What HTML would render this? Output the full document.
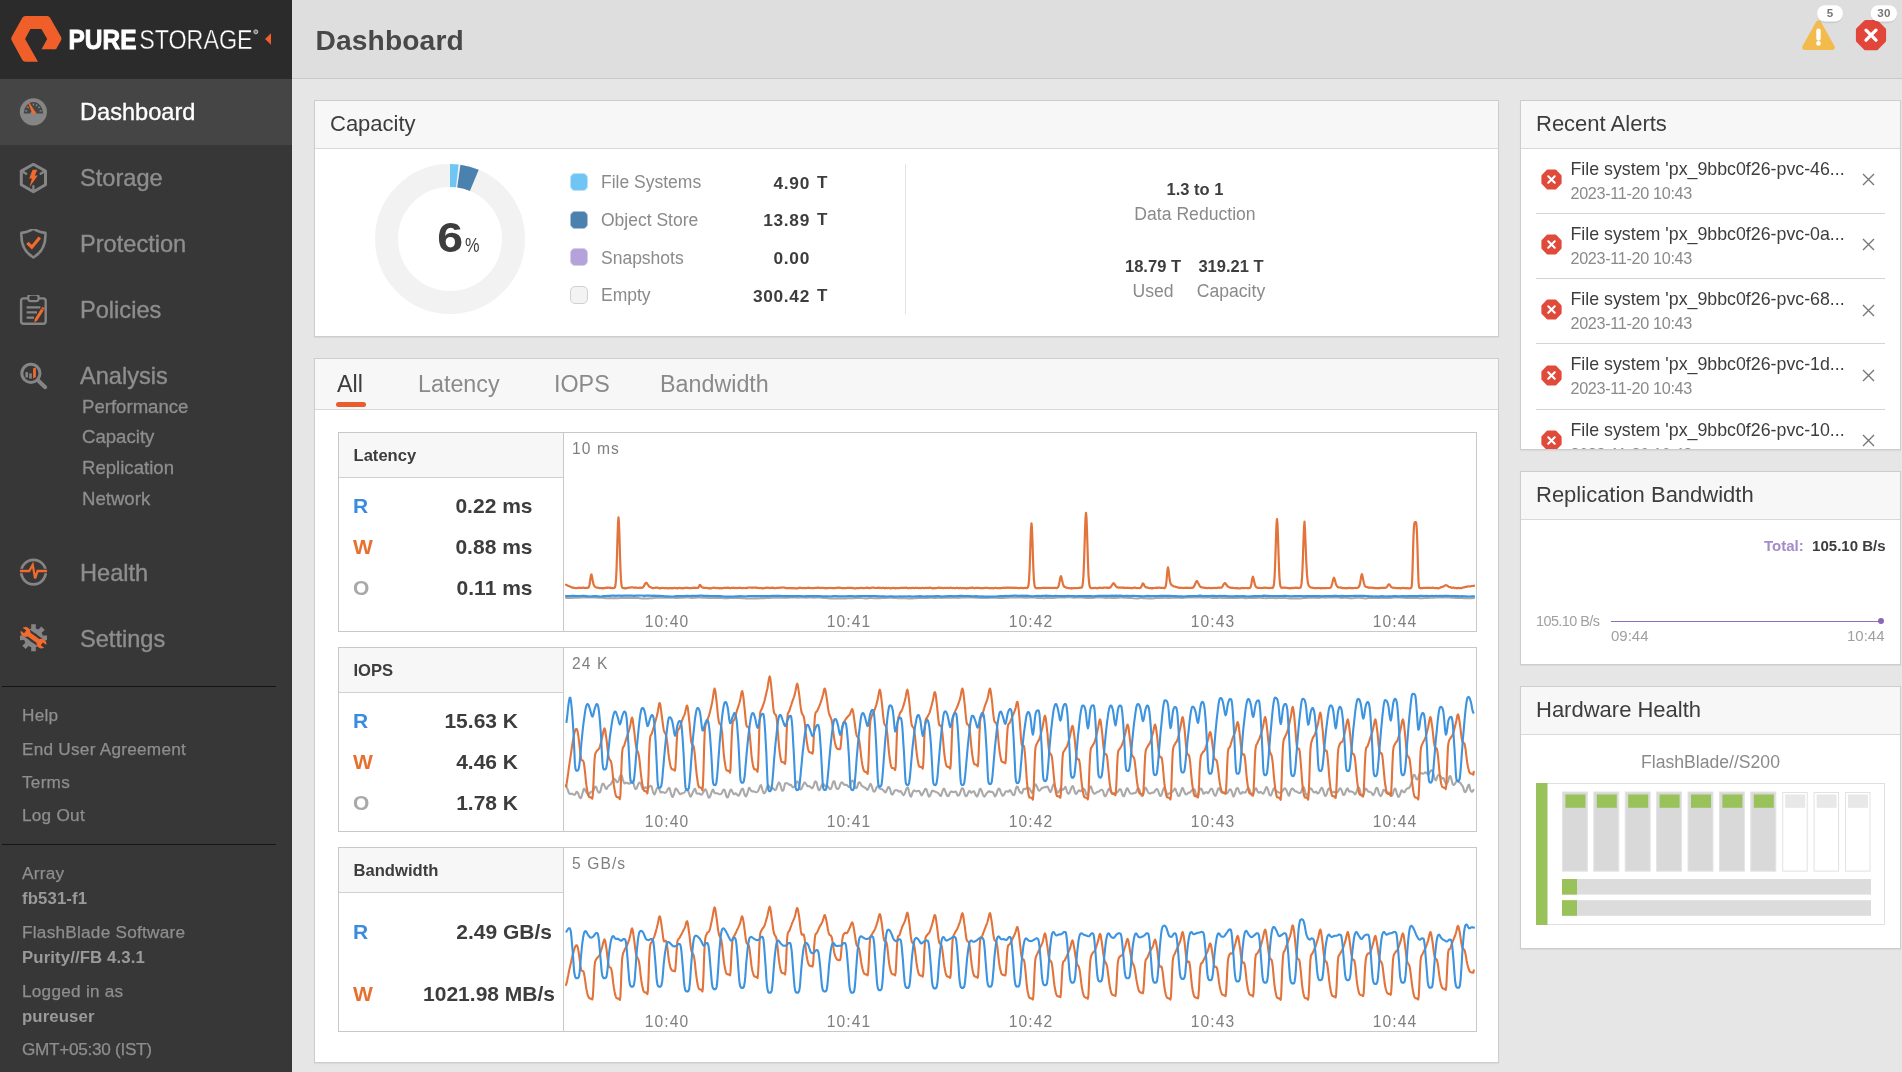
<!DOCTYPE html>
<html><head><meta charset="utf-8"><title>Dashboard</title>
<style>
*{box-sizing:border-box;margin:0;padding:0}
html,body{width:1902px;height:1072px;overflow:hidden}
body{position:relative;background:#e6e6e6;font-family:"Liberation Sans",sans-serif;color:#3d3d3d}
#root{position:absolute;left:0;top:0;width:1902px;height:1072px;will-change:transform}
.abs{position:absolute}
#sb{position:absolute;left:0;top:0;width:292px;height:1072px;background:#373737}
#sbh{position:absolute;left:0;top:0;width:292px;height:79px;background:#2b2b2b}
.nav{position:absolute;left:0;width:292px;height:66px}
.nav.active{background:#454545}
.nav .ico{position:absolute;left:19px;top:18px;width:30px;height:30px}
.nav .ico svg{display:block}
.nav .lbl{position:absolute;left:80px;top:18.5px;font-size:23.6px;line-height:28px;color:#8e8e8e;-webkit-text-stroke:0.35px #8e8e8e;white-space:nowrap}
.nav.active .lbl{color:#fff;-webkit-text-stroke:0.35px #fff}
.sub{position:absolute;left:82px;font-size:18.6px;line-height:22px;color:#8e8e8e;-webkit-text-stroke:0.3px #8e8e8e;white-space:nowrap}
.hr{position:absolute;left:2px;width:274px;height:1px;background:#151515}
.lnk{position:absolute;left:22px;margin-top:0.1px;font-size:17.2px;letter-spacing:0.25px;line-height:20px;color:#8e8e8e;-webkit-text-stroke:0.25px #8e8e8e;white-space:nowrap}
.lnk.b{-webkit-text-stroke:0;margin-top:0.7px;font-weight:bold;color:#9a9a9a;font-size:16.8px;letter-spacing:0.1px}
#tb{position:absolute;left:292px;top:0;width:1610px;height:79px;background:#dedede;border-bottom:1px solid #c9c9c9}
#title{position:absolute;left:23.5px;top:22px;font-size:28.2px;font-weight:bold;line-height:36px;color:#484848;letter-spacing:0.12px;white-space:nowrap}
.panel{position:absolute;background:#fff;border:1px solid #cdcdcd;box-shadow:0 1px 1px rgba(0,0,0,0.05)}
.ph{position:absolute;left:0;top:0;right:0;height:48px;background:#f7f7f7;border-bottom:1px solid #d9d9d9}
.ph span{position:absolute;left:15px;top:10px;font-size:22px;line-height:26px;color:#3d3d3d;white-space:nowrap}
.pct{left:122.5px;top:112px;white-space:nowrap;color:#3d3d3d}
.pct b{font-size:43.4px;line-height:48px;display:inline-block;transform:scaleX(1.07)}
.pct span{font-size:20.4px;margin-left:3.6px;display:inline-block;transform:scaleX(0.8);transform-origin:left bottom}
.sw{position:absolute;left:255px;width:18px;height:18px;border-radius:5px;border:1px solid}
.cl{position:absolute;left:286px;font-size:17.5px;line-height:26px;color:#8a8a8a;white-space:nowrap}
.cv{position:absolute;left:395px;width:100px;text-align:right;font-size:17.3px;letter-spacing:0.7px;line-height:26px;font-weight:bold;color:#3d3d3d;white-space:nowrap}
.cu{position:absolute;left:502px;font-size:17px;line-height:26px;font-weight:bold;color:#3d3d3d}
.vsep{left:590px;top:63px;width:1px;height:150px;background:#e3e3e3}
.cstat{text-align:center;font-size:16.5px;line-height:22px;white-space:nowrap;color:#3d3d3d}
.cstat.g{color:#8a8a8a;font-size:17.6px}
.tabs{position:absolute;left:0;top:0;right:0;height:51px;background:#f7f7f7;border-bottom:1px solid #d9d9d9}
.tab{position:absolute;top:10px;font-size:23.3px;line-height:30px;color:#8a8a8a;white-space:nowrap}
.tab.on{color:#3d3d3d}
.tabbar{position:absolute;left:21px;top:43px;width:30px;height:5.4px;border-radius:3px;background:#ea5b2e}
.mbox{position:absolute;left:23px;width:1139px;border:1px solid #c8c8c8;background:#fff}
.mleft{position:absolute;left:0;top:0;width:225px;bottom:0;border-right:1px solid #c8c8c8}
.mh{position:absolute;left:0;top:0;right:0;height:45px;background:#f7f7f7;border-bottom:1px solid #d0d0d0;font-weight:bold;font-size:16.6px;line-height:46px;padding-left:14.5px;color:#3d3d3d}
.ml{position:absolute;left:14px;font-weight:bold;font-size:21px;line-height:26px}
.mv{position:absolute;font-weight:bold;font-size:21px;line-height:26px;color:#3d3d3d;white-space:nowrap}
.mchart{position:absolute;left:225px;top:0;right:0;bottom:0}
.mchart svg{display:block}
.al{position:absolute;left:15px;width:349px;height:65px;border-bottom:1px solid #d4d4d4}
.at{position:absolute;left:34.5px;top:7.5px;font-size:17.8px;line-height:24px;color:#3d3d3d;white-space:nowrap}
.ad{position:absolute;left:34.5px;top:31.5px;font-size:16.2px;letter-spacing:-0.32px;line-height:24px;color:#8a8a8a;white-space:nowrap}
.rt{right:14.5px;top:64px;font-size:15px;line-height:20px;white-space:nowrap}
.rt .p{color:#a58bc9;font-weight:bold}
.rl{font-size:15px;line-height:18px;color:#a0a0a0;white-space:nowrap}
.hwt{left:0;right:0;top:64px;text-align:center;font-size:17.6px;line-height:22px;color:#8a8a8a}
.ax{font-family:"Liberation Sans",sans-serif;font-size:15.6px;letter-spacing:1.1px;fill:#7f7f7f}

</style></head>
<body>
<div id="root">

<div id="sb">
  <div id="sbh"><svg class="abs" style="left:0;top:0" width="292" height="79" viewBox="0 0 292 79">
<path d="M14.59 38.64 L25.32 19.40 L47.12 19.40 L58.11 38.64 L47.12 58.40 L25.32 58.40 Z" fill="#f05f2a" stroke="#f05f2a" stroke-width="6.8" stroke-linejoin="round"/>
<path d="M30.4 29.05 L41.4 29.05 L47.2 38.9 L41.5 49.2 L64 49.2 L64 66 L40.4 66 L25.1 38.9 Z" fill="#2b2b2b"/>
<circle cx="53.4" cy="46.2" r="3" fill="#f05f2a"/>
<text x="68.5" y="48.8" font-family="Liberation Sans, sans-serif" font-weight="bold" font-size="26.8" fill="#fff" stroke="#fff" stroke-width="0.9" textLength="68" lengthAdjust="spacingAndGlyphs">PURE</text>
<text x="139.2" y="48.8" font-family="Liberation Sans, sans-serif" font-size="26.8" fill="#fff" stroke="#2b2b2b" stroke-width="0.35" textLength="113.4" lengthAdjust="spacingAndGlyphs">STORAGE</text>
<circle cx="255.8" cy="31.8" r="2" fill="#777" stroke="#ddd" stroke-width="0.8"/>
<path d="M265 39 L271 33.2 V44.8 Z" fill="#f05f2a"/>
</svg></div>
  <div class="nav active" style="top:79px"><span class="ico"><svg width="30" height="32" viewBox="0 0 30 32">
<circle cx="14.4" cy="14.8" r="13.6" fill="#858585"/>
<path d="M4.7 16.5 A9.7 11.4 0 0 1 24.1 16.5 L17.4 16.5 A3 2.2 0 0 0 11.4 16.5 Z" fill="#454545"/>
<path d="M8.9 5.0 L9.7 4.7 L16.3 14.7 A1.75 1.75 0 0 1 13.1 16.3 Z" fill="#f26a2e"/>
<path d="M6.0 13.6l2.2 0.5M8.0 9.6l1.7 1.2M14.4 6.4v2.2M18.0 7.2l-0.8 2M20.9 9.8l-1.6 1.3M22.8 13.6l-2.2 0.5" stroke="#858585" stroke-width="1.3"/>
</svg></span><span class="lbl">Dashboard</span></div>
  <div class="nav" style="top:145px"><span class="ico"><svg width="30" height="32" viewBox="0 0 30 32">
<path d="M14.4 1.3 L26.5 8.0 L26.5 21.8 L14.4 28.7 L2.3 21.8 L2.3 8.0 Z" fill="none" stroke="#858585" stroke-width="3" stroke-linejoin="round"/>
<path d="M3 8.2l4.2 2.6M25.8 8.2l-4.2 2.6M14.4 27.8v-4.6" stroke="#858585" stroke-width="2.3" stroke-linecap="round"/>
<path d="M13.6 6.8 L18.4 6.8 L15.8 12.6 L18.8 12.6 L10.6 24 L12.9 15.6 L10.2 15.6 Z" fill="#f26a2e"/>
</svg></span><span class="lbl">Storage</span></div>
  <div class="nav" style="top:211px"><span class="ico"><svg width="30" height="32" viewBox="0 0 30 32">
<g transform="translate(0,-1.8)"><path d="M14.4 1.5 C10.4 4.2 6.6 5.4 2.4 5.7 C1.8 16 4.8 24.8 14.4 30.2 C24 24.8 27 16 26.4 5.7 C22.2 5.4 18.4 4.2 14.4 1.5 Z" fill="none" stroke="#858585" stroke-width="2.6" stroke-linejoin="round"/>
<path d="M8.4 15.6 L12.8 20 L20.8 10.4" fill="none" stroke="#f26a2e" stroke-width="3.2" stroke-linejoin="miter"/></g>
</svg></span><span class="lbl">Protection</span></div>
  <div class="nav" style="top:277px"><span class="ico"><svg width="30" height="32" viewBox="0 0 30 32"><g transform="translate(0,-1.8)">
<path d="M9 5.2 H4.6 Q2.1 5.2 2.1 7.7 V28 Q2.1 30.5 4.6 30.5 H24.2 Q26.7 30.5 26.7 28 V7.7 Q26.7 5.2 24.2 5.2 H19.8" fill="none" stroke="#858585" stroke-width="2.4"/>
<rect x="9.2" y="1.4" width="10.4" height="6.6" rx="2.6" fill="none" stroke="#858585" stroke-width="2.2"/>
<path d="M7.6 14.2 H21.4 M7.6 19.2 H18 M7.6 24.4 H15" stroke="#858585" stroke-width="2.2"/>
<path d="M23.4 13.6 L25.9 15.2 L18.2 27.4 L15.4 29.3 L15.7 25.8 Z" fill="#f26a2e"/>
<path d="M22.4 15.3 L24.9 16.9" stroke="#383838" stroke-width="0.8"/></g>
</svg></span><span class="lbl">Policies</span></div>
  <div class="nav" style="top:343px"><span class="ico"><svg width="30" height="32" viewBox="0 0 30 32">
<circle cx="11.9" cy="12.3" r="9.1" fill="none" stroke="#858585" stroke-width="3"/>
<path d="M18.9 19.3 L26.2 26.2" stroke="#858585" stroke-width="4" stroke-linecap="round"/>
<rect x="6.4" y="11.2" width="2.6" height="5.2" fill="#858585"/>
<rect x="10.2" y="12.4" width="2.6" height="5.2" fill="#858585"/>
<path d="M14.1 7.6 L16.9 6.4 V16 L14.1 17.6 Z" fill="#f26a2e"/>
</svg></span><span class="lbl">Analysis</span></div>
  <div class="sub" style="top:396px">Performance</div>
  <div class="sub" style="top:426px">Capacity</div>
  <div class="sub" style="top:457px">Replication</div>
  <div class="sub" style="top:488px">Network</div>
  <div class="nav" style="top:540px"><span class="ico"><svg width="30" height="32" viewBox="0 0 30 32">
<circle cx="14.5" cy="14.05" r="12.25" fill="none" stroke="#858585" stroke-width="2.7"/>
<path d="M0 13 H29" stroke="#373737" stroke-width="4.4"/>
<path d="M0.9 13 H10.2 L13.7 6.8 L16.1 20.4 L18.6 13 H28.1" fill="none" stroke="#f26a2e" stroke-width="2.3" stroke-linejoin="miter" stroke-miterlimit="3"/>
</svg></span><span class="lbl">Health</span></div>
  <div class="nav" style="top:606px"><span class="ico"><svg width="30" height="32" viewBox="0 0 30 32">
<path d="M28.00 11.44 L28.00 16.16 L23.83 16.04 L22.69 18.82 L25.71 21.68 L22.38 25.01 L19.52 21.99 L16.74 23.13 L16.86 27.30 L12.14 27.30 L12.26 23.13 L9.48 21.99 L6.62 25.01 L3.29 21.68 L6.31 18.82 L5.17 16.04 L1.00 16.16 L1.00 11.44 L5.17 11.56 L6.31 8.78 L3.29 5.92 L6.62 2.59 L9.48 5.61 L12.26 4.47 L12.14 0.30 L16.86 0.30 L16.74 4.47 L19.52 5.61 L22.38 2.59 L25.71 5.92 L22.69 8.78 L23.83 11.56 Z M14.5 9.2 a4.6 4.6 0 1 0 0.01 0 Z" fill="#858585" fill-rule="evenodd"/>
<path d="M0.75 3.81 L28.25 23.79" stroke="#373737" stroke-width="8.8"/><path d="M6.73 8.16 L22.27 19.44" stroke="#f26a2e" stroke-width="4.5"/><circle cx="6.49" cy="7.98" r="4.9" fill="#f26a2e"/><path d="M6.17 7.75 L0.75 3.81" stroke="#373737" stroke-width="3.5"/><circle cx="22.51" cy="19.62" r="4.9" fill="#f26a2e"/><path d="M22.83 19.85 L28.25 23.79" stroke="#373737" stroke-width="3.5"/>
</svg></span><span class="lbl">Settings</span></div>
  <div class="hr" style="top:686px"></div>
  <div class="lnk" style="top:705px">Help</div>
  <div class="lnk" style="top:739px">End User Agreement</div>
  <div class="lnk" style="top:772px">Terms</div>
  <div class="lnk" style="top:805px">Log Out</div>
  <div class="hr" style="top:844px"></div>
  <div class="lnk" style="top:863px">Array</div>
  <div class="lnk b" style="top:888px">fb531-f1</div>
  <div class="lnk" style="top:922px">FlashBlade Software</div>
  <div class="lnk b" style="top:947px">Purity//FB 4.3.1</div>
  <div class="lnk" style="top:981px">Logged in as</div>
  <div class="lnk b" style="top:1006px">pureuser</div>
  <div class="lnk" style="top:1039px;letter-spacing:-0.3px">GMT+05:30 (IST)</div>
</div>


<div id="tb">
  <div id="title">Dashboard</div>
  
<svg class="abs" style="left:1505px;top:0" width="105" height="60" viewBox="0 0 105 60">
  <path d="M21.5 23 L35.1 47.3 H7.9 Z" fill="#f2bb4c" stroke="#f2bb4c" stroke-width="5.4" stroke-linejoin="round"/>
  <path d="M21.5 30.6 V38.4" stroke="#fff" stroke-width="4.4" stroke-linecap="round"/>
  <circle cx="21.5" cy="43.4" r="2.3" fill="#fff"/>
  <path d="M68.6 22.2 h10.8 l7.6 7.6 v10.8 l-7.6 7.6 h-10.8 l-7.6 -7.6 v-10.8 z" fill="#e2463a" stroke="#e2463a" stroke-width="4.2" stroke-linejoin="round"/>
  <path d="M69.0 30.2 l10 10 M79.0 30.2 l-10 10" stroke="#fff" stroke-width="3.3" stroke-linecap="round"/>
  <rect x="20" y="6.2" width="26" height="17" rx="8.5" fill="#000" opacity="0.08"/><rect x="20" y="5.2" width="26" height="16.4" rx="8.2" fill="#fff"/>
  <rect x="73.6" y="6.2" width="26.4" height="17" rx="8.5" fill="#000" opacity="0.08"/><rect x="73.6" y="5.2" width="26.4" height="16.4" rx="8.2" fill="#fff"/>
  <text x="33" y="17.4" text-anchor="middle" font-family="Liberation Sans, sans-serif" font-weight="bold" font-size="11.6" fill="#777">5</text>
  <text x="87.1" y="17.4" text-anchor="middle" font-family="Liberation Sans, sans-serif" font-weight="bold" font-size="11.6" letter-spacing="0.5" fill="#777">30</text>
</svg>
</div>


<div class="panel" style="left:314px;top:100px;width:1185px;height:237px">
  <div class="ph"><span>Capacity</span></div>
  <svg class="abs" style="left:58px;top:61.3px" width="154" height="154" viewBox="-77 -77 154 154">
    <circle r="63.5" fill="none" stroke="#f3f2f3" stroke-width="23"/>
    <path d="M0 -63.5 A63.5 63.5 0 0 1 7.30 -63.08" fill="none" stroke="#6fc6f5" stroke-width="23"/>
    <path d="M8.84 -62.88 A63.5 63.5 0 0 1 24.30 -58.67" fill="none" stroke="#4b81ae" stroke-width="23"/>
  </svg>
  <div class="abs pct"><b>6</b><span>%</span></div>
  <div class="sw" style="top:71.9px;background:#6fc6f5;border-color:#bfe0f3"></div><div class="cl" style="top:68.4px">File Systems</div><div class="cv" style="top:68.5px">4.90</div><div class="cu" style="top:68.5px">T</div>
  <div class="sw" style="top:109.7px;background:#4b81ae;border-color:#a9c0d4"></div><div class="cl" style="top:106.2px">Object Store</div><div class="cv" style="top:106.3px">13.89</div><div class="cu" style="top:106.3px">T</div>
  <div class="sw" style="top:147.4px;background:#b4a2da;border-color:#d6cdea"></div><div class="cl" style="top:143.9px">Snapshots</div><div class="cv" style="top:144.0px">0.00</div><div class="cu" style="top:144.0px"></div>
  <div class="sw" style="top:184.9px;background:#f4f3f4;border-color:#d0d0d0"></div><div class="cl" style="top:181.4px">Empty</div><div class="cv" style="top:181.5px">300.42</div><div class="cu" style="top:181.5px">T</div>
  <div class="abs vsep"></div>
  <div class="abs cstat" style="left:780px;width:200px;top:77px"><b>1.3 to 1</b></div>
  <div class="abs cstat g" style="left:780px;width:200px;top:102px">Data Reduction</div>
  <div class="abs cstat" style="left:788px;width:100px;top:154px"><b>18.79 T</b></div>
  <div class="abs cstat g" style="left:788px;width:100px;top:179px">Used</div>
  <div class="abs cstat" style="left:866px;width:100px;top:154px"><b>319.21 T</b></div>
  <div class="abs cstat g" style="left:866px;width:100px;top:179px">Capacity</div>
</div>


<div class="panel" style="left:314px;top:358px;width:1185px;height:705px">
  <div class="tabs">
    <span class="tab on" style="left:22px">All</span>
    <span class="tab" style="left:103px">Latency</span>
    <span class="tab" style="left:239px">IOPS</span>
    <span class="tab" style="left:345px">Bandwidth</span>
    <div class="tabbar"></div>
  </div>
  <div class="mbox" style="top:73px;height:200px">
      <div class="mleft"><div class="mh">Latency</div><div class="ml" style="top:59.7px;color:#3a8dde">R</div><div class="mv" style="top:59.7px;right:30.5px">0.22 ms</div><div class="ml" style="top:100.7px;color:#e8702f">W</div><div class="mv" style="top:100.7px;right:30.5px">0.88 ms</div><div class="ml" style="top:141.7px;color:#a9a9a9">O</div><div class="mv" style="top:141.7px;right:30.5px">0.11 ms</div></div>
      <div class="mchart"><svg width="911" height="198" viewBox="0 0 911 198"><text class="ax" x="8" y="21">10 ms</text><text class="ax" x="103" y="194.3" text-anchor="middle">10:40</text><text class="ax" x="285" y="194.3" text-anchor="middle">10:41</text><text class="ax" x="467" y="194.3" text-anchor="middle">10:42</text><text class="ax" x="649" y="194.3" text-anchor="middle">10:43</text><text class="ax" x="831" y="194.3" text-anchor="middle">10:44</text><path d="M2.0 165.1 L4.0 165.1 L6.0 164.9 L8.0 165.0 L10.0 164.8 L12.0 164.7 L14.0 164.6 L16.0 164.8 L18.0 164.6 L20.0 164.6 L22.0 164.4 L24.0 164.2 L26.0 164.4 L28.0 164.5 L30.0 164.4 L32.0 164.4 L34.0 164.8 L36.0 164.6 L38.0 164.8 L40.0 165.0 L42.0 165.2 L44.0 165.3 L46.0 165.1 L48.0 165.2 L50.0 165.0 L52.0 165.2 L54.0 165.2 L56.0 165.0 L58.0 165.1 L60.0 164.8 L62.0 164.9 L64.0 164.8 L66.0 164.9 L68.0 165.0 L70.0 164.9 L72.0 165.0 L74.0 165.1 L76.0 165.2 L78.0 165.4 L80.0 165.3 L82.0 165.5 L84.0 165.6 L86.0 165.3 L88.0 165.2 L90.0 165.1 L92.0 164.8 L94.0 164.8 L96.0 164.6 L98.0 164.8 L100.0 164.7 L102.0 164.7 L104.0 164.5 L106.0 164.8 L108.0 164.8 L110.0 164.8 L112.0 165.1 L114.0 164.9 L116.0 164.8 L118.0 164.5 L120.0 164.7 L122.0 164.5 L124.0 164.6 L126.0 164.7 L128.0 165.0 L130.0 164.7 L132.0 164.7 L134.0 164.6 L136.0 164.6 L138.0 164.7 L140.0 164.6 L142.0 164.7 L144.0 164.9 L146.0 164.9 L148.0 165.1 L150.0 165.0 L152.0 165.1 L154.0 164.9 L156.0 164.9 L158.0 165.1 L160.0 165.2 L162.0 164.9 L164.0 165.2 L166.0 165.0 L168.0 165.0 L170.0 165.0 L172.0 165.0 L174.0 164.7 L176.0 165.0 L178.0 165.2 L180.0 165.3 L182.0 165.5 L184.0 165.5 L186.0 165.5 L188.0 165.4 L190.0 165.4 L192.0 165.3 L194.0 165.5 L196.0 165.3 L198.0 165.1 L200.0 165.3 L202.0 165.1 L204.0 165.1 L206.0 164.9 L208.0 164.7 L210.0 164.7 L212.0 164.5 L214.0 164.7 L216.0 164.8 L218.0 164.6 L220.0 164.7 L222.0 164.8 L224.0 164.7 L226.0 164.6 L228.0 164.5 L230.0 164.3 L232.0 164.6 L234.0 164.7 L236.0 164.6 L238.0 164.5 L240.0 164.4 L242.0 164.7 L244.0 164.5 L246.0 164.5 L248.0 164.4 L250.0 164.7 L252.0 164.5 L254.0 164.5 L256.0 164.6 L258.0 164.8 L260.0 165.0 L262.0 165.1 L264.0 165.2 L266.0 165.4 L268.0 165.5 L270.0 165.6 L272.0 165.5 L274.0 165.4 L276.0 165.5 L278.0 165.5 L280.0 165.4 L282.0 165.4 L284.0 165.3 L286.0 165.2 L288.0 165.3 L290.0 165.2 L292.0 165.0 L294.0 164.8 L296.0 164.9 L298.0 165.1 L300.0 165.2 L302.0 165.4 L304.0 165.3 L306.0 165.0 L308.0 165.0 L310.0 165.2 L312.0 165.2 L314.0 165.2 L316.0 165.2 L318.0 165.1 L320.0 165.0 L322.0 165.1 L324.0 164.8 L326.0 164.8 L328.0 164.8 L330.0 165.1 L332.0 165.0 L334.0 165.3 L336.0 165.2 L338.0 165.0 L340.0 165.3 L342.0 165.2 L344.0 165.4 L346.0 165.5 L348.0 165.6 L350.0 165.3 L352.0 165.3 L354.0 165.0 L356.0 165.1 L358.0 165.0 L360.0 165.0 L362.0 165.0 L364.0 164.9 L366.0 164.6 L368.0 164.8 L370.0 164.9 L372.0 164.9 L374.0 164.8 L376.0 164.8 L378.0 164.9 L380.0 164.7 L382.0 164.8 L384.0 164.6 L386.0 164.7 L388.0 164.8 L390.0 164.6 L392.0 164.8 L394.0 164.9 L396.0 164.7 L398.0 164.5 L400.0 164.6 L402.0 164.6 L404.0 164.4 L406.0 164.6 L408.0 164.6 L410.0 164.5 L412.0 164.8 L414.0 164.7 L416.0 164.9 L418.0 165.0 L420.0 164.9 L422.0 164.8 L424.0 164.9 L426.0 164.8 L428.0 164.8 L430.0 164.7 L432.0 164.7 L434.0 164.9 L436.0 165.0 L438.0 165.0 L440.0 164.9 L442.0 164.7 L444.0 164.7 L446.0 164.5 L448.0 164.4 L450.0 164.6 L452.0 164.5 L454.0 164.3 L456.0 164.6 L458.0 164.6 L460.0 164.8 L462.0 164.7 L464.0 164.7 L466.0 164.6 L468.0 164.6 L470.0 164.6 L472.0 164.8 L474.0 165.0 L476.0 164.9 L478.0 165.0 L480.0 165.2 L482.0 165.1 L484.0 165.0 L486.0 164.9 L488.0 164.9 L490.0 164.9 L492.0 164.7 L494.0 164.6 L496.0 164.5 L498.0 164.5 L500.0 164.4 L502.0 164.4 L504.0 164.3 L506.0 164.2 L508.0 164.6 L510.0 164.8 L512.0 164.6 L514.0 164.4 L516.0 164.6 L518.0 164.6 L520.0 164.7 L522.0 164.9 L524.0 165.0 L526.0 164.8 L528.0 164.9 L530.0 164.7 L532.0 164.5 L534.0 164.5 L536.0 164.3 L538.0 164.5 L540.0 164.7 L542.0 164.9 L544.0 164.8 L546.0 164.8 L548.0 165.0 L550.0 164.8 L552.0 165.0 L554.0 164.8 L556.0 164.6 L558.0 164.5 L560.0 164.7 L562.0 164.8 L564.0 165.0 L566.0 164.8 L568.0 165.1 L570.0 165.3 L572.0 165.4 L574.0 165.4 L576.0 165.0 L578.0 165.0 L580.0 165.2 L582.0 165.3 L584.0 165.4 L586.0 165.2 L588.0 165.4 L590.0 165.3 L592.0 165.0 L594.0 165.0 L596.0 164.8 L598.0 165.0 L600.0 164.8 L602.0 164.8 L604.0 165.1 L606.0 164.9 L608.0 164.7 L610.0 164.7 L612.0 164.7 L614.0 164.6 L616.0 164.7 L618.0 164.9 L620.0 164.7 L622.0 164.6 L624.0 164.4 L626.0 164.3 L628.0 164.4 L630.0 164.4 L632.0 164.4 L634.0 164.2 L636.0 164.6 L638.0 164.4 L640.0 164.7 L642.0 164.6 L644.0 164.6 L646.0 164.6 L648.0 164.9 L650.0 165.0 L652.0 165.0 L654.0 164.9 L656.0 164.6 L658.0 164.9 L660.0 164.7 L662.0 164.9 L664.0 164.7 L666.0 164.9 L668.0 164.8 L670.0 165.0 L672.0 164.9 L674.0 164.9 L676.0 164.7 L678.0 164.8 L680.0 165.0 L682.0 165.2 L684.0 165.1 L686.0 164.9 L688.0 165.0 L690.0 165.1 L692.0 165.0 L694.0 164.8 L696.0 164.7 L698.0 164.9 L700.0 165.1 L702.0 165.2 L704.0 165.0 L706.0 165.0 L708.0 164.9 L710.0 165.0 L712.0 165.2 L714.0 165.1 L716.0 165.1 L718.0 164.9 L720.0 164.8 L722.0 165.1 L724.0 165.2 L726.0 165.4 L728.0 165.5 L730.0 165.5 L732.0 165.3 L734.0 165.5 L736.0 165.5 L738.0 165.3 L740.0 165.0 L742.0 165.1 L744.0 164.8 L746.0 164.8 L748.0 164.7 L750.0 164.8 L752.0 164.6 L754.0 164.9 L756.0 164.7 L758.0 164.6 L760.0 164.6 L762.0 164.7 L764.0 164.6 L766.0 164.4 L768.0 164.5 L770.0 164.5 L772.0 164.5 L774.0 164.6 L776.0 164.8 L778.0 165.1 L780.0 164.8 L782.0 164.8 L784.0 165.1 L786.0 165.2 L788.0 165.3 L790.0 165.1 L792.0 164.8 L794.0 164.7 L796.0 164.8 L798.0 165.0 L800.0 165.2 L802.0 165.4 L804.0 165.1 L806.0 165.0 L808.0 165.1 L810.0 164.9 L812.0 165.0 L814.0 165.1 L816.0 165.1 L818.0 165.1 L820.0 164.9 L822.0 165.0 L824.0 164.8 L826.0 165.0 L828.0 164.8 L830.0 164.6 L832.0 164.5 L834.0 164.4 L836.0 164.4 L838.0 164.7 L840.0 164.8 L842.0 165.1 L844.0 165.0 L846.0 165.0 L848.0 165.1 L850.0 164.9 L852.0 165.0 L854.0 165.0 L856.0 165.2 L858.0 165.3 L860.0 165.0 L862.0 164.9 L864.0 164.9 L866.0 164.7 L868.0 164.7 L870.0 164.7 L872.0 164.5 L874.0 164.4 L876.0 164.5 L878.0 164.3 L880.0 164.5 L882.0 164.4 L884.0 164.4 L886.0 164.5 L888.0 164.8 L890.0 164.8 L892.0 165.1 L894.0 165.1 L896.0 165.0 L898.0 165.1 L900.0 165.3 L902.0 165.2 L904.0 165.3 L906.0 165.3 L908.0 165.2 L910.0 165.0" fill="none" stroke="#a9a9a9" stroke-width="2" stroke-linejoin="round" stroke-linecap="round"/><path d="M2.0 151.7 L2.5 151.9 L3.0 152.2 L3.5 152.4 L4.0 152.7 L4.5 152.9 L5.0 153.1 L5.5 153.4 L6.0 153.6 L6.5 153.9 L7.0 154.0 L7.5 154.2 L8.0 154.6 L8.5 154.8 L9.0 154.7 L9.5 154.6 L10.0 154.8 L10.5 155.0 L11.0 155.0 L11.5 155.0 L12.0 155.2 L12.5 155.0 L13.0 155.1 L13.5 155.0 L14.0 154.9 L14.5 154.7 L15.0 154.7 L15.5 154.9 L16.0 154.8 L16.5 154.9 L17.0 154.9 L17.5 154.9 L18.0 154.9 L18.5 154.8 L19.0 154.7 L19.5 154.6 L20.0 154.8 L20.5 154.8 L21.0 154.8 L21.5 154.8 L22.0 154.9 L22.5 154.8 L23.0 154.9 L23.5 155.0 L24.0 154.8 L24.5 154.5 L25.0 153.5 L25.5 151.7 L26.0 148.7 L26.5 144.9 L27.0 142.1 L27.5 141.4 L28.0 143.5 L28.5 146.5 L29.0 149.1 L29.5 151.2 L30.0 152.3 L30.5 153.2 L31.0 153.7 L31.5 154.1 L32.0 154.4 L32.5 154.5 L33.0 154.6 L33.5 154.7 L34.0 154.8 L34.5 154.8 L35.0 155.0 L35.5 155.2 L36.0 155.1 L36.5 155.2 L37.0 155.0 L37.5 155.1 L38.0 155.1 L38.5 155.3 L39.0 155.3 L39.5 155.2 L40.0 155.1 L40.5 155.2 L41.0 154.9 L41.5 154.9 L42.0 154.8 L42.5 154.7 L43.0 154.6 L43.5 154.8 L44.0 154.7 L44.5 154.6 L45.0 154.7 L45.5 154.9 L46.0 154.7 L46.5 154.8 L47.0 154.8 L47.5 155.0 L48.0 155.1 L48.5 155.3 L49.0 155.1 L49.5 155.0 L50.0 154.9 L50.5 154.9 L51.0 154.3 L51.5 152.0 L52.0 146.8 L52.5 137.2 L53.0 122.4 L53.5 104.9 L54.0 90.2 L54.5 84.3 L55.0 90.0 L55.5 104.8 L56.0 122.3 L56.5 137.1 L57.0 146.9 L57.5 152.0 L58.0 154.1 L58.5 154.8 L59.0 155.1 L59.5 154.9 L60.0 155.1 L60.5 155.2 L61.0 155.3 L61.5 155.4 L62.0 155.2 L62.5 155.2 L63.0 155.0 L63.5 155.0 L64.0 154.9 L64.5 154.7 L65.0 154.7 L65.5 154.6 L66.0 154.6 L66.5 154.5 L67.0 154.4 L67.5 154.4 L68.0 154.4 L68.5 154.4 L69.0 154.4 L69.5 154.6 L70.0 154.8 L70.5 154.7 L71.0 154.6 L71.5 154.7 L72.0 154.7 L72.5 154.6 L73.0 154.8 L73.5 155.0 L74.0 155.0 L74.5 155.0 L75.0 154.8 L75.5 154.7 L76.0 154.7 L76.5 154.7 L77.0 154.9 L77.5 154.7 L78.0 154.5 L78.5 154.6 L79.0 154.3 L79.5 153.7 L80.0 153.0 L80.5 151.9 L81.0 151.0 L81.5 150.3 L82.0 149.8 L82.5 149.9 L83.0 150.4 L83.5 151.1 L84.0 151.7 L84.5 152.6 L85.0 153.2 L85.5 153.8 L86.0 154.0 L86.5 154.1 L87.0 154.4 L87.5 154.7 L88.0 154.8 L88.5 155.0 L89.0 155.1 L89.5 155.1 L90.0 155.0 L90.5 155.0 L91.0 154.9 L91.5 154.7 L92.0 154.6 L92.5 154.6 L93.0 154.6 L93.5 154.7 L94.0 154.9 L94.5 154.9 L95.0 155.1 L95.5 155.3 L96.0 155.4 L96.5 155.3 L97.0 155.1 L97.5 155.0 L98.0 154.9 L98.5 154.8 L99.0 154.9 L99.5 155.0 L100.0 155.2 L100.5 155.1 L101.0 155.2 L101.5 155.2 L102.0 155.0 L102.5 155.1 L103.0 155.2 L103.5 155.3 L104.0 155.3 L104.5 155.3 L105.0 155.1 L105.5 155.2 L106.0 155.1 L106.5 155.2 L107.0 155.3 L107.5 155.2 L108.0 155.1 L108.5 155.3 L109.0 155.3 L109.5 155.1 L110.0 155.0 L110.5 154.8 L111.0 155.0 L111.5 155.1 L112.0 155.0 L112.5 155.1 L113.0 155.3 L113.5 155.3 L114.0 155.2 L114.5 155.1 L115.0 155.0 L115.5 154.8 L116.0 155.0 L116.5 155.1 L117.0 155.1 L117.5 155.2 L118.0 155.2 L118.5 155.3 L119.0 155.3 L119.5 155.2 L120.0 155.0 L120.5 154.9 L121.0 154.9 L121.5 154.9 L122.0 154.8 L122.5 154.8 L123.0 154.7 L123.5 154.9 L124.0 154.9 L124.5 154.9 L125.0 155.0 L125.5 155.1 L126.0 155.1 L126.5 155.2 L127.0 155.2 L127.5 155.1 L128.0 155.1 L128.5 154.9 L129.0 154.9 L129.5 154.8 L130.0 154.7 L130.5 154.8 L131.0 154.7 L131.5 154.8 L132.0 154.9 L132.5 155.0 L133.0 154.9 L133.5 154.9 L134.0 154.8 L134.5 154.4 L135.0 153.4 L135.5 152.4 L136.0 151.9 L136.5 152.3 L137.0 153.2 L137.5 153.8 L138.0 154.2 L138.5 154.5 L139.0 154.7 L139.5 154.7 L140.0 154.8 L140.5 154.8 L141.0 154.9 L141.5 155.0 L142.0 154.9 L142.5 155.0 L143.0 154.9 L143.5 155.1 L144.0 155.2 L144.5 155.3 L145.0 155.4 L145.5 155.2 L146.0 155.2 L146.5 155.3 L147.0 155.4 L147.5 155.2 L148.0 155.0 L148.5 155.0 L149.0 154.8 L149.5 154.7 L150.0 154.6 L150.5 154.8 L151.0 154.9 L151.5 155.1 L152.0 154.9 L152.5 155.0 L153.0 155.1 L153.5 154.9 L154.0 155.1 L154.5 155.3 L155.0 155.1 L155.5 155.3 L156.0 155.2 L156.5 155.1 L157.0 155.3 L157.5 155.4 L158.0 155.2 L158.5 155.1 L159.0 155.1 L159.5 155.0 L160.0 154.9 L160.5 154.8 L161.0 155.0 L161.5 154.8 L162.0 154.8 L162.5 154.9 L163.0 154.7 L163.5 154.7 L164.0 154.8 L164.5 154.8 L165.0 154.7 L165.5 155.0 L166.0 155.1 L166.5 155.2 L167.0 155.0 L167.5 154.9 L168.0 154.8 L168.5 154.9 L169.0 154.9 L169.5 154.7 L170.0 154.8 L170.5 155.0 L171.0 155.1 L171.5 155.0 L172.0 154.9 L172.5 155.0 L173.0 155.1 L173.5 155.1 L174.0 154.9 L174.5 154.8 L175.0 154.9 L175.5 154.9 L176.0 154.7 L176.5 155.0 L177.0 155.0 L177.5 155.1 L178.0 154.9 L178.5 155.1 L179.0 154.9 L179.5 155.1 L180.0 155.0 L180.5 155.0 L181.0 155.0 L181.5 155.2 L182.0 155.0 L182.5 154.9 L183.0 154.9 L183.5 154.8 L184.0 154.7 L184.5 154.6 L185.0 154.5 L185.5 154.5 L186.0 154.5 L186.5 154.6 L187.0 154.7 L187.5 154.7 L188.0 154.8 L188.5 154.7 L189.0 154.7 L189.5 154.6 L190.0 154.6 L190.5 154.5 L191.0 154.7 L191.5 154.7 L192.0 154.7 L192.5 154.7 L193.0 155.0 L193.5 154.8 L194.0 155.0 L194.5 155.0 L195.0 155.0 L195.5 155.1 L196.0 155.0 L196.5 155.0 L197.0 155.1 L197.5 155.3 L198.0 155.1 L198.5 155.2 L199.0 155.3 L199.5 155.3 L200.0 155.2 L200.5 155.1 L201.0 154.9 L201.5 154.8 L202.0 154.7 L202.5 154.8 L203.0 154.8 L203.5 154.7 L204.0 154.6 L204.5 154.8 L205.0 155.0 L205.5 155.1 L206.0 155.0 L206.5 154.9 L207.0 154.8 L207.5 154.8 L208.0 154.7 L208.5 154.8 L209.0 154.7 L209.5 155.0 L210.0 155.1 L210.5 155.1 L211.0 155.0 L211.5 155.2 L212.0 155.1 L212.5 155.0 L213.0 154.8 L213.5 154.8 L214.0 154.8 L214.5 154.9 L215.0 154.8 L215.5 154.8 L216.0 154.7 L216.5 154.6 L217.0 154.6 L217.5 154.6 L218.0 154.5 L218.5 154.4 L219.0 154.5 L219.5 154.5 L220.0 154.6 L220.5 154.7 L221.0 154.9 L221.5 154.9 L222.0 155.0 L222.5 155.2 L223.0 155.1 L223.5 155.0 L224.0 155.2 L224.5 155.0 L225.0 155.1 L225.5 155.1 L226.0 154.9 L226.5 155.1 L227.0 155.2 L227.5 155.2 L228.0 155.3 L228.5 155.3 L229.0 155.1 L229.5 155.1 L230.0 155.1 L230.5 155.2 L231.0 155.3 L231.5 155.3 L232.0 155.3 L232.5 155.4 L233.0 155.4 L233.5 155.4 L234.0 155.2 L234.5 155.0 L235.0 154.8 L235.5 154.8 L236.0 154.7 L236.5 154.9 L237.0 154.9 L237.5 155.0 L238.0 155.0 L238.5 155.1 L239.0 155.1 L239.5 154.9 L240.0 155.0 L240.5 155.1 L241.0 155.1 L241.5 155.1 L242.0 155.1 L242.5 154.9 L243.0 155.0 L243.5 154.9 L244.0 154.8 L244.5 154.7 L245.0 154.9 L245.5 154.8 L246.0 154.9 L246.5 155.1 L247.0 155.1 L247.5 155.0 L248.0 155.0 L248.5 155.1 L249.0 155.2 L249.5 155.2 L250.0 155.2 L250.5 155.0 L251.0 154.9 L251.5 154.8 L252.0 154.9 L252.5 154.9 L253.0 154.9 L253.5 154.7 L254.0 154.6 L254.5 154.6 L255.0 154.8 L255.5 154.9 L256.0 155.0 L256.5 154.9 L257.0 154.9 L257.5 154.9 L258.0 154.9 L258.5 154.8 L259.0 155.0 L259.5 154.9 L260.0 155.1 L260.5 155.2 L261.0 155.0 L261.5 155.0 L262.0 155.1 L262.5 155.3 L263.0 155.2 L263.5 155.1 L264.0 154.9 L264.5 155.1 L265.0 155.0 L265.5 155.0 L266.0 154.9 L266.5 154.9 L267.0 155.1 L267.5 154.9 L268.0 155.1 L268.5 155.1 L269.0 155.2 L269.5 155.2 L270.0 155.1 L270.5 155.2 L271.0 155.2 L271.5 155.0 L272.0 154.8 L272.5 154.8 L273.0 154.8 L273.5 154.8 L274.0 154.7 L274.5 154.7 L275.0 154.7 L275.5 154.9 L276.0 154.7 L276.5 154.9 L277.0 155.0 L277.5 154.9 L278.0 155.1 L278.5 155.1 L279.0 155.3 L279.5 155.1 L280.0 155.1 L280.5 155.0 L281.0 155.2 L281.5 155.2 L282.0 155.1 L282.5 155.0 L283.0 155.0 L283.5 154.8 L284.0 154.7 L284.5 154.9 L285.0 154.8 L285.5 155.0 L286.0 154.9 L286.5 154.8 L287.0 154.9 L287.5 154.8 L288.0 154.8 L288.5 155.0 L289.0 155.1 L289.5 155.2 L290.0 155.2 L290.5 155.4 L291.0 155.4 L291.5 155.4 L292.0 155.4 L292.5 155.1 L293.0 155.2 L293.5 155.1 L294.0 155.2 L294.5 155.2 L295.0 155.1 L295.5 154.9 L296.0 155.1 L296.5 154.9 L297.0 154.9 L297.5 154.9 L298.0 154.8 L298.5 155.0 L299.0 155.1 L299.5 155.0 L300.0 155.1 L300.5 155.0 L301.0 155.0 L301.5 155.0 L302.0 154.8 L302.5 154.7 L303.0 154.7 L303.5 154.9 L304.0 154.9 L304.5 154.8 L305.0 155.0 L305.5 155.2 L306.0 155.1 L306.5 155.0 L307.0 154.9 L307.5 154.7 L308.0 154.7 L308.5 154.6 L309.0 154.6 L309.5 154.6 L310.0 154.7 L310.5 154.9 L311.0 155.0 L311.5 155.0 L312.0 155.0 L312.5 155.0 L313.0 154.9 L313.5 154.9 L314.0 154.7 L314.5 154.7 L315.0 154.9 L315.5 154.8 L316.0 154.9 L316.5 154.9 L317.0 155.1 L317.5 155.0 L318.0 154.9 L318.5 154.8 L319.0 154.8 L319.5 154.8 L320.0 155.0 L320.5 155.2 L321.0 155.3 L321.5 155.0 L322.0 154.8 L322.5 155.0 L323.0 155.1 L323.5 155.1 L324.0 155.1 L324.5 154.9 L325.0 154.9 L325.5 155.1 L326.0 155.2 L326.5 155.3 L327.0 155.4 L327.5 155.2 L328.0 155.0 L328.5 154.9 L329.0 154.9 L329.5 155.0 L330.0 155.2 L330.5 155.2 L331.0 155.2 L331.5 155.3 L332.0 155.2 L332.5 155.2 L333.0 155.0 L333.5 155.1 L334.0 155.0 L334.5 155.1 L335.0 155.2 L335.5 155.1 L336.0 154.9 L336.5 154.8 L337.0 154.9 L337.5 155.0 L338.0 154.9 L338.5 154.7 L339.0 154.8 L339.5 154.9 L340.0 154.8 L340.5 154.8 L341.0 154.9 L341.5 154.7 L342.0 154.7 L342.5 154.7 L343.0 155.0 L343.5 155.0 L344.0 155.2 L344.5 155.1 L345.0 155.0 L345.5 154.9 L346.0 155.1 L346.5 155.2 L347.0 155.1 L347.5 154.9 L348.0 154.9 L348.5 155.0 L349.0 154.9 L349.5 154.9 L350.0 155.0 L350.5 155.1 L351.0 155.0 L351.5 154.8 L352.0 154.8 L352.5 154.8 L353.0 154.9 L353.5 154.8 L354.0 155.0 L354.5 155.1 L355.0 155.1 L355.5 154.9 L356.0 155.1 L356.5 155.0 L357.0 155.1 L357.5 155.0 L358.0 154.9 L358.5 155.0 L359.0 154.9 L359.5 155.1 L360.0 155.1 L360.5 155.0 L361.0 154.9 L361.5 154.9 L362.0 154.9 L362.5 155.1 L363.0 155.0 L363.5 154.9 L364.0 154.8 L364.5 155.1 L365.0 154.9 L365.5 154.8 L366.0 154.6 L366.5 154.7 L367.0 154.9 L367.5 155.1 L368.0 155.1 L368.5 155.3 L369.0 155.4 L369.5 155.3 L370.0 155.1 L370.5 155.2 L371.0 155.3 L371.5 155.0 L372.0 155.1 L372.5 155.0 L373.0 155.0 L373.5 154.9 L374.0 154.8 L374.5 154.7 L375.0 154.6 L375.5 154.7 L376.0 154.9 L376.5 154.8 L377.0 155.0 L377.5 154.9 L378.0 154.9 L378.5 155.0 L379.0 155.1 L379.5 155.1 L380.0 154.9 L380.5 154.9 L381.0 154.9 L381.5 155.1 L382.0 154.9 L382.5 154.9 L383.0 155.1 L383.5 154.9 L384.0 154.9 L384.5 155.0 L385.0 155.1 L385.5 154.9 L386.0 154.8 L386.5 154.6 L387.0 154.9 L387.5 154.8 L388.0 154.9 L388.5 155.1 L389.0 155.0 L389.5 154.9 L390.0 155.1 L390.5 155.1 L391.0 155.0 L391.5 155.1 L392.0 155.0 L392.5 154.9 L393.0 154.7 L393.5 154.9 L394.0 155.1 L394.5 155.1 L395.0 155.3 L395.5 155.0 L396.0 154.9 L396.5 154.9 L397.0 155.1 L397.5 155.3 L398.0 155.2 L398.5 155.0 L399.0 155.0 L399.5 155.0 L400.0 155.2 L400.5 155.0 L401.0 155.1 L401.5 155.2 L402.0 155.3 L402.5 155.3 L403.0 155.3 L403.5 155.2 L404.0 155.1 L404.5 155.0 L405.0 155.1 L405.5 154.9 L406.0 154.8 L406.5 155.0 L407.0 154.9 L407.5 154.7 L408.0 154.6 L408.5 154.7 L409.0 154.7 L409.5 154.9 L410.0 155.1 L410.5 155.3 L411.0 155.1 L411.5 154.9 L412.0 154.8 L412.5 154.8 L413.0 154.9 L413.5 154.9 L414.0 154.8 L414.5 154.8 L415.0 154.9 L415.5 155.0 L416.0 155.1 L416.5 155.2 L417.0 155.2 L417.5 155.0 L418.0 155.2 L418.5 155.1 L419.0 155.1 L419.5 155.0 L420.0 155.1 L420.5 155.0 L421.0 154.9 L421.5 154.8 L422.0 154.7 L422.5 154.9 L423.0 155.0 L423.5 154.9 L424.0 154.9 L424.5 155.1 L425.0 155.1 L425.5 155.0 L426.0 155.1 L426.5 155.1 L427.0 155.3 L427.5 155.1 L428.0 155.1 L428.5 155.2 L429.0 155.3 L429.5 155.4 L430.0 155.1 L430.5 155.0 L431.0 154.9 L431.5 154.8 L432.0 155.0 L432.5 155.0 L433.0 155.2 L433.5 155.1 L434.0 155.2 L434.5 155.2 L435.0 155.0 L435.5 155.1 L436.0 155.3 L436.5 155.1 L437.0 155.1 L437.5 155.1 L438.0 155.0 L438.5 154.9 L439.0 154.8 L439.5 154.7 L440.0 154.7 L440.5 154.8 L441.0 154.9 L441.5 154.8 L442.0 154.7 L442.5 154.7 L443.0 154.8 L443.5 154.7 L444.0 154.7 L444.5 154.6 L445.0 154.8 L445.5 154.9 L446.0 154.7 L446.5 154.6 L447.0 154.7 L447.5 154.8 L448.0 154.9 L448.5 154.7 L449.0 154.7 L449.5 154.8 L450.0 154.8 L450.5 154.8 L451.0 154.7 L451.5 155.0 L452.0 154.9 L452.5 154.9 L453.0 154.9 L453.5 154.9 L454.0 155.0 L454.5 155.2 L455.0 155.1 L455.5 155.0 L456.0 155.1 L456.5 154.9 L457.0 154.8 L457.5 155.0 L458.0 154.9 L458.5 155.1 L459.0 155.0 L459.5 155.2 L460.0 155.1 L460.5 155.0 L461.0 154.8 L461.5 154.8 L462.0 154.9 L462.5 155.1 L463.0 154.9 L463.5 154.7 L464.0 154.0 L464.5 152.1 L465.0 147.4 L465.5 138.6 L466.0 125.2 L466.5 109.3 L467.0 95.6 L467.5 90.3 L468.0 95.8 L468.5 109.5 L469.0 125.4 L469.5 138.7 L470.0 147.7 L470.5 152.4 L471.0 154.3 L471.5 154.7 L472.0 155.1 L472.5 155.1 L473.0 155.2 L473.5 155.2 L474.0 155.3 L474.5 155.1 L475.0 155.2 L475.5 155.1 L476.0 155.0 L476.5 155.1 L477.0 155.2 L477.5 155.1 L478.0 154.9 L478.5 154.9 L479.0 154.9 L479.5 154.9 L480.0 154.8 L480.5 154.7 L481.0 154.9 L481.5 155.0 L482.0 154.9 L482.5 154.9 L483.0 155.0 L483.5 154.8 L484.0 155.0 L484.5 154.9 L485.0 154.9 L485.5 155.0 L486.0 155.0 L486.5 154.9 L487.0 154.9 L487.5 155.0 L488.0 154.9 L488.5 155.0 L489.0 155.0 L489.5 155.0 L490.0 154.8 L490.5 154.9 L491.0 154.9 L491.5 154.8 L492.0 155.0 L492.5 155.1 L493.0 155.0 L493.5 154.6 L494.0 154.2 L494.5 153.1 L495.0 151.3 L495.5 149.0 L496.0 146.2 L496.5 144.0 L497.0 143.2 L497.5 144.7 L498.0 147.0 L498.5 149.0 L499.0 151.1 L499.5 152.5 L500.0 153.4 L500.5 153.8 L501.0 154.1 L501.5 154.3 L502.0 154.6 L502.5 154.6 L503.0 154.8 L503.5 155.0 L504.0 155.1 L504.5 155.2 L505.0 155.1 L505.5 155.2 L506.0 155.2 L506.5 155.3 L507.0 155.4 L507.5 155.2 L508.0 155.3 L508.5 155.4 L509.0 155.1 L509.5 155.1 L510.0 155.1 L510.5 155.0 L511.0 155.1 L511.5 155.0 L512.0 155.1 L512.5 155.0 L513.0 155.0 L513.5 155.1 L514.0 155.0 L514.5 154.9 L515.0 154.9 L515.5 154.9 L516.0 154.7 L516.5 154.6 L517.0 154.5 L517.5 154.6 L518.0 154.1 L518.5 152.6 L519.0 148.7 L519.5 141.8 L520.0 130.1 L520.5 114.6 L521.0 98.0 L521.5 84.8 L522.0 79.9 L522.5 84.9 L523.0 98.1 L523.5 114.9 L524.0 130.2 L524.5 141.9 L525.0 149.0 L525.5 152.6 L526.0 154.3 L526.5 154.8 L527.0 155.2 L527.5 155.2 L528.0 155.1 L528.5 155.2 L529.0 155.1 L529.5 155.0 L530.0 155.1 L530.5 154.9 L531.0 155.0 L531.5 154.9 L532.0 155.0 L532.5 155.2 L533.0 155.2 L533.5 155.2 L534.0 155.1 L534.5 154.9 L535.0 154.7 L535.5 154.6 L536.0 154.8 L536.5 154.8 L537.0 154.8 L537.5 155.0 L538.0 154.9 L538.5 154.8 L539.0 154.9 L539.5 154.7 L540.0 154.6 L540.5 154.6 L541.0 154.5 L541.5 154.6 L542.0 154.6 L542.5 154.7 L543.0 154.8 L543.5 154.7 L544.0 154.8 L544.5 154.8 L545.0 154.7 L545.5 154.9 L546.0 154.6 L546.5 154.3 L547.0 153.6 L547.5 153.0 L548.0 152.2 L548.5 151.3 L549.0 150.5 L549.5 150.1 L550.0 150.4 L550.5 151.2 L551.0 152.0 L551.5 152.7 L552.0 153.3 L552.5 153.7 L553.0 154.2 L553.5 154.4 L554.0 154.4 L554.5 154.7 L555.0 154.5 L555.5 154.6 L556.0 154.6 L556.5 154.6 L557.0 154.5 L557.5 154.7 L558.0 154.5 L558.5 154.6 L559.0 154.9 L559.5 154.7 L560.0 154.7 L560.5 154.8 L561.0 154.8 L561.5 154.9 L562.0 155.0 L562.5 154.9 L563.0 154.8 L563.5 154.8 L564.0 154.7 L564.5 154.9 L565.0 155.0 L565.5 155.1 L566.0 154.9 L566.5 155.0 L567.0 155.1 L567.5 155.1 L568.0 155.2 L568.5 155.1 L569.0 155.0 L569.5 154.8 L570.0 154.8 L570.5 154.6 L571.0 154.6 L571.5 154.8 L572.0 154.9 L572.5 155.1 L573.0 155.1 L573.5 155.0 L574.0 155.0 L574.5 155.0 L575.0 155.1 L575.5 155.1 L576.0 154.9 L576.5 154.7 L577.0 154.3 L577.5 153.2 L578.0 152.2 L578.5 150.9 L579.0 150.4 L579.5 150.8 L580.0 151.8 L580.5 152.9 L581.0 153.6 L581.5 154.0 L582.0 154.4 L582.5 154.5 L583.0 154.4 L583.5 154.7 L584.0 154.8 L584.5 154.9 L585.0 155.0 L585.5 155.1 L586.0 155.1 L586.5 155.2 L587.0 155.2 L587.5 155.3 L588.0 155.2 L588.5 155.3 L589.0 155.2 L589.5 155.1 L590.0 155.0 L590.5 155.0 L591.0 154.9 L591.5 155.0 L592.0 154.9 L592.5 154.7 L593.0 154.6 L593.5 154.9 L594.0 154.8 L594.5 154.7 L595.0 154.6 L595.5 154.5 L596.0 154.7 L596.5 154.8 L597.0 154.9 L597.5 155.0 L598.0 154.8 L598.5 154.9 L599.0 154.9 L599.5 155.0 L600.0 155.1 L600.5 155.2 L601.0 154.7 L601.5 153.9 L602.0 151.8 L602.5 147.9 L603.0 142.0 L603.5 136.7 L604.0 134.4 L604.5 136.7 L605.0 140.9 L605.5 145.1 L606.0 148.2 L606.5 150.3 L607.0 151.4 L607.5 151.9 L608.0 152.3 L608.5 152.5 L609.0 153.0 L609.5 153.2 L610.0 153.4 L610.5 153.6 L611.0 153.6 L611.5 153.7 L612.0 153.9 L612.5 154.1 L613.0 154.2 L613.5 154.3 L614.0 154.6 L614.5 154.6 L615.0 154.8 L615.5 154.9 L616.0 154.7 L616.5 154.7 L617.0 154.7 L617.5 154.9 L618.0 154.8 L618.5 155.0 L619.0 155.0 L619.5 154.9 L620.0 155.0 L620.5 154.9 L621.0 155.0 L621.5 154.9 L622.0 154.7 L622.5 154.7 L623.0 154.8 L623.5 155.0 L624.0 154.8 L624.5 154.9 L625.0 154.9 L625.5 155.0 L626.0 154.9 L626.5 154.9 L627.0 154.9 L627.5 155.0 L628.0 154.8 L628.5 154.9 L629.0 154.6 L629.5 154.1 L630.0 153.5 L630.5 152.6 L631.0 151.3 L631.5 150.2 L632.0 148.9 L632.5 148.2 L633.0 148.0 L633.5 148.8 L634.0 149.8 L634.5 150.7 L635.0 151.6 L635.5 152.5 L636.0 153.3 L636.5 153.7 L637.0 154.2 L637.5 154.2 L638.0 154.3 L638.5 154.4 L639.0 154.6 L639.5 154.7 L640.0 154.7 L640.5 154.9 L641.0 154.8 L641.5 154.8 L642.0 154.9 L642.5 155.0 L643.0 155.1 L643.5 155.1 L644.0 155.0 L644.5 155.0 L645.0 154.8 L645.5 155.0 L646.0 155.1 L646.5 155.1 L647.0 155.0 L647.5 155.0 L648.0 155.1 L648.5 155.1 L649.0 154.9 L649.5 154.9 L650.0 155.1 L650.5 155.0 L651.0 154.9 L651.5 154.8 L652.0 154.9 L652.5 155.1 L653.0 154.9 L653.5 154.8 L654.0 154.7 L654.5 154.7 L655.0 154.8 L655.5 154.7 L656.0 154.7 L656.5 154.6 L657.0 154.7 L657.5 154.6 L658.0 154.0 L658.5 153.6 L659.0 152.6 L659.5 151.6 L660.0 150.9 L660.5 150.2 L661.0 150.0 L661.5 150.5 L662.0 151.1 L662.5 152.0 L663.0 152.6 L663.5 153.1 L664.0 153.6 L664.5 153.8 L665.0 154.1 L665.5 154.4 L666.0 154.6 L666.5 154.7 L667.0 154.8 L667.5 154.8 L668.0 154.7 L668.5 154.8 L669.0 154.8 L669.5 154.9 L670.0 155.1 L670.5 155.1 L671.0 155.1 L671.5 155.1 L672.0 155.1 L672.5 155.0 L673.0 155.1 L673.5 155.2 L674.0 155.3 L674.5 155.3 L675.0 155.4 L675.5 155.4 L676.0 155.3 L676.5 155.3 L677.0 155.1 L677.5 155.2 L678.0 155.0 L678.5 154.9 L679.0 155.1 L679.5 155.1 L680.0 155.2 L680.5 155.0 L681.0 155.0 L681.5 155.0 L682.0 155.0 L682.5 155.0 L683.0 155.1 L683.5 155.2 L684.0 155.0 L684.5 155.1 L685.0 155.2 L685.5 155.0 L686.0 154.7 L686.5 154.2 L687.0 152.6 L687.5 150.2 L688.0 147.0 L688.5 144.5 L689.0 143.6 L689.5 145.4 L690.0 147.7 L690.5 150.1 L691.0 152.0 L691.5 153.2 L692.0 153.9 L692.5 154.3 L693.0 154.6 L693.5 154.8 L694.0 154.8 L694.5 155.0 L695.0 154.9 L695.5 155.0 L696.0 155.0 L696.5 155.1 L697.0 154.9 L697.5 155.1 L698.0 155.0 L698.5 154.9 L699.0 154.8 L699.5 154.8 L700.0 154.7 L700.5 154.7 L701.0 154.7 L701.5 154.9 L702.0 154.8 L702.5 154.8 L703.0 154.7 L703.5 154.9 L704.0 155.1 L704.5 155.1 L705.0 154.9 L705.5 155.1 L706.0 155.0 L706.5 154.9 L707.0 154.8 L707.5 154.9 L708.0 155.0 L708.5 155.0 L709.0 154.6 L709.5 153.5 L710.0 150.7 L710.5 145.1 L711.0 134.9 L711.5 120.5 L712.0 104.4 L712.5 91.2 L713.0 86.0 L713.5 91.0 L714.0 104.3 L714.5 120.4 L715.0 134.9 L715.5 144.9 L716.0 150.8 L716.5 153.4 L717.0 154.5 L717.5 154.7 L718.0 154.8 L718.5 154.8 L719.0 154.6 L719.5 154.8 L720.0 154.7 L720.5 154.7 L721.0 154.7 L721.5 154.7 L722.0 154.8 L722.5 154.9 L723.0 155.0 L723.5 154.9 L724.0 155.1 L724.5 155.2 L725.0 155.0 L725.5 155.1 L726.0 155.3 L726.5 155.3 L727.0 155.1 L727.5 155.2 L728.0 155.2 L728.5 155.0 L729.0 154.8 L729.5 155.0 L730.0 155.1 L730.5 155.0 L731.0 154.8 L731.5 154.7 L732.0 154.7 L732.5 154.8 L733.0 154.8 L733.5 154.7 L734.0 154.9 L734.5 155.1 L735.0 154.9 L735.5 155.0 L736.0 154.9 L736.5 154.6 L737.0 153.4 L737.5 150.7 L738.0 145.1 L738.5 135.7 L739.0 122.3 L739.5 107.3 L740.0 94.6 L740.5 88.5 L741.0 96.8 L741.5 109.3 L742.0 122.0 L742.5 133.1 L743.0 141.4 L743.5 146.9 L744.0 150.3 L744.5 152.0 L745.0 153.0 L745.5 153.5 L746.0 153.9 L746.5 154.2 L747.0 154.4 L747.5 154.7 L748.0 154.6 L748.5 154.8 L749.0 154.9 L749.5 154.9 L750.0 155.0 L750.5 155.1 L751.0 155.1 L751.5 155.0 L752.0 155.2 L752.5 155.0 L753.0 155.1 L753.5 155.1 L754.0 154.9 L754.5 155.0 L755.0 155.0 L755.5 155.2 L756.0 155.1 L756.5 155.3 L757.0 155.2 L757.5 155.2 L758.0 155.3 L758.5 155.0 L759.0 155.1 L759.5 155.1 L760.0 155.1 L760.5 155.2 L761.0 155.1 L761.5 155.1 L762.0 155.1 L762.5 155.2 L763.0 155.0 L763.5 155.0 L764.0 155.0 L764.5 155.0 L765.0 155.1 L765.5 154.9 L766.0 154.9 L766.5 154.6 L767.0 154.0 L767.5 152.8 L768.0 151.1 L768.5 149.2 L769.0 147.1 L769.5 145.5 L770.0 144.7 L770.5 145.9 L771.0 147.5 L771.5 149.4 L772.0 151.1 L772.5 152.4 L773.0 153.1 L773.5 153.8 L774.0 154.3 L774.5 154.5 L775.0 154.5 L775.5 154.5 L776.0 154.4 L776.5 154.4 L777.0 154.7 L777.5 154.8 L778.0 154.9 L778.5 155.0 L779.0 155.2 L779.5 155.2 L780.0 155.2 L780.5 155.2 L781.0 155.2 L781.5 155.2 L782.0 155.3 L782.5 155.1 L783.0 155.1 L783.5 155.1 L784.0 155.2 L784.5 155.0 L785.0 154.9 L785.5 154.7 L786.0 154.9 L786.5 155.1 L787.0 155.1 L787.5 155.0 L788.0 155.2 L788.5 155.2 L789.0 155.2 L789.5 155.1 L790.0 155.0 L790.5 155.0 L791.0 154.9 L791.5 154.9 L792.0 155.0 L792.5 155.1 L793.0 154.9 L793.5 154.9 L794.0 154.6 L794.5 154.2 L795.0 153.7 L795.5 152.5 L796.0 150.5 L796.5 147.7 L797.0 144.4 L797.5 142.0 L798.0 141.1 L798.5 143.2 L799.0 145.7 L799.5 148.2 L800.0 150.3 L800.5 151.8 L801.0 153.0 L801.5 153.6 L802.0 153.9 L802.5 154.0 L803.0 154.0 L803.5 154.3 L804.0 154.3 L804.5 154.6 L805.0 154.5 L805.5 154.8 L806.0 154.7 L806.5 154.6 L807.0 154.7 L807.5 154.7 L808.0 154.8 L808.5 154.8 L809.0 154.6 L809.5 154.8 L810.0 154.9 L810.5 155.1 L811.0 155.2 L811.5 155.0 L812.0 155.0 L812.5 155.1 L813.0 155.1 L813.5 155.2 L814.0 155.1 L814.5 155.2 L815.0 155.3 L815.5 155.0 L816.0 154.8 L816.5 154.9 L817.0 155.1 L817.5 154.9 L818.0 154.8 L818.5 155.0 L819.0 154.8 L819.5 155.0 L820.0 155.0 L820.5 154.8 L821.0 154.8 L821.5 154.8 L822.0 154.6 L822.5 154.4 L823.0 153.7 L823.5 153.1 L824.0 152.1 L824.5 151.5 L825.0 151.3 L825.5 151.6 L826.0 152.2 L826.5 153.0 L827.0 153.8 L827.5 154.3 L828.0 154.5 L828.5 154.6 L829.0 154.5 L829.5 154.7 L830.0 154.9 L830.5 155.0 L831.0 154.9 L831.5 155.0 L832.0 155.1 L832.5 155.2 L833.0 155.2 L833.5 155.1 L834.0 155.0 L834.5 155.2 L835.0 155.1 L835.5 155.1 L836.0 155.2 L836.5 155.3 L837.0 155.3 L837.5 155.2 L838.0 155.0 L838.5 154.9 L839.0 154.9 L839.5 154.9 L840.0 155.1 L840.5 155.2 L841.0 155.0 L841.5 155.1 L842.0 155.2 L842.5 155.3 L843.0 155.3 L843.5 155.1 L844.0 155.2 L844.5 155.3 L845.0 155.3 L845.5 155.4 L846.0 155.3 L846.5 155.1 L847.0 155.0 L847.5 154.5 L848.0 150.1 L848.5 137.9 L849.0 119.5 L849.5 102.6 L850.0 93.1 L850.5 89.8 L851.0 89.1 L851.5 89.0 L852.0 89.2 L852.5 91.9 L853.0 100.1 L853.5 115.6 L854.0 134.3 L854.5 148.4 L855.0 154.0 L855.5 154.9 L856.0 155.0 L856.5 155.2 L857.0 155.3 L857.5 155.2 L858.0 155.2 L858.5 155.2 L859.0 155.0 L859.5 154.9 L860.0 154.8 L860.5 154.9 L861.0 154.9 L861.5 154.9 L862.0 154.9 L862.5 154.9 L863.0 154.8 L863.5 154.7 L864.0 154.9 L864.5 154.9 L865.0 154.8 L865.5 154.9 L866.0 155.0 L866.5 154.9 L867.0 154.9 L867.5 154.9 L868.0 154.9 L868.5 154.7 L869.0 154.6 L869.5 154.9 L870.0 155.0 L870.5 155.0 L871.0 155.1 L871.5 155.0 L872.0 155.1 L872.5 155.0 L873.0 155.2 L873.5 155.2 L874.0 155.3 L874.5 155.4 L875.0 155.2 L875.5 154.9 L876.0 154.8 L876.5 154.6 L877.0 154.3 L877.5 154.0 L878.0 153.9 L878.5 153.9 L879.0 153.6 L879.5 153.4 L880.0 153.2 L880.5 152.7 L881.0 152.5 L881.5 152.3 L882.0 152.1 L882.5 152.4 L883.0 152.6 L883.5 152.8 L884.0 153.2 L884.5 153.6 L885.0 153.9 L885.5 154.1 L886.0 154.2 L886.5 154.2 L887.0 154.6 L887.5 154.8 L888.0 154.8 L888.5 154.6 L889.0 154.6 L889.5 154.6 L890.0 154.8 L890.5 155.0 L891.0 155.1 L891.5 154.9 L892.0 155.0 L892.5 155.1 L893.0 155.1 L893.5 155.3 L894.0 155.0 L894.5 154.9 L895.0 155.0 L895.5 155.2 L896.0 155.2 L896.5 155.1 L897.0 155.1 L897.5 155.2 L898.0 155.0 L898.5 154.8 L899.0 154.6 L899.5 154.4 L900.0 154.4 L900.5 154.2 L901.0 154.1 L901.5 153.9 L902.0 153.9 L902.5 153.7 L903.0 153.8 L903.5 153.6 L904.0 153.4 L904.5 153.5 L905.0 153.4 L905.5 153.5 L906.0 153.5 L906.5 153.5 L907.0 153.3 L907.5 153.1 L908.0 152.9 L908.5 153.0 L909.0 153.0 L909.5 152.9 L910.0 152.7" fill="none" stroke="#e2733a" stroke-width="2.2" stroke-linejoin="round" stroke-linecap="round"/><path d="M2.0 163.1 L4.0 163.1 L6.0 163.0 L8.0 162.8 L10.0 162.9 L12.0 163.1 L14.0 163.0 L16.0 163.0 L18.0 162.9 L20.0 162.9 L22.0 163.1 L24.0 163.3 L26.0 163.5 L28.0 163.3 L30.0 163.2 L32.0 163.1 L34.0 163.3 L36.0 163.5 L38.0 163.4 L40.0 163.2 L42.0 163.1 L44.0 162.9 L46.0 162.9 L48.0 162.7 L50.0 162.7 L52.0 162.8 L54.0 162.7 L56.0 162.6 L58.0 162.8 L60.0 162.7 L62.0 162.6 L64.0 162.6 L66.0 162.6 L68.0 162.7 L70.0 162.8 L72.0 162.6 L74.0 162.7 L76.0 162.5 L78.0 162.5 L80.0 162.8 L82.0 162.6 L84.0 162.6 L86.0 162.6 L88.0 162.8 L90.0 162.7 L92.0 162.8 L94.0 162.8 L96.0 162.9 L98.0 163.0 L100.0 163.2 L102.0 163.3 L104.0 163.4 L106.0 163.5 L108.0 163.5 L110.0 163.5 L112.0 163.2 L114.0 163.1 L116.0 163.0 L118.0 163.1 L120.0 163.0 L122.0 162.8 L124.0 162.9 L126.0 163.0 L128.0 162.8 L130.0 162.9 L132.0 162.8 L134.0 162.9 L136.0 162.7 L138.0 162.6 L140.0 162.8 L142.0 162.9 L144.0 162.8 L146.0 163.0 L148.0 163.0 L150.0 163.0 L152.0 163.2 L154.0 163.2 L156.0 163.1 L158.0 163.3 L160.0 163.5 L162.0 163.6 L164.0 163.6 L166.0 163.7 L168.0 163.6 L170.0 163.5 L172.0 163.3 L174.0 163.3 L176.0 163.1 L178.0 163.3 L180.0 163.3 L182.0 163.5 L184.0 163.2 L186.0 163.1 L188.0 163.0 L190.0 163.2 L192.0 163.1 L194.0 163.1 L196.0 163.0 L198.0 163.1 L200.0 163.2 L202.0 163.2 L204.0 163.2 L206.0 163.0 L208.0 162.9 L210.0 162.9 L212.0 162.8 L214.0 162.9 L216.0 162.9 L218.0 163.0 L220.0 163.1 L222.0 163.2 L224.0 163.1 L226.0 163.0 L228.0 163.1 L230.0 163.1 L232.0 163.1 L234.0 163.0 L236.0 163.0 L238.0 163.2 L240.0 163.3 L242.0 163.1 L244.0 163.1 L246.0 163.1 L248.0 163.2 L250.0 163.1 L252.0 163.2 L254.0 163.1 L256.0 163.2 L258.0 163.3 L260.0 163.3 L262.0 163.4 L264.0 163.4 L266.0 163.5 L268.0 163.3 L270.0 163.1 L272.0 163.1 L274.0 163.3 L276.0 163.3 L278.0 163.4 L280.0 163.3 L282.0 163.3 L284.0 163.2 L286.0 163.2 L288.0 163.2 L290.0 163.3 L292.0 163.3 L294.0 163.2 L296.0 163.2 L298.0 163.0 L300.0 163.0 L302.0 163.1 L304.0 163.0 L306.0 163.2 L308.0 163.0 L310.0 163.0 L312.0 163.2 L314.0 163.4 L316.0 163.4 L318.0 163.3 L320.0 163.3 L322.0 163.5 L324.0 163.5 L326.0 163.4 L328.0 163.4 L330.0 163.6 L332.0 163.5 L334.0 163.5 L336.0 163.4 L338.0 163.5 L340.0 163.4 L342.0 163.5 L344.0 163.3 L346.0 163.4 L348.0 163.6 L350.0 163.5 L352.0 163.4 L354.0 163.4 L356.0 163.2 L358.0 163.3 L360.0 163.5 L362.0 163.3 L364.0 163.4 L366.0 163.4 L368.0 163.3 L370.0 163.4 L372.0 163.2 L374.0 163.2 L376.0 163.3 L378.0 163.5 L380.0 163.4 L382.0 163.3 L384.0 163.1 L386.0 163.0 L388.0 163.1 L390.0 163.3 L392.0 163.0 L394.0 163.0 L396.0 162.9 L398.0 162.9 L400.0 163.1 L402.0 163.0 L404.0 163.0 L406.0 163.2 L408.0 163.4 L410.0 163.4 L412.0 163.2 L414.0 163.3 L416.0 163.5 L418.0 163.4 L420.0 163.6 L422.0 163.7 L424.0 163.6 L426.0 163.5 L428.0 163.6 L430.0 163.7 L432.0 163.5 L434.0 163.3 L436.0 163.2 L438.0 163.1 L440.0 163.0 L442.0 162.9 L444.0 163.0 L446.0 162.9 L448.0 162.9 L450.0 162.7 L452.0 162.7 L454.0 162.8 L456.0 162.8 L458.0 162.7 L460.0 162.9 L462.0 162.7 L464.0 162.9 L466.0 163.1 L468.0 163.3 L470.0 163.2 L472.0 163.0 L474.0 162.9 L476.0 163.0 L478.0 162.9 L480.0 162.8 L482.0 162.7 L484.0 162.8 L486.0 162.9 L488.0 163.0 L490.0 163.0 L492.0 162.8 L494.0 163.0 L496.0 163.1 L498.0 163.1 L500.0 163.1 L502.0 163.0 L504.0 162.9 L506.0 163.0 L508.0 163.0 L510.0 163.1 L512.0 163.3 L514.0 163.2 L516.0 163.2 L518.0 163.2 L520.0 163.2 L522.0 163.1 L524.0 163.1 L526.0 163.0 L528.0 163.2 L530.0 163.3 L532.0 163.1 L534.0 162.9 L536.0 162.9 L538.0 162.9 L540.0 162.8 L542.0 162.8 L544.0 162.8 L546.0 162.9 L548.0 162.7 L550.0 162.9 L552.0 162.7 L554.0 162.8 L556.0 162.7 L558.0 162.9 L560.0 163.1 L562.0 162.9 L564.0 162.9 L566.0 163.1 L568.0 162.9 L570.0 162.9 L572.0 163.0 L574.0 163.2 L576.0 163.2 L578.0 163.3 L580.0 163.3 L582.0 163.1 L584.0 162.9 L586.0 163.1 L588.0 163.1 L590.0 163.2 L592.0 163.1 L594.0 163.0 L596.0 162.9 L598.0 162.8 L600.0 162.9 L602.0 162.8 L604.0 162.8 L606.0 162.8 L608.0 163.0 L610.0 163.1 L612.0 163.2 L614.0 163.3 L616.0 163.4 L618.0 163.3 L620.0 163.5 L622.0 163.3 L624.0 163.2 L626.0 163.1 L628.0 163.2 L630.0 163.0 L632.0 163.0 L634.0 162.9 L636.0 162.7 L638.0 162.9 L640.0 163.0 L642.0 163.1 L644.0 163.1 L646.0 163.0 L648.0 162.8 L650.0 162.9 L652.0 163.1 L654.0 163.0 L656.0 162.9 L658.0 163.0 L660.0 162.9 L662.0 163.0 L664.0 163.2 L666.0 163.3 L668.0 163.4 L670.0 163.3 L672.0 163.2 L674.0 163.2 L676.0 163.4 L678.0 163.1 L680.0 163.2 L682.0 163.3 L684.0 163.5 L686.0 163.4 L688.0 163.3 L690.0 163.1 L692.0 163.0 L694.0 163.2 L696.0 163.0 L698.0 162.9 L700.0 162.7 L702.0 162.9 L704.0 162.9 L706.0 163.0 L708.0 163.0 L710.0 163.0 L712.0 163.2 L714.0 163.0 L716.0 163.0 L718.0 163.0 L720.0 162.8 L722.0 162.8 L724.0 163.0 L726.0 163.3 L728.0 163.3 L730.0 163.1 L732.0 163.2 L734.0 163.2 L736.0 163.2 L738.0 163.1 L740.0 163.3 L742.0 163.1 L744.0 163.1 L746.0 163.2 L748.0 163.2 L750.0 163.2 L752.0 163.2 L754.0 163.1 L756.0 163.1 L758.0 163.3 L760.0 163.1 L762.0 163.0 L764.0 163.0 L766.0 163.1 L768.0 163.1 L770.0 162.9 L772.0 162.8 L774.0 163.0 L776.0 163.1 L778.0 162.9 L780.0 163.1 L782.0 163.2 L784.0 163.1 L786.0 163.1 L788.0 163.0 L790.0 162.8 L792.0 162.8 L794.0 162.9 L796.0 162.8 L798.0 162.8 L800.0 162.9 L802.0 163.0 L804.0 163.1 L806.0 163.3 L808.0 163.4 L810.0 163.5 L812.0 163.4 L814.0 163.6 L816.0 163.3 L818.0 163.2 L820.0 163.3 L822.0 163.5 L824.0 163.3 L826.0 163.3 L828.0 163.3 L830.0 163.1 L832.0 163.2 L834.0 163.3 L836.0 163.3 L838.0 163.2 L840.0 163.2 L842.0 163.3 L844.0 163.1 L846.0 163.0 L848.0 163.1 L850.0 163.0 L852.0 163.1 L854.0 163.1 L856.0 162.9 L858.0 162.9 L860.0 163.0 L862.0 162.9 L864.0 163.1 L866.0 163.0 L868.0 162.9 L870.0 163.0 L872.0 162.9 L874.0 163.0 L876.0 162.8 L878.0 163.1 L880.0 162.9 L882.0 162.9 L884.0 162.9 L886.0 163.0 L888.0 163.2 L890.0 163.0 L892.0 163.1 L894.0 163.2 L896.0 163.3 L898.0 163.2 L900.0 163.3 L902.0 163.4 L904.0 163.5 L906.0 163.5 L908.0 163.4 L910.0 163.3" fill="none" stroke="#3c93e0" stroke-width="2.2" stroke-linejoin="round" stroke-linecap="round"/></svg></div>
    </div>
  <div class="mbox" style="top:288px;height:185px">
      <div class="mleft"><div class="mh">IOPS</div><div class="ml" style="top:60px;color:#3a8dde">R</div><div class="mv" style="top:60px;right:45px">15.63 K</div><div class="ml" style="top:101px;color:#e8702f">W</div><div class="mv" style="top:101px;right:45px">4.46 K</div><div class="ml" style="top:142px;color:#a9a9a9">O</div><div class="mv" style="top:142px;right:45px">1.78 K</div></div>
      <div class="mchart"><svg width="911" height="183" viewBox="0 0 911 183"><text class="ax" x="8" y="21">24 K</text><text class="ax" x="103" y="179.3" text-anchor="middle">10:40</text><text class="ax" x="285" y="179.3" text-anchor="middle">10:41</text><text class="ax" x="467" y="179.3" text-anchor="middle">10:42</text><text class="ax" x="649" y="179.3" text-anchor="middle">10:43</text><text class="ax" x="831" y="179.3" text-anchor="middle">10:44</text><path d="M2.0 137.3 L2.4 138.2 L2.9 139.6 L3.5 141.0 L4.0 142.4 L4.5 144.0 L5.0 145.1 L5.5 145.7 L6.0 145.9 L6.5 146.0 L7.0 145.9 L7.5 145.7 L8.0 145.6 L8.5 145.9 L9.0 146.3 L9.5 146.6 L10.0 146.8 L10.5 146.8 L11.0 146.6 L11.5 145.8 L12.0 144.6 L12.5 143.9 L13.0 143.9 L13.5 144.3 L14.0 145.0 L14.5 146.2 L15.0 147.8 L15.5 149.1 L16.0 149.8 L16.5 150.2 L17.0 149.9 L17.5 148.8 L18.0 147.0 L18.5 145.2 L19.0 143.4 L19.5 141.6 L20.0 140.6 L20.5 140.9 L21.0 141.9 L21.5 142.9 L22.0 143.6 L22.5 144.3 L23.0 145.0 L23.5 145.7 L24.0 146.5 L24.5 146.8 L25.0 146.4 L25.5 145.6 L26.0 144.9 L26.5 144.3 L27.0 143.9 L27.5 143.6 L28.0 143.6 L28.5 143.8 L29.0 143.6 L29.5 142.5 L30.0 140.9 L30.5 139.6 L31.0 139.0 L31.5 138.6 L32.0 138.8 L32.5 139.8 L33.0 141.3 L33.5 142.6 L34.0 143.6 L34.5 144.3 L35.0 144.6 L35.5 144.5 L36.0 144.1 L36.5 143.0 L37.0 141.1 L37.5 138.6 L38.0 136.7 L38.5 135.8 L39.0 135.6 L39.5 135.8 L40.0 136.6 L40.5 137.8 L41.0 138.9 L41.5 139.8 L42.0 140.6 L42.5 141.0 L43.0 140.4 L43.5 139.3 L44.0 138.4 L44.5 137.9 L45.0 137.5 L45.5 137.1 L46.0 136.8 L46.5 136.5 L47.0 135.9 L47.5 135.1 L48.0 134.0 L48.5 133.1 L49.0 132.1 L49.5 131.2 L50.0 130.8 L50.5 130.9 L51.0 131.5 L51.5 132.1 L52.0 132.9 L52.5 133.7 L53.0 134.2 L53.5 134.2 L54.0 133.8 L54.5 133.0 L55.0 131.5 L55.5 129.7 L56.0 128.2 L56.5 127.4 L57.0 126.9 L57.5 127.1 L58.0 128.4 L58.5 130.2 L59.0 132.0 L59.5 133.4 L60.0 134.7 L60.5 135.5 L61.0 135.5 L61.5 135.0 L62.0 134.7 L62.5 134.7 L63.0 134.8 L63.5 135.0 L64.0 135.2 L64.5 135.5 L65.0 135.7 L65.5 135.6 L66.0 135.3 L66.5 134.9 L67.0 134.1 L67.5 133.2 L68.0 132.8 L68.5 133.2 L69.0 134.1 L69.5 135.4 L70.0 137.1 L70.5 139.1 L71.0 140.5 L71.5 141.0 L72.0 140.9 L72.5 140.5 L73.0 139.5 L73.5 138.0 L74.0 136.8 L74.5 135.8 L75.0 135.0 L75.5 134.6 L76.0 134.7 L76.5 135.1 L77.0 135.9 L77.5 137.5 L78.0 139.4 L78.5 140.7 L79.0 141.1 L79.5 140.9 L80.0 140.5 L80.5 140.1 L81.0 139.5 L81.5 139.2 L82.0 139.5 L82.5 140.0 L83.0 140.4 L83.5 140.4 L84.0 140.1 L84.5 139.7 L85.0 139.2 L85.5 138.5 L86.0 138.0 L86.5 137.8 L87.0 137.8 L87.5 138.4 L88.0 139.9 L88.5 142.0 L89.0 143.8 L89.5 145.1 L90.0 146.1 L90.5 146.4 L91.0 145.6 L91.5 144.1 L92.0 142.6 L92.5 141.4 L93.0 140.2 L93.5 139.5 L94.0 139.5 L94.5 139.8 L95.0 140.5 L95.5 141.7 L96.0 143.2 L96.5 144.3 L97.0 144.5 L97.5 144.2 L98.0 144.0 L98.5 144.1 L99.0 144.2 L99.5 144.3 L100.0 144.6 L100.5 144.9 L101.0 144.9 L101.5 144.7 L102.0 144.3 L102.5 143.8 L103.0 142.9 L103.5 141.9 L104.0 141.1 L104.5 140.4 L105.0 139.9 L105.5 140.1 L106.0 141.5 L106.5 143.8 L107.0 145.7 L107.5 147.2 L108.0 148.4 L108.5 148.9 L109.0 148.4 L109.5 147.3 L110.0 145.9 L110.5 144.1 L111.0 142.1 L111.5 140.8 L112.0 140.5 L112.5 141.0 L113.0 141.6 L113.5 142.3 L114.0 143.1 L114.5 144.0 L115.0 144.8 L115.5 145.6 L116.0 146.2 L116.5 146.1 L117.0 145.8 L117.5 145.5 L118.0 145.4 L118.5 145.2 L119.0 145.1 L119.5 144.9 L120.0 144.6 L120.5 144.2 L121.0 143.6 L121.5 142.8 L122.0 142.1 L122.5 141.5 L123.0 141.0 L123.5 141.0 L124.0 142.1 L124.5 143.7 L125.0 145.2 L125.5 146.6 L126.0 148.0 L126.5 148.7 L127.0 148.4 L127.5 147.3 L128.0 146.2 L128.5 145.1 L129.0 144.0 L129.5 142.9 L130.0 141.9 L130.5 141.0 L131.0 140.8 L131.5 141.9 L132.0 143.7 L132.5 145.1 L133.0 145.5 L133.5 145.6 L134.0 145.6 L134.5 145.6 L135.0 145.5 L135.5 145.5 L136.0 145.9 L136.5 146.4 L137.0 146.7 L137.5 146.6 L138.0 146.2 L138.5 145.6 L139.0 144.8 L139.5 143.8 L140.0 143.0 L140.5 142.2 L141.0 141.5 L141.5 141.4 L142.0 142.0 L142.5 143.1 L143.0 144.5 L143.5 146.2 L144.0 148.1 L144.5 149.3 L145.0 149.7 L145.5 149.4 L146.0 148.7 L146.5 147.5 L147.0 145.9 L147.5 144.5 L148.0 143.2 L148.5 142.1 L149.0 141.6 L149.5 142.3 L150.0 143.7 L150.5 144.8 L151.0 145.2 L151.5 145.2 L152.0 145.3 L152.5 145.3 L153.0 145.3 L153.5 145.3 L154.0 145.6 L154.5 145.9 L155.0 146.1 L155.5 146.3 L156.0 146.3 L156.5 146.2 L157.0 145.9 L157.5 145.5 L158.0 144.8 L158.5 143.7 L159.0 142.4 L159.5 141.7 L160.0 141.6 L160.5 142.1 L161.0 143.0 L161.5 144.7 L162.0 146.9 L162.5 148.5 L163.0 149.3 L163.5 149.5 L164.0 149.1 L164.5 147.9 L165.0 146.1 L165.5 144.5 L166.0 143.2 L166.5 142.0 L167.0 141.5 L167.5 141.9 L168.0 142.9 L168.5 144.0 L169.0 144.9 L169.5 145.8 L170.0 146.4 L170.5 146.2 L171.0 145.6 L171.5 145.3 L172.0 145.5 L172.5 146.1 L173.0 146.6 L173.5 147.1 L174.0 147.6 L174.5 147.7 L175.0 147.2 L175.5 146.3 L176.0 145.3 L176.5 144.0 L177.0 142.7 L177.5 141.7 L178.0 141.0 L178.5 140.7 L179.0 141.0 L179.5 142.4 L180.0 144.5 L180.5 146.2 L181.0 147.3 L181.5 148.2 L182.0 148.4 L182.5 147.7 L183.0 146.4 L183.5 144.9 L184.0 143.1 L184.5 141.1 L185.0 139.8 L185.5 140.0 L186.0 141.0 L186.5 141.9 L187.0 142.5 L187.5 143.0 L188.0 143.3 L188.5 143.4 L189.0 143.4 L189.5 143.4 L190.0 143.5 L190.5 143.7 L191.0 143.9 L191.5 144.1 L192.0 144.3 L192.5 144.3 L193.0 144.1 L193.5 143.7 L194.0 143.1 L194.5 142.0 L195.0 140.8 L195.5 139.6 L196.0 138.5 L196.5 137.4 L197.0 137.2 L197.5 138.4 L198.0 140.3 L198.5 142.1 L199.0 143.5 L199.5 144.6 L200.0 145.3 L200.5 145.2 L201.0 144.7 L201.5 143.8 L202.0 142.4 L202.5 140.6 L203.0 139.2 L203.5 138.2 L204.0 137.6 L204.5 137.4 L205.0 138.0 L205.5 139.1 L206.0 139.9 L206.5 140.0 L207.0 139.9 L207.5 139.9 L208.0 139.9 L208.5 140.0 L209.0 140.2 L209.5 140.7 L210.0 141.4 L210.5 141.8 L211.0 142.1 L211.5 142.1 L212.0 141.6 L212.5 140.4 L213.0 138.6 L213.5 137.1 L214.0 135.9 L214.5 134.9 L215.0 134.4 L215.5 134.9 L216.0 136.0 L216.5 137.4 L217.0 139.1 L217.5 141.0 L218.0 142.4 L218.5 142.8 L219.0 142.6 L219.5 141.8 L220.0 140.0 L220.5 137.5 L221.0 135.7 L221.5 135.1 L222.0 135.1 L222.5 135.3 L223.0 135.3 L223.5 135.4 L224.0 135.7 L224.5 136.1 L225.0 136.6 L225.5 136.9 L226.0 136.9 L226.5 136.8 L227.0 136.9 L227.5 137.6 L228.0 138.4 L228.5 139.0 L229.0 139.3 L229.5 139.3 L230.0 139.0 L230.5 138.3 L231.0 137.2 L231.5 136.1 L232.0 135.1 L232.5 134.1 L233.0 133.6 L233.5 133.5 L234.0 134.0 L234.5 134.9 L235.0 136.9 L235.5 139.3 L236.0 141.1 L236.5 141.5 L237.0 141.2 L237.5 140.6 L238.0 139.6 L238.5 138.4 L239.0 137.2 L239.5 136.1 L240.0 135.1 L240.5 134.5 L241.0 134.7 L241.5 135.3 L242.0 136.0 L242.5 136.7 L243.0 137.5 L243.5 138.1 L244.0 138.2 L244.5 138.0 L245.0 138.0 L245.5 138.3 L246.0 138.7 L246.5 139.1 L247.0 139.6 L247.5 140.1 L248.0 140.3 L248.5 139.9 L249.0 139.2 L249.5 138.1 L250.0 136.6 L250.5 134.8 L251.0 133.7 L251.5 133.4 L252.0 133.7 L252.5 134.6 L253.0 136.3 L253.5 138.6 L254.0 140.4 L254.5 141.6 L255.0 142.3 L255.5 142.3 L256.0 141.5 L256.5 140.0 L257.0 138.6 L257.5 137.6 L258.0 136.7 L258.5 136.1 L259.0 136.0 L259.5 136.2 L260.0 136.5 L260.5 137.2 L261.0 138.0 L261.5 138.5 L262.0 138.3 L262.5 137.8 L263.0 137.5 L263.5 137.9 L264.0 138.6 L264.5 139.3 L265.0 140.0 L265.5 140.8 L266.0 141.1 L266.5 141.0 L267.0 140.5 L267.5 139.6 L268.0 138.0 L268.5 135.9 L269.0 134.3 L269.5 133.5 L270.0 133.2 L270.5 133.7 L271.0 135.2 L271.5 137.5 L272.0 139.3 L272.5 140.3 L273.0 140.8 L273.5 141.0 L274.0 140.9 L274.5 140.5 L275.0 139.8 L275.5 138.6 L276.0 137.0 L276.5 135.8 L277.0 135.0 L277.5 134.5 L278.0 134.4 L278.5 134.7 L279.0 135.4 L279.5 136.1 L280.0 136.5 L280.5 136.8 L281.0 137.0 L281.5 137.0 L282.0 136.8 L282.5 136.7 L283.0 137.1 L283.5 137.8 L284.0 138.3 L284.5 138.8 L285.0 139.1 L285.5 138.9 L286.0 137.5 L286.5 135.5 L287.0 133.9 L287.5 133.0 L288.0 132.6 L288.5 132.6 L289.0 133.1 L289.5 134.0 L290.0 135.2 L290.5 136.8 L291.0 138.6 L291.5 139.8 L292.0 140.2 L292.5 140.0 L293.0 139.4 L293.5 137.9 L294.0 136.1 L294.5 134.7 L295.0 134.2 L295.5 134.3 L296.0 134.6 L296.5 135.4 L297.0 136.5 L297.5 137.4 L298.0 137.9 L298.5 138.2 L299.0 138.6 L299.5 138.9 L300.0 139.2 L300.5 139.5 L301.0 139.8 L301.5 140.0 L302.0 140.4 L302.5 141.0 L303.0 141.7 L303.5 141.9 L304.0 141.2 L304.5 140.1 L305.0 138.9 L305.5 137.7 L306.0 136.4 L306.5 135.8 L307.0 136.4 L307.5 137.7 L308.0 139.1 L308.5 140.6 L309.0 142.1 L309.5 143.2 L310.0 143.6 L310.5 143.5 L311.0 143.1 L311.5 142.1 L312.0 140.7 L312.5 139.6 L313.0 138.8 L313.5 138.2 L314.0 138.1 L314.5 138.6 L315.0 139.6 L315.5 140.4 L316.0 140.7 L316.5 140.9 L317.0 141.0 L317.5 141.2 L318.0 141.3 L318.5 141.5 L319.0 141.9 L319.5 142.4 L320.0 142.9 L320.5 143.6 L321.0 144.3 L321.5 144.4 L322.0 143.8 L322.5 142.7 L323.0 141.6 L323.5 140.5 L324.0 139.5 L324.5 139.0 L325.0 139.2 L325.5 139.9 L326.0 141.0 L326.5 142.6 L327.0 144.6 L327.5 146.1 L328.0 146.5 L328.5 146.5 L329.0 146.0 L329.5 145.1 L330.0 143.8 L330.5 142.8 L331.0 142.4 L331.5 142.3 L332.0 142.3 L332.5 142.2 L333.0 142.2 L333.5 142.4 L334.0 142.8 L334.5 143.4 L335.0 143.8 L335.5 143.6 L336.0 143.2 L336.5 143.1 L337.0 143.6 L337.5 144.3 L338.0 145.1 L338.5 146.0 L339.0 146.8 L339.5 147.2 L340.0 146.8 L340.5 145.9 L341.0 144.8 L341.5 143.5 L342.0 141.9 L342.5 140.7 L343.0 139.9 L343.5 139.4 L344.0 139.7 L344.5 141.3 L345.0 143.7 L345.5 145.8 L346.0 147.2 L346.5 148.3 L347.0 148.6 L347.5 147.7 L348.0 146.2 L348.5 144.7 L349.0 143.7 L349.5 142.9 L350.0 142.4 L350.5 142.5 L351.0 142.9 L351.5 143.2 L352.0 143.3 L352.5 143.4 L353.0 143.3 L353.5 143.1 L354.0 142.8 L354.5 142.8 L355.0 143.0 L355.5 143.5 L356.0 144.2 L356.5 145.3 L357.0 146.6 L357.5 147.3 L358.0 147.0 L358.5 146.2 L359.0 145.3 L359.5 144.3 L360.0 143.2 L360.5 142.2 L361.0 141.4 L361.5 140.7 L362.0 140.7 L362.5 141.6 L363.0 143.2 L363.5 144.8 L364.0 146.3 L364.5 147.8 L365.0 148.6 L365.5 148.4 L366.0 147.6 L366.5 146.5 L367.0 145.3 L367.5 144.0 L368.0 143.0 L368.5 142.7 L369.0 142.8 L369.5 143.0 L370.0 143.2 L370.5 143.4 L371.0 143.6 L371.5 143.8 L372.0 144.0 L372.5 144.2 L373.0 144.4 L373.5 144.6 L374.0 144.9 L374.5 145.4 L375.0 146.1 L375.5 146.7 L376.0 147.4 L376.5 147.9 L377.0 147.9 L377.5 146.7 L378.0 144.8 L378.5 143.2 L379.0 141.9 L379.5 140.9 L380.0 140.6 L380.5 141.2 L381.0 142.6 L381.5 143.9 L382.0 145.2 L382.5 146.6 L383.0 147.5 L383.5 148.0 L384.0 148.2 L384.5 147.9 L385.0 147.0 L385.5 145.7 L386.0 144.6 L386.5 144.0 L387.0 143.6 L387.5 143.4 L388.0 143.5 L388.5 143.9 L389.0 144.2 L389.5 144.2 L390.0 144.0 L390.5 143.9 L391.0 143.7 L391.5 143.5 L392.0 143.8 L392.5 144.8 L393.0 146.2 L393.5 147.2 L394.0 147.6 L394.5 147.5 L395.0 147.1 L395.5 146.3 L396.0 145.0 L396.5 143.8 L397.0 142.5 L397.5 141.1 L398.0 140.3 L398.5 140.2 L399.0 140.6 L399.5 141.5 L400.0 143.2 L400.5 145.3 L401.0 146.9 L401.5 147.8 L402.0 148.2 L402.5 148.1 L403.0 147.4 L403.5 146.2 L404.0 145.1 L404.5 144.1 L405.0 143.3 L405.5 142.9 L406.0 143.3 L406.5 144.1 L407.0 144.7 L407.5 144.6 L408.0 144.2 L408.5 143.9 L409.0 143.5 L409.5 143.2 L410.0 143.3 L410.5 144.2 L411.0 145.5 L411.5 146.6 L412.0 147.5 L412.5 148.3 L413.0 148.5 L413.5 147.9 L414.0 146.8 L414.5 145.5 L415.0 143.8 L415.5 141.9 L416.0 140.7 L416.5 140.8 L417.0 141.5 L417.5 142.5 L418.0 143.8 L418.5 145.3 L419.0 146.6 L419.5 147.6 L420.0 148.4 L420.5 148.6 L421.0 148.1 L421.5 147.1 L422.0 146.2 L422.5 145.6 L423.0 145.1 L423.5 144.6 L424.0 144.0 L424.5 143.5 L425.0 143.2 L425.5 143.3 L426.0 143.7 L426.5 144.0 L427.0 144.0 L427.5 143.8 L428.0 143.9 L428.5 144.1 L429.0 144.6 L429.5 145.3 L430.0 146.4 L430.5 147.7 L431.0 148.4 L431.5 148.1 L432.0 147.1 L432.5 146.0 L433.0 144.4 L433.5 142.7 L434.0 141.3 L434.5 140.7 L435.0 140.6 L435.5 140.9 L436.0 141.8 L436.5 143.3 L437.0 144.6 L437.5 145.8 L438.0 146.9 L438.5 147.6 L439.0 147.7 L439.5 147.4 L440.0 146.8 L440.5 145.8 L441.0 144.6 L441.5 143.6 L442.0 143.3 L442.5 143.2 L443.0 143.3 L443.5 143.5 L444.0 143.8 L444.5 143.8 L445.0 143.3 L445.5 142.5 L446.0 142.1 L446.5 142.6 L447.0 143.5 L447.5 144.4 L448.0 145.3 L448.5 146.3 L449.0 146.9 L449.5 147.2 L450.0 147.2 L450.5 146.5 L451.0 144.6 L451.5 142.1 L452.0 140.2 L452.5 139.1 L453.0 138.6 L453.5 138.7 L454.0 139.6 L454.5 141.1 L455.0 142.4 L455.5 143.3 L456.0 144.1 L456.5 144.6 L457.0 145.1 L457.5 145.4 L458.0 145.2 L458.5 144.0 L459.0 142.3 L459.5 141.1 L460.0 140.8 L460.5 141.0 L461.0 141.1 L461.5 140.8 L462.0 140.5 L462.5 140.3 L463.0 140.0 L463.5 139.7 L464.0 139.7 L464.5 139.8 L465.0 140.2 L465.5 140.7 L466.0 141.4 L466.5 142.3 L467.0 143.1 L467.5 144.1 L468.0 145.1 L468.5 145.2 L469.0 143.9 L469.5 141.7 L470.0 139.7 L470.5 138.2 L471.0 136.9 L471.5 136.3 L472.0 136.6 L472.5 137.6 L473.0 138.7 L473.5 140.0 L474.0 141.4 L474.5 142.4 L475.0 142.7 L475.5 142.5 L476.0 142.2 L476.5 141.7 L477.0 141.1 L477.5 140.5 L478.0 140.2 L478.5 139.9 L479.0 139.7 L479.5 139.5 L480.0 139.4 L480.5 139.3 L481.0 139.2 L481.5 139.1 L482.0 139.0 L482.5 138.8 L483.0 138.5 L483.5 138.7 L484.0 139.4 L484.5 140.6 L485.0 141.7 L485.5 142.8 L486.0 143.8 L486.5 144.2 L487.0 143.3 L487.5 141.8 L488.0 140.3 L488.5 138.8 L489.0 137.2 L489.5 136.3 L490.0 136.5 L490.5 137.5 L491.0 138.7 L491.5 139.9 L492.0 141.3 L492.5 142.5 L493.0 143.6 L493.5 144.4 L494.0 144.7 L494.5 144.3 L495.0 143.4 L495.5 142.4 L496.0 141.5 L496.5 140.6 L497.0 140.1 L497.5 140.5 L498.0 141.4 L498.5 141.9 L499.0 141.8 L499.5 141.3 L500.0 140.8 L500.5 140.0 L501.0 139.1 L501.5 138.9 L502.0 140.1 L502.5 142.0 L503.0 143.6 L503.5 144.7 L504.0 145.5 L504.5 145.8 L505.0 145.4 L505.5 144.6 L506.0 143.5 L506.5 142.2 L507.0 140.8 L507.5 139.6 L508.0 138.7 L508.5 138.1 L509.0 138.2 L509.5 139.4 L510.0 141.3 L510.5 143.0 L511.0 144.3 L511.5 145.5 L512.0 146.0 L512.5 145.7 L513.0 144.9 L513.5 144.1 L514.0 143.4 L514.5 142.7 L515.0 142.3 L515.5 142.5 L516.0 143.0 L516.5 143.3 L517.0 143.0 L517.5 142.5 L518.0 142.0 L518.5 141.5 L519.0 141.0 L519.5 140.7 L520.0 141.0 L520.5 141.5 L521.0 142.4 L521.5 144.0 L522.0 145.9 L522.5 147.1 L523.0 147.3 L523.5 146.7 L524.0 145.8 L524.5 144.1 L525.0 142.0 L525.5 140.4 L526.0 139.2 L526.5 138.5 L527.0 138.6 L527.5 139.7 L528.0 141.6 L528.5 143.2 L529.0 144.2 L529.5 145.1 L530.0 145.6 L530.5 145.7 L531.0 145.5 L531.5 145.2 L532.0 144.9 L532.5 144.5 L533.0 144.1 L533.5 144.0 L534.0 143.9 L534.5 143.7 L535.0 143.4 L535.5 143.0 L536.0 142.6 L536.5 142.2 L537.0 141.8 L537.5 141.7 L538.0 141.8 L538.5 142.2 L539.0 143.0 L539.5 144.5 L540.0 146.4 L540.5 147.8 L541.0 148.2 L541.5 148.1 L542.0 147.5 L542.5 146.5 L543.0 145.0 L543.5 143.6 L544.0 142.4 L544.5 141.2 L545.0 140.6 L545.5 141.0 L546.0 142.0 L546.5 143.0 L547.0 144.0 L547.5 145.0 L548.0 145.7 L548.5 145.8 L549.0 145.5 L549.5 145.3 L550.0 145.2 L550.5 145.1 L551.0 145.0 L551.5 144.9 L552.0 144.8 L552.5 144.6 L553.0 144.4 L553.5 144.1 L554.0 143.6 L554.5 142.9 L555.0 141.9 L555.5 141.3 L556.0 141.1 L556.5 141.3 L557.0 141.9 L557.5 143.4 L558.0 145.3 L558.5 146.8 L559.0 147.7 L559.5 148.2 L560.0 148.2 L560.5 147.2 L561.0 145.7 L561.5 144.1 L562.0 142.6 L562.5 141.1 L563.0 140.3 L563.5 140.4 L564.0 141.2 L564.5 142.1 L565.0 143.1 L565.5 144.2 L566.0 145.0 L566.5 145.4 L567.0 145.6 L567.5 145.7 L568.0 145.7 L568.5 145.6 L569.0 145.5 L569.5 145.3 L570.0 145.2 L570.5 145.0 L571.0 144.9 L571.5 144.9 L572.0 144.5 L572.5 143.4 L573.0 142.0 L573.5 141.0 L574.0 140.5 L574.5 140.4 L575.0 140.8 L575.5 142.0 L576.0 143.6 L576.5 145.1 L577.0 146.4 L577.5 147.6 L578.0 148.1 L578.5 147.8 L579.0 146.8 L579.5 145.4 L580.0 143.5 L580.5 141.3 L581.0 139.8 L581.5 139.6 L582.0 140.2 L582.5 141.0 L583.0 141.9 L583.5 143.0 L584.0 144.0 L584.5 144.7 L585.0 145.2 L585.5 145.5 L586.0 145.5 L586.5 145.4 L587.0 145.2 L587.5 145.0 L588.0 144.7 L588.5 144.5 L589.0 144.5 L589.5 144.6 L590.0 144.4 L590.5 143.7 L591.0 142.8 L591.5 142.0 L592.0 141.4 L592.5 141.1 L593.0 141.1 L593.5 141.7 L594.0 142.7 L594.5 143.9 L595.0 145.3 L595.5 146.9 L596.0 147.9 L596.5 148.0 L597.0 147.6 L597.5 146.8 L598.0 145.4 L598.5 143.5 L599.0 142.0 L599.5 140.8 L600.0 139.9 L600.5 139.6 L601.0 140.4 L601.5 141.8 L602.0 143.2 L602.5 144.5 L603.0 145.9 L603.5 146.7 L604.0 146.6 L604.5 145.9 L605.0 145.4 L605.5 145.2 L606.0 145.1 L606.5 145.0 L607.0 144.7 L607.5 144.4 L608.0 144.0 L608.5 143.6 L609.0 143.1 L609.5 142.6 L610.0 141.7 L610.5 140.8 L611.0 140.5 L611.5 141.2 L612.0 142.5 L612.5 143.9 L613.0 145.2 L613.5 146.5 L614.0 147.4 L614.5 147.9 L615.0 148.0 L615.5 147.6 L616.0 146.5 L616.5 144.8 L617.0 143.3 L617.5 141.8 L618.0 140.4 L618.5 139.8 L619.0 140.4 L619.5 141.7 L620.0 143.1 L620.5 144.3 L621.0 145.4 L621.5 146.2 L622.0 146.5 L622.5 146.4 L623.0 146.2 L623.5 145.6 L624.0 145.0 L624.5 144.5 L625.0 144.5 L625.5 144.6 L626.0 144.5 L626.5 144.0 L627.0 143.2 L627.5 142.6 L628.0 142.2 L628.5 141.8 L629.0 141.6 L629.5 141.4 L630.0 141.2 L630.5 141.5 L631.0 142.8 L631.5 144.6 L632.0 146.2 L632.5 147.2 L633.0 148.0 L633.5 148.1 L634.0 147.0 L634.5 145.2 L635.0 143.6 L635.5 142.3 L636.0 141.2 L636.5 140.5 L637.0 140.5 L637.5 141.0 L638.0 141.8 L638.5 143.1 L639.0 144.7 L639.5 145.8 L640.0 145.8 L640.5 145.2 L641.0 144.7 L641.5 144.4 L642.0 144.2 L642.5 144.1 L643.0 144.5 L643.5 145.0 L644.0 145.2 L644.5 144.7 L645.0 143.9 L645.5 143.1 L646.0 142.2 L646.5 141.3 L647.0 140.8 L647.5 140.7 L648.0 141.0 L648.5 141.8 L649.0 143.1 L649.5 144.8 L650.0 146.1 L650.5 147.1 L651.0 147.8 L651.5 147.8 L652.0 147.0 L652.5 145.5 L653.0 144.1 L653.5 142.6 L654.0 141.1 L654.5 140.2 L655.0 140.2 L655.5 140.9 L656.0 141.7 L656.5 142.5 L657.0 143.5 L657.5 144.3 L658.0 144.6 L658.5 144.6 L659.0 144.7 L659.5 144.8 L660.0 144.9 L660.5 145.0 L661.0 145.0 L661.5 145.0 L662.0 145.0 L662.5 145.1 L663.0 145.2 L663.5 145.0 L664.0 144.2 L664.5 143.1 L665.0 142.2 L665.5 141.6 L666.0 141.3 L666.5 141.3 L667.0 142.0 L667.5 143.1 L668.0 144.4 L668.5 146.0 L669.0 147.7 L669.5 148.6 L670.0 148.1 L670.5 146.8 L671.0 145.4 L671.5 143.7 L672.0 142.0 L672.5 140.7 L673.0 140.1 L673.5 140.0 L674.0 140.4 L674.5 141.5 L675.0 143.1 L675.5 144.5 L676.0 145.2 L676.5 145.7 L677.0 145.8 L677.5 145.4 L678.0 144.6 L678.5 144.1 L679.0 144.1 L679.5 144.3 L680.0 144.5 L680.5 144.6 L681.0 144.6 L681.5 144.4 L682.0 143.6 L682.5 142.6 L683.0 141.7 L683.5 140.8 L684.0 140.1 L684.5 139.9 L685.0 140.5 L685.5 141.7 L686.0 143.0 L686.5 144.4 L687.0 145.9 L687.5 147.0 L688.0 147.4 L688.5 147.3 L689.0 146.7 L689.5 145.4 L690.0 143.7 L690.5 142.3 L691.0 141.2 L691.5 140.4 L692.0 140.2 L692.5 140.9 L693.0 142.3 L693.5 143.4 L694.0 144.1 L694.5 144.6 L695.0 144.9 L695.5 144.6 L696.0 144.1 L696.5 143.8 L697.0 144.1 L697.5 144.6 L698.0 145.0 L698.5 145.4 L699.0 145.7 L699.5 145.5 L700.0 144.7 L700.5 143.4 L701.0 142.1 L701.5 140.8 L702.0 139.6 L702.5 139.0 L703.0 139.4 L703.5 140.6 L704.0 141.9 L704.5 143.5 L705.0 145.4 L705.5 146.8 L706.0 147.4 L706.5 147.6 L707.0 147.3 L707.5 146.4 L708.0 144.9 L708.5 143.5 L709.0 142.2 L709.5 140.9 L710.0 140.2 L710.5 140.6 L711.0 141.6 L711.5 142.5 L712.0 142.9 L712.5 143.2 L713.0 143.5 L713.5 143.8 L714.0 144.1 L714.5 144.3 L715.0 144.6 L715.5 144.8 L716.0 144.8 L716.5 144.8 L717.0 144.6 L717.5 144.2 L718.0 143.7 L718.5 143.1 L719.0 142.4 L719.5 141.6 L720.0 140.8 L720.5 140.4 L721.0 140.4 L721.5 140.8 L722.0 141.4 L722.5 142.4 L723.0 143.7 L723.5 144.8 L724.0 146.1 L724.5 147.4 L725.0 147.8 L725.5 146.7 L726.0 144.7 L726.5 143.1 L727.0 141.9 L727.5 141.0 L728.0 140.5 L728.5 140.5 L729.0 140.9 L729.5 141.4 L730.0 142.0 L730.5 142.7 L731.0 143.2 L731.5 143.4 L732.0 143.4 L732.5 143.5 L733.0 143.8 L733.5 144.2 L734.0 144.5 L734.5 144.7 L735.0 144.9 L735.5 145.0 L736.0 145.0 L736.5 144.8 L737.0 144.3 L737.5 143.0 L738.0 141.3 L738.5 140.1 L739.0 139.4 L739.5 139.1 L740.0 139.5 L740.5 141.0 L741.0 143.2 L741.5 145.1 L742.0 146.4 L742.5 147.4 L743.0 147.8 L743.5 147.2 L744.0 146.0 L744.5 144.7 L745.0 143.2 L745.5 141.6 L746.0 140.5 L746.5 140.3 L747.0 140.5 L747.5 140.9 L748.0 141.7 L748.5 142.6 L749.0 143.4 L749.5 144.0 L750.0 144.4 L750.5 144.5 L751.0 144.3 L751.5 143.8 L752.0 143.6 L752.5 144.1 L753.0 144.9 L753.5 145.4 L754.0 145.4 L754.5 145.1 L755.0 144.6 L755.5 143.7 L756.0 142.5 L756.5 141.5 L757.0 140.6 L757.5 139.9 L758.0 139.8 L758.5 140.6 L759.0 142.1 L759.5 143.6 L760.0 145.2 L760.5 146.9 L761.0 147.9 L761.5 148.0 L762.0 147.5 L762.5 146.6 L763.0 145.1 L763.5 143.1 L764.0 141.6 L764.5 140.8 L765.0 140.4 L765.5 140.4 L766.0 141.1 L766.5 142.2 L767.0 143.1 L767.5 143.7 L768.0 144.2 L768.5 144.4 L769.0 144.3 L769.5 143.9 L770.0 143.7 L770.5 144.0 L771.0 144.5 L771.5 144.8 L772.0 144.9 L772.5 144.9 L773.0 144.6 L773.5 144.1 L774.0 143.4 L774.5 142.6 L775.0 141.7 L775.5 140.8 L776.0 140.4 L776.5 140.5 L777.0 141.1 L777.5 142.0 L778.0 143.4 L778.5 145.2 L779.0 146.5 L779.5 147.0 L780.0 146.9 L780.5 146.5 L781.0 145.4 L781.5 143.9 L782.0 142.6 L782.5 141.5 L783.0 140.7 L783.5 140.4 L784.0 141.1 L784.5 142.5 L785.0 143.5 L785.5 143.6 L786.0 143.4 L786.5 143.3 L787.0 143.4 L787.5 143.6 L788.0 143.8 L788.5 143.9 L789.0 144.1 L789.5 144.5 L790.0 145.2 L790.5 146.0 L791.0 146.4 L791.5 146.0 L792.0 145.1 L792.5 144.0 L793.0 142.5 L793.5 140.7 L794.0 139.5 L794.5 139.3 L795.0 139.8 L795.5 140.7 L796.0 142.5 L796.5 144.7 L797.0 146.5 L797.5 147.6 L798.0 148.1 L798.5 148.1 L799.0 147.5 L799.5 146.3 L800.0 144.9 L800.5 143.3 L801.0 141.6 L801.5 140.5 L802.0 140.5 L802.5 141.2 L803.0 141.9 L803.5 142.5 L804.0 143.2 L804.5 143.7 L805.0 143.8 L805.5 143.8 L806.0 143.9 L806.5 144.1 L807.0 144.4 L807.5 144.8 L808.0 145.6 L808.5 146.6 L809.0 147.1 L809.5 146.8 L810.0 146.1 L810.5 145.1 L811.0 143.6 L811.5 141.8 L812.0 140.5 L812.5 139.9 L813.0 139.9 L813.5 140.5 L814.0 141.9 L814.5 143.9 L815.0 145.5 L815.5 146.7 L816.0 147.6 L816.5 148.1 L817.0 147.8 L817.5 147.1 L818.0 146.1 L818.5 144.7 L819.0 143.0 L819.5 141.8 L820.0 141.7 L820.5 142.1 L821.0 142.7 L821.5 143.4 L822.0 144.3 L822.5 144.9 L823.0 145.0 L823.5 144.8 L824.0 144.6 L824.5 144.5 L825.0 144.6 L825.5 144.9 L826.0 145.8 L826.5 147.0 L827.0 147.8 L827.5 148.0 L828.0 147.7 L828.5 147.0 L829.0 145.4 L829.5 143.4 L830.0 141.8 L830.5 141.0 L831.0 140.6 L831.5 140.9 L832.0 142.2 L832.5 144.2 L833.0 146.0 L833.5 147.3 L834.0 148.4 L834.5 148.9 L835.0 148.6 L835.5 147.7 L836.0 146.6 L836.5 145.1 L837.0 143.5 L837.5 142.4 L838.0 142.4 L838.5 143.0 L839.0 143.6 L839.5 144.0 L840.0 144.3 L840.5 144.3 L841.0 143.6 L841.5 142.6 L842.0 141.7 L842.5 141.1 L843.0 140.6 L843.5 140.3 L844.0 140.2 L844.5 140.2 L845.0 140.0 L845.5 139.4 L846.0 138.5 L846.5 137.3 L847.0 135.9 L847.5 134.3 L848.0 132.5 L848.5 130.6 L849.0 128.6 L849.5 127.2 L850.0 126.8 L850.5 127.0 L851.0 127.6 L851.5 128.7 L852.0 130.1 L852.5 131.2 L853.0 131.5 L853.5 131.4 L854.0 130.8 L854.5 129.4 L855.0 127.5 L855.5 126.1 L856.0 125.4 L856.5 125.1 L857.0 125.0 L857.5 125.1 L858.0 125.4 L858.5 125.6 L859.0 125.7 L859.5 125.6 L860.0 125.4 L860.5 125.0 L861.0 124.5 L861.5 124.3 L862.0 124.5 L862.5 125.1 L863.0 125.6 L863.5 126.1 L864.0 126.6 L864.5 126.6 L865.0 126.0 L865.5 124.9 L866.0 123.9 L866.5 123.1 L867.0 122.4 L867.5 122.1 L868.0 122.4 L868.5 123.1 L869.0 124.2 L869.5 126.1 L870.0 128.3 L870.5 130.1 L871.0 131.4 L871.5 132.1 L872.0 132.2 L872.5 131.1 L873.0 129.4 L873.5 128.0 L874.0 127.3 L874.5 127.1 L875.0 127.1 L875.5 127.2 L876.0 127.6 L876.5 128.1 L877.0 129.0 L877.5 130.0 L878.0 130.6 L878.5 130.5 L879.0 130.0 L879.5 130.0 L880.0 131.0 L880.5 132.6 L881.0 134.0 L881.5 134.9 L882.0 135.7 L882.5 135.9 L883.0 135.6 L883.5 134.8 L884.0 133.6 L884.5 131.8 L885.0 129.7 L885.5 128.4 L886.0 128.1 L886.5 128.6 L887.0 129.6 L887.5 131.5 L888.0 133.9 L888.5 135.7 L889.0 136.6 L889.5 137.0 L890.0 136.9 L890.5 136.5 L891.0 135.7 L891.5 134.9 L892.0 133.9 L892.5 133.0 L893.0 132.4 L893.5 132.7 L894.0 133.5 L894.5 134.1 L895.0 134.3 L895.5 134.4 L896.0 134.6 L896.5 135.2 L897.0 135.9 L897.5 136.7 L898.0 137.4 L898.5 138.0 L899.0 139.0 L899.5 140.6 L900.0 142.5 L900.5 143.8 L901.0 144.2 L901.5 143.9 L902.0 143.3 L902.5 142.2 L903.0 140.7 L903.5 139.3 L904.0 138.0 L904.5 136.9 L905.0 136.6 L905.5 138.0 L906.0 140.3 L906.5 142.1 L907.0 143.1 L907.5 143.7 L908.0 143.8 L908.6 143.4 L909.1 142.5 L909.5 141.9" fill="none" stroke="#a9a9a9" stroke-width="2.1" stroke-linejoin="round" stroke-linecap="round"/><path d="M2.0 138.5 L2.6 135.9 L3.1 132.7 L3.6 129.0 L4.2 125.0 L4.7 120.9 L5.3 116.8 L5.9 112.9 L6.4 109.4 L7.0 105.6 L7.5 101.8 L8.1 97.9 L8.7 94.2 L9.3 90.8 L9.8 87.9 L10.2 85.6 L10.9 83.1 L11.5 81.6 L12.0 81.0 L12.5 81.1 L13.0 81.6 L13.7 83.9 L14.3 87.7 L14.9 92.4 L15.4 96.8 L16.0 101.9 L16.5 106.8 L17.1 110.5 L17.6 112.0 L18.2 112.4 L18.8 112.6 L19.3 113.2 L19.9 115.0 L20.5 119.6 L21.2 125.7 L21.8 132.1 L22.4 137.2 L23.1 141.8 L23.7 145.1 L24.3 147.4 L25.0 148.9 L25.7 149.1 L26.2 149.4 L26.8 149.5 L27.3 149.4 L27.8 150.2 L28.3 150.7 L28.8 147.4 L29.4 136.7 L30.0 122.1 L30.6 110.8 L31.1 106.7 L31.7 104.8 L32.2 103.9 L32.8 103.0 L33.4 102.1 L34.0 101.8 L34.6 101.3 L35.3 100.2 L35.9 98.5 L36.5 96.3 L37.1 93.9 L37.6 91.5 L38.2 89.4 L38.8 86.5 L39.4 83.5 L40.0 81.2 L40.5 80.4 L41.2 82.3 L41.8 86.5 L42.5 91.4 L43.0 95.7 L43.5 100.7 L44.1 105.5 L44.7 109.3 L45.2 111.0 L45.7 111.8 L46.3 112.3 L46.9 113.2 L47.4 115.2 L48.1 119.8 L48.7 125.8 L49.3 132.0 L49.9 137.0 L50.6 141.6 L51.2 145.0 L51.8 147.4 L52.5 148.9 L53.2 149.1 L53.7 149.4 L54.3 149.5 L54.8 149.4 L55.4 150.4 L55.8 151.2 L56.4 147.4 L56.9 134.9 L57.5 117.8 L58.1 104.7 L58.7 100.4 L59.2 98.8 L59.8 98.4 L60.4 97.3 L60.9 95.3 L61.5 93.3 L62.2 91.2 L62.8 89.0 L63.4 87.3 L64.0 85.5 L64.6 83.7 L65.2 81.8 L65.7 79.9 L66.4 76.9 L67.0 73.4 L67.5 70.6 L68.1 69.5 L68.7 71.6 L69.3 76.1 L70.0 81.3 L70.5 85.5 L71.0 90.4 L71.6 95.1 L72.2 99.1 L72.7 101.3 L73.3 102.7 L73.8 104.0 L74.4 105.6 L74.9 108.0 L75.6 112.9 L76.2 118.9 L76.8 125.0 L77.4 130.0 L78.1 134.9 L78.8 138.6 L79.3 141.3 L80.1 142.8 L80.7 143.0 L81.3 143.3 L81.8 143.4 L82.4 143.3 L82.9 144.5 L83.4 145.4 L83.9 141.3 L84.5 127.4 L85.0 108.5 L85.7 93.9 L86.2 89.0 L86.7 87.2 L87.3 86.6 L87.9 85.4 L88.5 83.3 L89.1 81.3 L89.7 79.2 L90.4 77.0 L90.9 75.0 L91.5 73.0 L92.1 70.8 L92.7 68.7 L93.2 66.5 L93.9 63.2 L94.5 59.4 L95.0 56.3 L95.6 55.0 L96.3 56.7 L96.9 60.9 L97.5 65.6 L98.0 69.5 L98.6 73.9 L99.1 78.1 L99.7 81.7 L100.2 83.5 L100.8 84.7 L101.4 85.7 L101.9 87.0 L102.5 89.2 L103.1 93.6 L103.8 99.2 L104.4 104.9 L105.0 109.5 L105.7 113.9 L106.3 117.2 L106.9 119.5 L107.6 121.0 L108.3 121.2 L108.8 121.5 L109.4 121.6 L109.9 121.5 L110.4 122.2 L110.9 122.6 L111.4 119.5 L112.0 109.5 L112.6 96.0 L113.2 85.7 L113.7 82.4 L114.3 81.4 L114.8 81.2 L115.4 80.4 L116.0 78.7 L116.6 76.8 L117.2 74.8 L117.9 72.9 L118.4 71.5 L119.0 70.1 L119.6 68.7 L120.2 67.3 L120.8 65.8 L121.4 63.3 L122.0 60.4 L122.6 58.1 L123.1 57.5 L123.8 59.9 L124.4 64.7 L125.0 70.7 L125.6 76.1 L126.1 82.7 L126.7 89.0 L127.2 93.8 L127.8 95.9 L128.3 96.7 L128.9 97.1 L129.5 98.0 L130.0 100.1 L130.7 105.3 L131.3 112.1 L131.9 119.1 L132.5 124.9 L133.2 130.5 L133.8 134.7 L134.4 137.7 L135.1 139.3 L135.8 139.4 L136.3 139.7 L136.9 139.8 L137.4 139.7 L137.9 141.1 L138.4 142.3 L138.9 137.7 L139.5 122.1 L140.1 100.7 L140.7 84.1 L141.3 78.4 L141.8 76.0 L142.4 75.1 L142.9 73.7 L143.5 71.6 L144.1 69.9 L144.8 68.2 L145.4 66.0 L146.0 63.8 L146.6 61.3 L147.2 58.7 L147.8 56.0 L148.3 53.4 L148.9 49.6 L149.5 45.3 L150.1 41.9 L150.6 40.5 L151.3 42.7 L151.9 47.8 L152.6 53.7 L153.1 58.5 L153.6 64.0 L154.2 69.3 L154.8 73.5 L155.3 75.3 L155.9 75.9 L156.4 76.3 L157.0 77.4 L157.5 79.8 L158.2 85.7 L158.8 93.5 L159.4 101.5 L160.0 108.0 L160.7 113.8 L161.4 117.9 L161.9 120.8 L162.6 122.4 L163.3 122.5 L163.8 122.8 L164.4 122.9 L165.0 122.8 L165.5 123.8 L166.0 124.6 L166.5 120.8 L167.0 108.3 L167.6 91.2 L168.3 78.1 L168.8 73.9 L169.3 72.5 L169.9 72.2 L170.5 71.2 L171.1 69.2 L171.7 67.1 L172.3 64.9 L172.9 62.7 L173.5 60.9 L174.1 59.1 L174.7 57.2 L175.3 55.3 L175.8 53.4 L176.5 50.3 L177.1 46.8 L177.6 44.0 L178.2 43.0 L178.8 45.2 L179.5 49.9 L180.1 55.6 L180.6 60.6 L181.2 66.7 L181.7 72.5 L182.3 76.8 L182.8 78.4 L183.4 78.8 L184.0 78.7 L184.5 79.3 L185.1 81.3 L185.7 86.6 L186.4 93.8 L187.0 101.3 L187.5 107.4 L188.2 112.8 L188.9 116.7 L189.5 119.5 L190.2 121.1 L190.8 121.2 L191.4 121.5 L191.9 121.6 L192.5 121.5 L193.0 122.8 L193.5 123.8 L194.0 119.5 L194.6 104.8 L195.2 84.8 L195.8 69.4 L196.3 64.2 L196.9 62.2 L197.4 61.6 L198.0 60.4 L198.6 58.6 L199.2 56.9 L199.8 55.2 L200.5 53.0 L201.0 50.8 L201.6 48.3 L202.2 45.7 L202.8 43.1 L203.4 40.5 L204.0 36.8 L204.6 32.8 L205.2 29.6 L205.7 28.4 L206.4 30.8 L207.0 36.0 L207.6 42.1 L208.2 47.3 L208.7 53.4 L209.2 59.2 L209.8 63.7 L210.4 65.5 L210.9 66.2 L211.5 66.6 L212.1 67.6 L212.6 70.1 L213.2 76.0 L213.9 84.0 L214.5 92.2 L215.1 98.8 L215.8 104.9 L216.4 109.3 L217.0 112.3 L217.7 114.0 L218.4 114.0 L218.9 114.3 L219.5 114.4 L220.0 114.3 L220.5 115.3 L221.0 116.0 L221.5 112.3 L222.1 100.0 L222.7 83.2 L223.3 70.3 L223.8 65.9 L224.4 64.3 L225.0 63.7 L225.5 62.5 L226.1 60.5 L226.7 58.5 L227.4 56.5 L228.0 54.4 L228.6 52.8 L229.2 51.1 L229.8 49.5 L230.4 47.7 L230.9 45.9 L231.5 43.0 L232.1 39.6 L232.7 36.8 L233.2 35.7 L233.9 37.6 L234.5 41.8 L235.2 46.7 L235.7 50.8 L236.2 55.4 L236.8 59.9 L237.4 63.6 L237.9 65.3 L238.4 66.3 L239.0 67.1 L239.6 68.2 L240.1 70.4 L240.8 75.1 L241.4 81.1 L242.0 87.2 L242.6 92.2 L243.3 96.8 L243.9 100.2 L244.5 102.6 L245.2 104.1 L245.9 104.3 L246.4 104.6 L247.0 104.7 L247.6 104.6 L248.1 105.3 L248.5 105.7 L249.1 102.6 L249.6 92.6 L250.2 79.1 L250.9 68.7 L251.4 65.3 L251.9 64.1 L252.5 63.8 L253.1 63.1 L253.7 61.8 L254.3 60.5 L254.9 59.2 L255.5 57.6 L256.1 56.1 L256.7 54.3 L257.3 52.5 L257.9 50.6 L258.4 48.8 L259.1 46.3 L259.7 43.5 L260.2 41.3 L260.8 40.5 L261.4 42.2 L262.0 45.9 L262.7 50.2 L263.2 53.7 L263.7 57.7 L264.3 61.7 L264.9 65.0 L265.4 66.8 L266.0 68.0 L266.5 69.1 L267.1 70.4 L267.7 72.4 L268.3 76.3 L268.9 81.2 L269.6 86.1 L270.1 90.1 L270.8 94.0 L271.5 96.9 L272.1 99.0 L272.8 100.4 L273.4 100.7 L274.0 101.0 L274.5 101.1 L275.1 101.0 L275.6 101.2 L276.1 101.1 L276.6 99.0 L277.2 93.0 L277.8 85.0 L278.4 78.6 L278.9 76.1 L279.4 74.8 L280.0 73.9 L280.6 73.0 L281.2 72.0 L281.8 71.1 L282.4 70.3 L283.1 69.5 L283.6 68.8 L284.2 68.2 L284.8 67.6 L285.4 67.0 L286.0 66.2 L286.6 64.7 L287.2 62.8 L287.8 61.3 L288.3 61.0 L289.0 63.0 L289.6 66.8 L290.2 71.1 L290.7 74.8 L291.3 79.1 L291.8 83.2 L292.4 86.5 L292.9 88.1 L293.5 88.8 L294.1 89.4 L294.6 90.4 L295.2 92.3 L295.8 96.6 L296.5 102.2 L297.1 108.0 L297.7 112.7 L298.4 116.9 L299.0 119.9 L299.6 122.0 L300.3 123.4 L301.0 123.7 L301.5 124.0 L302.1 124.1 L302.6 124.0 L303.1 125.1 L303.6 125.9 L304.1 122.0 L304.7 109.2 L305.3 91.7 L305.9 77.9 L306.4 72.7 L307.0 70.1 L307.5 68.6 L308.1 67.1 L308.7 65.5 L309.3 64.4 L309.9 63.3 L310.6 61.8 L311.2 60.2 L311.8 58.4 L312.4 56.5 L312.9 54.4 L313.5 52.4 L314.1 49.3 L314.7 45.7 L315.3 42.8 L315.8 41.7 L316.5 43.9 L317.1 48.7 L317.8 54.3 L318.3 59.0 L318.8 64.6 L319.4 69.9 L320.0 74.2 L320.5 76.1 L321.0 77.1 L321.6 77.8 L322.2 78.9 L322.7 81.3 L323.4 86.6 L324.0 93.4 L324.6 100.4 L325.2 106.2 L325.9 111.5 L326.5 115.5 L327.1 118.3 L327.8 119.9 L328.5 120.0 L329.0 120.3 L329.6 120.4 L330.1 120.3 L330.7 121.3 L331.1 122.0 L331.7 118.3 L332.2 106.1 L332.8 89.4 L333.4 76.3 L334.0 71.4 L334.5 68.9 L335.1 67.6 L335.7 66.2 L336.2 64.7 L336.8 63.8 L337.5 63.0 L338.1 61.6 L338.7 60.0 L339.3 58.1 L339.9 56.1 L340.5 54.0 L341.0 51.9 L341.7 48.9 L342.3 45.4 L342.8 42.7 L343.4 41.7 L344.0 43.8 L344.6 48.4 L345.3 54.1 L345.8 59.2 L346.3 65.3 L346.9 71.2 L347.5 75.7 L348.0 77.7 L348.6 78.7 L349.1 79.2 L349.7 80.2 L350.2 82.3 L350.9 87.1 L351.5 93.3 L352.1 99.8 L352.7 105.1 L353.4 110.2 L354.1 114.2 L354.6 117.0 L355.4 118.6 L356.0 118.7 L356.6 119.0 L357.1 119.1 L357.7 119.0 L358.2 119.9 L358.7 120.6 L359.2 117.0 L359.8 105.3 L360.3 89.3 L361.0 77.0 L361.5 72.8 L362.0 71.0 L362.6 70.3 L363.2 69.4 L363.8 68.0 L364.4 67.0 L365.0 65.9 L365.7 64.3 L366.2 62.5 L366.8 60.4 L367.4 58.2 L368.0 55.9 L368.5 53.8 L369.2 50.7 L369.8 47.5 L370.3 44.9 L370.9 44.0 L371.6 46.1 L372.2 50.6 L372.8 56.0 L373.3 60.8 L373.9 66.4 L374.4 71.8 L375.0 75.8 L375.5 77.3 L376.1 77.6 L376.7 77.6 L377.2 78.1 L377.8 80.1 L378.4 85.3 L379.1 92.3 L379.7 99.6 L380.3 105.5 L381.0 110.7 L381.6 114.4 L382.2 117.0 L382.9 118.5 L383.6 118.7 L384.1 119.0 L384.7 119.1 L385.2 119.0 L385.7 120.0 L386.2 120.7 L386.7 117.0 L387.3 104.8 L387.9 88.2 L388.5 75.0 L389.0 70.1 L389.6 67.5 L390.1 66.1 L390.7 64.5 L391.3 62.9 L391.9 61.6 L392.5 60.4 L393.2 59.0 L393.7 57.5 L394.3 56.0 L394.9 54.3 L395.5 52.5 L396.1 50.7 L396.7 47.8 L397.3 44.3 L397.9 41.5 L398.4 40.5 L399.1 42.6 L399.7 47.1 L400.3 52.7 L400.9 57.8 L401.4 63.9 L402.0 69.7 L402.5 74.1 L403.1 75.9 L403.6 76.5 L404.2 76.8 L404.8 77.4 L405.3 79.4 L406.0 84.3 L406.6 90.8 L407.2 97.5 L407.8 103.0 L408.5 108.1 L409.1 112.0 L409.7 114.7 L410.4 116.3 L411.1 116.4 L411.6 116.7 L412.2 116.8 L412.7 116.7 L413.2 117.6 L413.7 118.3 L414.2 114.7 L414.8 102.7 L415.4 86.5 L416.0 74.0 L416.6 70.1 L417.1 68.8 L417.7 68.5 L418.2 67.5 L418.8 65.4 L419.4 63.0 L420.1 60.7 L420.7 58.4 L421.3 56.8 L421.9 55.2 L422.5 53.7 L423.1 52.1 L423.6 50.4 L424.2 47.6 L424.8 44.2 L425.4 41.5 L426.0 40.5 L426.6 42.5 L427.2 47.0 L427.9 52.3 L428.4 57.0 L428.9 62.6 L429.5 67.9 L430.1 72.0 L430.6 73.7 L431.2 74.3 L431.7 74.6 L432.3 75.3 L432.8 77.3 L433.5 82.2 L434.1 88.8 L434.7 95.5 L435.3 101.0 L436.0 106.1 L436.7 109.7 L437.2 112.3 L437.9 113.8 L438.6 114.0 L439.1 114.3 L439.7 114.4 L440.3 114.3 L440.8 114.9 L441.3 115.3 L441.8 112.3 L442.3 102.9 L442.9 90.2 L443.6 80.4 L444.1 77.2 L444.6 75.9 L445.2 75.5 L445.8 74.7 L446.4 73.3 L447.0 71.8 L447.6 70.4 L448.2 68.8 L448.8 67.5 L449.4 66.1 L450.0 64.6 L450.6 63.2 L451.1 61.7 L451.8 59.2 L452.4 56.3 L452.9 54.2 L453.5 53.8 L454.1 56.8 L454.8 62.3 L455.4 69.1 L455.9 75.6 L456.5 83.3 L457.0 90.7 L457.6 96.1 L458.1 97.9 L458.7 98.0 L459.3 97.5 L459.8 97.8 L460.4 100.1 L461.0 106.6 L461.7 115.5 L462.3 124.9 L462.8 132.4 L463.5 139.3 L464.2 144.3 L464.8 147.7 L465.5 149.5 L466.1 149.4 L466.7 149.7 L467.2 149.8 L467.8 149.7 L468.3 150.8 L468.8 151.6 L469.3 147.7 L469.9 134.9 L470.5 117.4 L471.1 103.8 L471.6 99.0 L472.2 96.9 L472.7 96.1 L473.3 94.9 L473.9 93.6 L474.5 92.6 L475.1 91.6 L475.8 90.0 L476.3 88.1 L476.9 85.8 L477.5 83.3 L478.1 80.7 L478.7 78.4 L479.3 75.1 L479.9 71.5 L480.5 68.7 L481.0 67.7 L481.7 69.9 L482.3 74.7 L482.9 80.6 L483.5 86.0 L484.0 92.3 L484.5 98.5 L485.1 103.2 L485.7 105.1 L486.2 105.8 L486.8 106.1 L487.4 106.9 L487.9 109.0 L488.5 114.2 L489.2 121.0 L489.8 128.1 L490.4 133.9 L491.1 139.4 L491.7 143.5 L492.3 146.4 L493.0 148.0 L493.7 148.1 L494.2 148.4 L494.8 148.5 L495.3 148.4 L495.8 149.2 L496.3 149.8 L496.8 146.4 L497.4 135.4 L498.0 120.4 L498.6 108.9 L499.1 104.9 L499.7 103.3 L500.3 102.8 L500.8 101.9 L501.4 100.7 L502.0 99.8 L502.7 98.8 L503.3 97.3 L503.9 95.6 L504.5 93.5 L505.1 91.3 L505.7 89.1 L506.2 87.0 L506.8 84.1 L507.4 81.0 L508.0 78.6 L508.5 77.8 L509.2 79.8 L509.8 84.0 L510.5 89.3 L511.0 94.2 L511.5 100.0 L512.1 105.5 L512.7 109.7 L513.2 111.1 L513.7 111.3 L514.3 111.1 L514.9 111.4 L515.4 113.2 L516.1 117.9 L516.7 124.5 L517.3 131.3 L517.9 136.8 L518.6 141.7 L519.2 145.2 L519.8 147.7 L520.5 149.2 L521.2 149.4 L521.7 149.7 L522.3 149.8 L522.9 149.7 L523.4 150.7 L523.8 151.4 L524.4 147.7 L524.9 135.4 L525.5 118.8 L526.2 105.9 L526.7 101.4 L527.2 99.6 L527.8 98.9 L528.4 98.0 L529.0 96.8 L529.6 95.9 L530.2 94.9 L530.8 93.4 L531.4 91.4 L532.0 89.1 L532.6 86.5 L533.2 83.9 L533.7 81.6 L534.4 78.4 L535.0 75.0 L535.5 72.4 L536.1 71.4 L536.7 73.4 L537.3 77.9 L538.0 83.3 L538.5 88.3 L539.0 94.3 L539.6 100.0 L540.2 104.2 L540.7 105.8 L541.3 106.1 L541.8 106.1 L542.4 106.5 L543.0 108.4 L543.6 113.3 L544.2 120.0 L544.9 126.9 L545.4 132.6 L546.1 137.7 L546.8 141.4 L547.4 144.0 L548.1 145.5 L548.7 145.7 L549.3 146.0 L549.8 146.1 L550.4 146.0 L550.9 146.8 L551.4 147.3 L551.9 144.0 L552.5 133.2 L553.1 118.4 L553.7 107.1 L554.2 103.3 L554.7 101.8 L555.3 101.4 L555.9 100.6 L556.5 99.5 L557.1 98.6 L557.7 97.5 L558.4 96.0 L558.9 94.3 L559.5 92.2 L560.1 89.9 L560.7 87.6 L561.3 85.5 L561.9 82.7 L562.5 79.7 L563.1 77.3 L563.6 76.5 L564.3 78.4 L564.9 82.6 L565.5 87.6 L566.0 92.0 L566.6 97.1 L567.1 102.1 L567.7 106.0 L568.2 107.7 L568.8 108.4 L569.4 108.9 L569.9 109.8 L570.5 111.7 L571.1 116.3 L571.8 122.3 L572.4 128.5 L573.0 133.5 L573.7 138.2 L574.3 141.6 L574.9 144.0 L575.6 145.5 L576.3 145.7 L576.8 146.0 L577.4 146.1 L577.9 146.0 L578.4 146.8 L578.9 147.3 L579.4 144.0 L580.0 133.2 L580.6 118.5 L581.2 107.1 L581.7 102.9 L582.3 101.0 L582.8 100.0 L583.4 99.0 L584.0 97.8 L584.6 97.0 L585.2 96.2 L585.9 94.9 L586.5 93.4 L587.1 91.5 L587.7 89.5 L588.2 87.5 L588.8 85.5 L589.4 82.8 L590.0 79.7 L590.6 77.3 L591.1 76.5 L591.8 78.6 L592.4 83.0 L593.1 88.2 L593.6 92.9 L594.1 98.4 L594.7 103.7 L595.3 107.7 L595.8 109.1 L596.3 109.3 L596.9 109.1 L597.5 109.6 L598.0 111.4 L598.7 116.5 L599.3 123.5 L599.9 130.7 L600.5 136.5 L601.2 141.6 L601.8 145.2 L602.4 147.7 L603.1 149.2 L603.8 149.4 L604.3 149.7 L604.9 149.8 L605.4 149.7 L606.0 150.7 L606.4 151.5 L607.0 147.7 L607.5 135.1 L608.1 117.8 L608.7 104.5 L609.3 99.9 L609.8 97.9 L610.4 97.2 L611.0 96.2 L611.5 95.0 L612.1 94.3 L612.8 93.5 L613.4 92.0 L614.0 90.0 L614.6 87.5 L615.2 84.7 L615.8 82.0 L616.3 79.5 L617.0 76.2 L617.6 72.7 L618.1 69.9 L618.7 69.0 L619.3 71.2 L619.9 75.9 L620.6 81.7 L621.1 87.0 L621.6 93.2 L622.2 99.3 L622.8 103.9 L623.3 105.8 L623.9 106.4 L624.4 106.8 L625.0 107.5 L625.5 109.6 L626.2 114.7 L626.8 121.5 L627.4 128.4 L628.0 134.1 L628.7 139.5 L629.4 143.5 L629.9 146.4 L630.7 148.0 L631.3 148.1 L631.9 148.4 L632.4 148.5 L633.0 148.4 L633.5 149.1 L634.0 149.5 L634.5 146.4 L635.1 136.4 L635.6 122.9 L636.3 112.3 L636.8 108.5 L637.3 106.6 L637.9 105.8 L638.5 104.8 L639.1 103.9 L639.7 103.4 L640.3 102.8 L641.0 101.7 L641.5 100.2 L642.1 98.4 L642.7 96.3 L643.3 94.3 L643.8 92.4 L644.5 89.8 L645.1 87.0 L645.6 84.8 L646.2 84.0 L646.9 85.7 L647.5 89.3 L648.1 93.7 L648.6 97.5 L649.2 102.1 L649.7 106.4 L650.3 109.8 L650.8 111.1 L651.4 111.6 L652.0 111.8 L652.5 112.4 L653.1 114.1 L653.7 118.1 L654.4 123.6 L655.0 129.2 L655.6 133.7 L656.3 137.7 L656.9 140.6 L657.5 142.6 L658.2 144.0 L658.9 144.3 L659.4 144.6 L660.0 144.7 L660.5 144.6 L661.0 145.4 L661.5 146.0 L662.0 142.6 L662.6 131.6 L663.2 116.6 L663.8 105.1 L664.3 101.3 L664.9 100.0 L665.4 99.6 L666.0 98.7 L666.6 96.8 L667.2 94.7 L667.8 92.7 L668.5 90.7 L669.0 89.2 L669.6 87.7 L670.2 86.3 L670.8 84.8 L671.4 83.2 L672.0 80.5 L672.6 77.4 L673.2 74.9 L673.7 74.0 L674.4 76.0 L675.0 80.3 L675.6 85.5 L676.2 90.3 L676.7 95.9 L677.3 101.3 L677.8 105.2 L678.4 106.5 L678.9 106.5 L679.5 106.2 L680.1 106.4 L680.6 108.1 L681.3 113.1 L681.9 120.1 L682.5 127.3 L683.1 133.0 L683.8 138.1 L684.4 141.5 L685.0 144.0 L685.7 145.5 L686.4 145.7 L686.9 146.0 L687.5 146.1 L688.0 146.0 L688.5 147.0 L689.0 147.6 L689.5 144.0 L690.1 132.0 L690.7 115.6 L691.3 102.9 L691.9 98.5 L692.4 96.6 L693.0 95.9 L693.5 94.8 L694.1 93.3 L694.7 92.0 L695.4 90.6 L696.0 88.9 L696.6 87.2 L697.2 85.3 L697.8 83.2 L698.4 81.1 L698.9 79.0 L699.5 76.0 L700.1 72.6 L700.7 69.9 L701.2 69.0 L701.9 71.3 L702.5 76.2 L703.2 81.9 L703.7 86.7 L704.2 92.1 L704.8 97.5 L705.4 101.8 L705.9 104.0 L706.5 105.2 L707.0 106.2 L707.6 107.6 L708.1 110.1 L708.8 115.5 L709.4 122.4 L710.0 129.4 L710.6 135.2 L711.3 140.7 L712.0 144.8 L712.5 147.7 L713.2 149.3 L713.9 149.4 L714.4 149.7 L715.0 149.8 L715.6 149.7 L716.1 150.9 L716.6 151.9 L717.1 147.7 L717.6 133.4 L718.2 114.0 L718.9 98.8 L719.4 93.5 L719.9 91.1 L720.5 90.1 L721.1 88.8 L721.7 87.2 L722.3 86.0 L722.9 84.7 L723.5 82.9 L724.1 80.8 L724.7 78.4 L725.3 75.8 L725.9 73.1 L726.4 70.6 L727.1 67.0 L727.7 63.0 L728.2 59.9 L728.8 58.8 L729.4 61.3 L730.1 66.7 L730.7 73.3 L731.2 79.4 L731.8 86.6 L732.3 93.5 L732.9 98.7 L733.4 100.5 L734.0 100.8 L734.6 100.6 L735.1 101.1 L735.7 103.3 L736.3 109.4 L737.0 117.7 L737.6 126.3 L738.1 133.3 L738.8 139.8 L739.5 144.4 L740.1 147.7 L740.8 149.4 L741.4 149.4 L742.0 149.7 L742.5 149.8 L743.1 149.7 L743.6 150.8 L744.1 151.7 L744.6 147.7 L745.2 134.4 L745.8 116.3 L746.4 102.0 L746.9 96.6 L747.5 93.8 L748.0 92.3 L748.6 90.7 L749.2 89.2 L749.8 88.3 L750.4 87.4 L751.1 85.9 L751.6 84.2 L752.2 82.3 L752.8 80.1 L753.4 77.9 L754.0 75.7 L754.6 72.4 L755.2 68.7 L755.8 65.7 L756.3 64.6 L757.0 66.9 L757.6 72.0 L758.2 78.0 L758.8 83.4 L759.3 89.8 L759.8 95.9 L760.4 100.5 L761.0 102.2 L761.5 102.6 L762.1 102.6 L762.7 103.1 L763.2 105.3 L763.8 111.0 L764.5 118.8 L765.1 126.8 L765.7 133.3 L766.4 139.2 L767.0 143.4 L767.6 146.4 L768.3 148.0 L769.0 148.1 L769.5 148.4 L770.1 148.5 L770.6 148.4 L771.1 149.4 L771.6 150.0 L772.1 146.4 L772.7 134.4 L773.3 118.1 L773.9 105.3 L774.4 100.5 L775.0 98.0 L775.6 96.7 L776.1 95.5 L776.7 94.6 L777.3 94.4 L778.0 94.1 L778.6 93.0 L779.2 91.3 L779.8 89.0 L780.4 86.4 L781.0 83.8 L781.5 81.4 L782.1 78.3 L782.7 74.9 L783.3 72.3 L783.8 71.4 L784.5 73.5 L785.1 78.0 L785.8 83.5 L786.3 88.3 L786.8 94.1 L787.4 99.6 L788.0 103.8 L788.5 105.5 L789.0 106.0 L789.6 106.2 L790.2 106.9 L790.7 109.0 L791.4 114.0 L792.0 120.8 L792.6 127.7 L793.2 133.4 L793.9 138.6 L794.5 142.3 L795.1 145.0 L795.8 146.6 L796.5 146.7 L797.0 147.0 L797.6 147.1 L798.2 147.0 L798.7 147.9 L799.1 148.6 L799.7 145.0 L800.2 133.2 L800.8 117.0 L801.5 104.7 L802.0 100.6 L802.5 99.2 L803.1 98.9 L803.7 97.9 L804.3 96.1 L804.9 94.3 L805.5 92.4 L806.1 90.4 L806.7 88.6 L807.3 86.9 L807.9 85.0 L808.5 83.1 L809.0 81.2 L809.7 78.3 L810.3 75.0 L810.8 72.3 L811.4 71.4 L812.0 73.5 L812.6 77.9 L813.3 83.3 L813.8 88.2 L814.3 93.9 L814.9 99.3 L815.5 103.4 L816.0 104.9 L816.6 105.2 L817.1 105.1 L817.7 105.6 L818.3 107.5 L818.9 112.6 L819.5 119.6 L820.2 126.8 L820.7 132.6 L821.4 137.8 L822.1 141.4 L822.7 144.0 L823.4 145.5 L824.0 145.7 L824.6 146.0 L825.1 146.1 L825.7 146.0 L826.2 146.9 L826.7 147.6 L827.2 144.0 L827.8 132.4 L828.4 116.6 L829.0 104.2 L829.5 99.8 L830.0 97.7 L830.6 96.8 L831.2 95.7 L831.8 94.6 L832.4 94.0 L833.0 93.3 L833.7 92.0 L834.2 90.3 L834.8 88.1 L835.4 85.7 L836.0 83.3 L836.6 81.1 L837.2 78.1 L837.8 74.8 L838.4 72.2 L838.9 71.4 L839.6 73.6 L840.2 78.2 L840.8 83.9 L841.3 89.1 L841.9 95.3 L842.4 101.3 L843.0 105.9 L843.5 107.9 L844.1 108.7 L844.7 109.1 L845.2 110.0 L845.8 112.1 L846.4 117.0 L847.1 123.5 L847.7 130.1 L848.3 135.6 L849.0 140.9 L849.6 144.9 L850.2 147.7 L850.9 149.3 L851.6 149.4 L852.1 149.7 L852.7 149.8 L853.2 149.7 L853.7 150.7 L854.2 151.5 L854.7 147.7 L855.3 135.1 L855.9 117.9 L856.5 104.5 L857.0 99.7 L857.6 97.4 L858.1 96.4 L858.7 95.2 L859.3 93.8 L859.9 92.8 L860.5 91.8 L861.2 90.3 L861.8 88.5 L862.4 86.4 L863.0 84.1 L863.5 81.7 L864.1 79.5 L864.7 76.3 L865.3 72.9 L865.9 70.1 L866.4 69.0 L867.1 70.9 L867.7 75.3 L868.4 80.3 L868.9 84.6 L869.4 89.5 L870.0 94.3 L870.6 97.9 L871.1 99.4 L871.6 99.9 L872.2 100.1 L872.8 100.8 L873.3 102.8 L874.0 107.8 L874.6 114.5 L875.2 121.4 L875.8 126.9 L876.5 131.8 L877.1 135.2 L877.7 137.6 L878.4 139.1 L879.1 139.3 L879.6 139.6 L880.2 139.7 L880.7 139.6 L881.3 140.5 L881.7 141.1 L882.3 137.6 L882.8 126.2 L883.4 110.7 L884.0 98.6 L884.6 94.3 L885.1 92.4 L885.7 91.5 L886.3 90.5 L886.8 89.5 L887.4 88.8 L888.1 88.1 L888.7 86.8 L889.3 85.0 L889.9 82.9 L890.5 80.5 L891.1 78.1 L891.6 75.9 L892.3 73.0 L892.9 69.9 L893.4 67.4 L894.0 66.4 L894.6 67.9 L895.2 71.5 L895.9 75.9 L896.4 79.9 L896.9 84.6 L897.5 89.2 L898.1 92.7 L898.6 94.1 L899.2 94.6 L899.7 94.8 L900.3 95.4 L900.8 96.9 L901.5 100.7 L902.1 105.7 L902.7 110.8 L903.3 115.0 L904.0 118.9 L904.7 121.7 L905.2 123.7 L906.0 125.1 L906.6 125.4 L907.2 125.7 L907.7 125.8 L908.3 125.7 L908.8 126.3 L909.3 126.6 L909.8 123.7" fill="none" stroke="#e2733a" stroke-width="2.1" stroke-linejoin="round" stroke-linecap="round"/><path d="M2.5 74.0 L2.9 71.0 L3.4 66.6 L3.9 61.5 L4.5 56.5 L5.1 52.4 L5.6 50.0 L6.3 49.5 L6.9 52.6 L7.5 58.0 L8.0 63.6 L8.6 70.9 L9.1 78.7 L9.6 86.4 L10.3 102.3 L10.9 115.4 L11.4 120.4 L11.9 121.9 L12.4 122.8 L13.0 122.7 L13.6 122.7 L14.2 121.9 L14.7 120.9 L15.5 116.0 L15.9 112.1 L16.4 107.0 L16.9 101.1 L17.4 95.0 L18.0 89.1 L18.5 84.0 L19.0 79.5 L19.5 75.1 L20.1 71.0 L20.6 67.2 L21.1 63.9 L21.5 61.2 L22.1 58.5 L22.7 56.9 L23.2 56.2 L23.7 56.0 L24.3 56.5 L24.8 57.7 L25.4 59.3 L25.9 61.0 L26.5 63.1 L27.2 65.7 L27.8 67.9 L28.4 68.7 L29.0 67.6 L29.7 65.1 L30.3 62.2 L30.9 60.0 L31.5 58.4 L32.0 57.0 L32.6 56.1 L33.1 56.0 L33.8 57.1 L34.4 59.4 L35.0 63.7 L35.5 68.7 L36.1 75.1 L36.6 82.0 L37.1 88.8 L37.8 103.1 L38.5 115.0 L39.0 119.4 L39.4 120.7 L40.0 121.5 L40.5 121.5 L41.1 121.5 L41.8 120.7 L42.3 119.9 L43.0 115.7 L43.4 112.3 L43.9 107.8 L44.4 102.7 L45.0 97.4 L45.5 92.3 L46.0 87.9 L46.6 84.0 L47.1 80.3 L47.6 76.8 L48.1 73.6 L48.6 70.8 L49.1 68.5 L49.7 66.0 L50.2 64.5 L50.7 63.7 L51.3 63.5 L51.8 64.0 L52.4 65.2 L52.9 66.8 L53.5 68.5 L54.1 70.6 L54.7 73.3 L55.3 75.4 L55.9 76.3 L56.6 75.1 L57.2 72.6 L57.8 69.8 L58.4 67.5 L59.0 65.9 L59.6 64.6 L60.1 63.7 L60.6 63.5 L61.3 64.0 L61.9 65.6 L62.6 69.8 L63.1 75.6 L63.6 83.1 L64.1 91.3 L64.6 99.1 L65.4 114.8 L66.0 127.7 L66.5 132.6 L67.0 134.0 L67.5 134.8 L68.1 134.8 L68.7 134.9 L69.3 134.0 L69.8 132.9 L70.5 127.3 L70.9 122.9 L71.4 117.2 L71.9 110.6 L72.5 103.8 L73.0 97.2 L73.6 91.4 L74.1 86.2 L74.6 81.1 L75.1 76.3 L75.6 71.9 L76.1 68.1 L76.6 65.0 L77.2 62.1 L77.7 60.6 L78.3 60.1 L78.8 60.0 L79.3 60.4 L79.9 61.4 L80.4 62.9 L81.0 65.0 L81.6 68.2 L82.2 72.3 L82.9 76.1 L83.5 78.1 L84.1 77.7 L84.7 75.6 L85.4 73.0 L86.0 71.0 L86.5 69.5 L87.1 68.1 L87.6 67.2 L88.2 67.0 L88.8 67.5 L89.4 69.2 L90.1 73.5 L90.6 79.4 L91.2 87.0 L91.7 95.4 L92.1 103.4 L92.9 119.4 L93.5 132.4 L94.0 137.4 L94.5 138.9 L95.0 139.8 L95.6 139.7 L96.2 139.7 L96.8 138.9 L97.3 137.8 L98.1 132.7 L98.5 128.6 L98.9 123.2 L99.5 117.1 L100.0 110.7 L100.6 104.5 L101.1 99.0 L101.6 93.9 L102.1 88.9 L102.7 84.0 L103.2 79.6 L103.7 75.8 L104.1 72.9 L104.7 70.2 L105.3 69.2 L105.8 69.2 L106.3 69.5 L106.9 70.0 L107.4 71.0 L108.0 72.5 L108.5 74.5 L109.1 77.8 L109.8 82.1 L110.4 85.9 L111.0 87.8 L111.6 86.6 L112.3 83.5 L112.9 79.8 L113.5 77.0 L114.1 75.3 L114.6 74.0 L115.2 73.2 L115.7 73.0 L116.3 73.2 L117.0 74.4 L117.6 78.2 L118.1 83.9 L118.7 91.5 L119.2 99.7 L119.7 107.5 L120.4 122.7 L121.1 135.1 L121.6 139.8 L122.0 141.2 L122.6 142.0 L123.1 142.0 L123.7 142.1 L124.4 141.2 L124.9 139.9 L125.6 133.8 L126.0 129.0 L126.5 122.6 L127.0 115.4 L127.6 107.9 L128.1 100.7 L128.6 94.4 L129.1 88.8 L129.7 83.4 L130.2 78.3 L130.7 73.6 L131.2 69.5 L131.7 66.2 L132.3 62.9 L132.8 61.0 L133.3 60.3 L133.9 60.0 L134.4 60.2 L134.9 61.0 L135.5 62.6 L136.1 65.0 L136.7 69.1 L137.3 74.5 L137.9 79.6 L138.5 82.5 L139.2 82.5 L139.8 80.6 L140.4 78.0 L141.0 76.0 L141.6 74.6 L142.2 73.2 L142.7 72.2 L143.2 72.0 L143.9 72.8 L144.5 74.7 L145.1 78.8 L145.7 83.9 L146.2 90.4 L146.7 97.6 L147.2 104.5 L148.0 118.8 L148.6 130.5 L149.1 134.9 L149.5 136.2 L150.1 137.0 L150.6 137.0 L151.3 137.1 L151.9 136.2 L152.4 134.9 L153.1 128.7 L153.5 123.8 L154.0 117.4 L154.5 110.1 L155.1 102.5 L155.6 95.2 L156.2 88.9 L156.7 83.3 L157.2 77.9 L157.7 72.8 L158.2 68.2 L158.7 64.2 L159.2 60.9 L159.8 57.4 L160.3 55.4 L160.9 54.4 L161.4 54.0 L161.9 54.1 L162.5 55.1 L163.0 56.7 L163.6 59.0 L164.2 62.8 L164.8 67.8 L165.4 72.5 L166.1 75.3 L166.7 75.2 L167.3 73.4 L167.9 70.9 L168.5 69.0 L169.1 67.6 L169.7 66.1 L170.2 65.1 L170.7 65.0 L171.4 66.0 L172.0 68.4 L172.7 72.9 L173.2 78.2 L173.7 85.1 L174.3 92.6 L174.7 99.9 L175.5 115.2 L176.1 127.8 L176.6 132.6 L177.1 134.0 L177.6 134.8 L178.2 134.8 L178.8 134.8 L179.4 134.0 L179.9 133.0 L180.7 127.8 L181.1 123.7 L181.5 118.3 L182.1 112.2 L182.6 105.8 L183.2 99.7 L183.7 94.3 L184.2 89.6 L184.7 85.0 L185.3 80.6 L185.8 76.7 L186.3 73.3 L186.7 70.5 L187.3 67.6 L187.9 65.9 L188.4 65.2 L188.9 65.0 L189.5 65.4 L190.0 66.5 L190.5 68.2 L191.1 70.0 L191.7 72.6 L192.3 75.9 L193.0 78.7 L193.6 79.9 L194.2 78.7 L194.9 75.8 L195.5 72.5 L196.1 70.0 L196.7 68.4 L197.2 67.1 L197.8 66.3 L198.3 66.0 L198.9 65.8 L199.6 66.6 L200.2 70.6 L200.7 77.1 L201.3 85.9 L201.8 95.6 L202.3 104.5 L203.0 121.6 L203.6 135.3 L204.1 140.6 L204.6 142.2 L205.1 143.1 L205.7 143.0 L206.3 143.1 L206.9 142.2 L207.5 141.0 L208.2 135.4 L208.6 130.9 L209.1 125.1 L209.6 118.4 L210.1 111.5 L210.7 104.8 L211.2 98.9 L211.7 93.6 L212.3 88.5 L212.8 83.6 L213.3 79.1 L213.8 75.2 L214.2 72.1 L214.9 69.1 L215.4 67.6 L215.9 67.1 L216.4 67.0 L217.0 67.5 L217.5 68.8 L218.1 70.4 L218.6 72.0 L219.2 73.7 L219.9 75.7 L220.5 77.4 L221.1 78.1 L221.8 77.4 L222.4 75.7 L223.0 73.7 L223.6 72.0 L224.2 70.7 L224.7 69.4 L225.3 68.4 L225.8 68.0 L226.5 67.7 L227.1 68.4 L227.7 72.2 L228.3 78.5 L228.8 87.0 L229.3 96.4 L229.8 105.0 L230.6 121.4 L231.2 134.6 L231.7 139.7 L232.1 141.2 L232.7 142.1 L233.2 142.0 L233.9 142.0 L234.5 141.2 L235.0 140.2 L235.7 135.5 L236.1 131.7 L236.6 126.7 L237.1 121.0 L237.7 115.1 L238.2 109.3 L238.7 104.3 L239.3 99.7 L239.8 95.2 L240.3 90.9 L240.8 87.0 L241.3 83.6 L241.8 81.0 L242.4 78.4 L242.9 77.2 L243.4 76.9 L244.0 77.0 L244.5 77.6 L245.1 78.9 L245.6 80.5 L246.2 82.0 L246.8 83.8 L247.4 85.8 L248.0 87.5 L248.7 88.1 L249.3 87.2 L249.9 85.2 L250.5 82.9 L251.1 81.0 L251.7 79.6 L252.3 78.3 L252.8 77.4 L253.3 77.0 L254.0 76.9 L254.6 77.6 L255.3 81.1 L255.8 86.6 L256.3 93.9 L256.9 102.0 L257.3 109.5 L258.1 123.9 L258.7 135.5 L259.2 139.9 L259.7 141.2 L260.2 142.0 L260.8 142.0 L261.4 142.0 L262.0 141.2 L262.5 140.1 L263.2 134.9 L263.6 130.7 L264.1 125.3 L264.7 119.0 L265.2 112.5 L265.8 106.3 L266.3 100.8 L266.8 95.9 L267.3 91.0 L267.8 86.5 L268.4 82.3 L268.8 78.7 L269.3 75.8 L269.9 72.9 L270.5 71.5 L271.0 71.0 L271.5 71.0 L272.1 71.4 L272.6 72.5 L273.1 74.1 L273.7 76.0 L274.3 78.7 L274.9 82.3 L275.6 85.3 L276.2 86.8 L276.8 85.9 L277.4 83.3 L278.1 80.3 L278.7 78.0 L279.2 76.4 L279.8 75.0 L280.3 74.1 L280.9 74.0 L281.5 74.9 L282.2 77.1 L282.8 81.4 L283.3 86.7 L283.9 93.4 L284.4 100.9 L284.9 108.0 L285.6 122.9 L286.2 135.2 L286.7 139.9 L287.2 141.2 L287.7 142.0 L288.3 142.0 L288.9 142.1 L289.5 141.2 L290.0 140.0 L290.8 134.3 L291.2 129.8 L291.7 123.8 L292.2 117.1 L292.7 110.0 L293.3 103.3 L293.8 97.3 L294.3 92.0 L294.8 86.9 L295.4 82.0 L295.9 77.5 L296.4 73.7 L296.8 70.6 L297.4 67.4 L298.0 65.8 L298.5 65.2 L299.0 65.0 L299.6 65.4 L300.1 66.6 L300.7 68.3 L301.2 70.0 L301.8 72.3 L302.5 75.1 L303.1 77.4 L303.7 78.1 L304.3 76.3 L305.0 72.8 L305.6 68.9 L306.2 66.0 L306.8 64.2 L307.3 62.9 L307.9 62.1 L308.4 62.0 L309.1 62.3 L309.7 63.7 L310.3 68.0 L310.8 74.3 L311.4 82.6 L311.9 91.7 L312.4 100.2 L313.1 117.1 L313.8 130.9 L314.3 136.1 L314.7 137.7 L315.3 138.6 L315.8 138.5 L316.4 138.6 L317.1 137.7 L317.6 136.4 L318.3 130.4 L318.7 125.6 L319.2 119.4 L319.7 112.3 L320.3 104.9 L320.8 97.8 L321.3 91.5 L321.9 85.8 L322.4 80.2 L322.9 74.8 L323.4 69.9 L323.9 65.7 L324.4 62.3 L325.0 59.2 L325.5 57.8 L326.0 57.4 L326.6 57.5 L327.1 57.7 L327.7 58.4 L328.2 59.9 L328.8 62.5 L329.4 67.3 L330.0 73.9 L330.6 80.0 L331.2 83.5 L331.9 83.0 L332.5 80.0 L333.1 76.3 L333.7 73.5 L334.3 71.9 L334.9 70.6 L335.4 69.7 L335.9 69.5 L336.6 69.7 L337.2 70.8 L337.9 74.6 L338.4 80.2 L338.9 87.6 L339.4 95.7 L339.9 103.2 L340.7 118.2 L341.3 130.2 L341.8 134.9 L342.3 136.2 L342.8 137.0 L343.4 137.0 L344.0 137.0 L344.6 136.2 L345.1 135.2 L345.8 130.0 L346.2 125.9 L346.7 120.4 L347.2 114.2 L347.8 107.8 L348.3 101.7 L348.9 96.4 L349.4 91.8 L349.9 87.5 L350.4 83.5 L350.9 79.9 L351.4 76.7 L351.9 74.0 L352.5 70.9 L353.0 68.8 L353.6 67.5 L354.1 67.0 L354.6 67.1 L355.2 68.1 L355.7 69.7 L356.3 72.0 L356.9 75.9 L357.5 81.1 L358.2 85.7 L358.8 88.0 L359.4 86.8 L360.0 83.2 L360.7 79.1 L361.3 76.0 L361.8 74.2 L362.4 72.8 L362.9 72.0 L363.5 72.0 L364.1 73.0 L364.7 75.2 L365.4 79.4 L365.9 84.4 L366.5 90.8 L367.0 97.7 L367.4 104.5 L368.2 118.7 L368.8 130.5 L369.3 134.9 L369.8 136.2 L370.3 137.0 L370.9 137.0 L371.5 137.1 L372.1 136.2 L372.6 135.1 L373.4 129.6 L373.8 125.3 L374.2 119.7 L374.8 113.3 L375.3 106.6 L375.9 100.1 L376.4 94.4 L376.9 89.2 L377.4 84.0 L378.0 79.1 L378.5 74.7 L379.0 70.8 L379.4 67.8 L380.0 64.9 L380.6 63.7 L381.1 63.4 L381.6 63.5 L382.2 64.0 L382.7 65.1 L383.3 66.6 L383.8 68.5 L384.4 71.3 L385.1 74.8 L385.7 77.9 L386.3 79.2 L386.9 78.0 L387.6 75.0 L388.2 71.6 L388.8 69.0 L389.4 67.4 L389.9 66.1 L390.5 65.2 L391.0 65.0 L391.6 65.0 L392.3 66.0 L392.9 69.9 L393.4 75.9 L394.0 84.0 L394.5 92.8 L395.0 101.0 L395.7 116.9 L396.4 129.8 L396.9 134.7 L397.3 136.2 L397.9 137.0 L398.4 137.0 L399.0 137.0 L399.7 136.2 L400.2 135.2 L400.9 130.1 L401.3 126.1 L401.8 120.8 L402.3 114.8 L402.9 108.5 L403.4 102.4 L403.9 97.0 L404.4 92.0 L405.0 87.0 L405.5 82.3 L406.0 77.9 L406.5 74.2 L407.0 71.3 L407.6 68.7 L408.1 67.7 L408.6 67.7 L409.2 68.0 L409.7 68.6 L410.2 69.9 L410.8 71.4 L411.4 73.0 L412.0 75.0 L412.6 77.4 L413.2 79.2 L413.8 79.7 L414.5 78.1 L415.1 75.0 L415.7 71.6 L416.3 69.0 L416.9 67.3 L417.5 65.9 L418.0 65.1 L418.5 65.0 L419.2 65.7 L419.8 67.7 L420.4 72.1 L421.0 77.7 L421.5 84.9 L422.0 92.9 L422.5 100.5 L423.3 116.1 L423.9 128.9 L424.4 133.8 L424.8 135.2 L425.4 136.0 L426.0 136.0 L426.6 136.1 L427.2 135.2 L427.7 134.1 L428.4 128.8 L428.8 124.5 L429.3 118.9 L429.8 112.5 L430.4 105.8 L430.9 99.5 L431.5 94.0 L432.0 89.1 L432.5 84.5 L433.0 80.1 L433.5 76.2 L434.0 72.7 L434.5 69.9 L435.1 66.8 L435.6 64.9 L436.2 63.9 L436.7 63.5 L437.2 63.9 L437.8 65.1 L438.3 66.8 L438.9 68.5 L439.5 70.6 L440.1 73.2 L440.7 75.3 L441.4 75.9 L442.0 74.3 L442.6 71.2 L443.2 67.7 L443.8 65.0 L444.4 63.3 L445.0 62.0 L445.5 61.2 L446.0 61.0 L446.7 61.2 L447.3 62.4 L448.0 66.5 L448.5 72.6 L449.0 80.8 L449.6 89.7 L450.0 98.0 L450.8 114.4 L451.4 127.6 L451.9 132.7 L452.4 134.2 L452.9 135.1 L453.5 135.0 L454.1 135.0 L454.7 134.2 L455.2 133.1 L456.0 127.9 L456.4 123.7 L456.8 118.2 L457.4 111.9 L457.9 105.4 L458.5 99.2 L459.0 93.8 L459.5 89.1 L460.0 84.6 L460.6 80.4 L461.1 76.5 L461.6 73.2 L462.0 70.4 L462.6 67.3 L463.2 65.4 L463.7 64.4 L464.2 64.0 L464.8 64.2 L465.3 65.0 L465.8 66.6 L466.4 69.0 L467.0 73.4 L467.6 79.4 L468.3 84.6 L468.9 86.7 L469.5 83.9 L470.2 78.0 L470.8 71.4 L471.4 66.6 L472.0 64.3 L472.5 63.1 L473.1 62.7 L473.6 62.6 L474.2 62.3 L474.9 63.0 L475.5 66.6 L476.0 72.6 L476.6 80.7 L477.1 89.6 L477.6 97.8 L478.3 113.4 L478.9 126.0 L479.4 130.8 L479.9 132.2 L480.4 133.0 L481.0 133.0 L481.6 133.1 L482.2 132.2 L482.8 131.0 L483.5 125.3 L483.9 120.7 L484.4 114.8 L484.9 108.0 L485.4 100.9 L486.0 94.2 L486.5 88.3 L487.0 83.2 L487.6 78.2 L488.1 73.6 L488.6 69.4 L489.1 65.7 L489.5 62.6 L490.2 59.4 L490.7 57.4 L491.2 56.4 L491.7 56.0 L492.3 56.3 L492.8 57.4 L493.4 59.0 L493.9 61.0 L494.5 64.0 L495.2 67.9 L495.8 71.3 L496.4 72.7 L497.1 71.0 L497.7 67.3 L498.3 63.1 L498.9 60.0 L499.5 58.2 L500.0 56.8 L500.6 56.1 L501.1 56.0 L501.8 56.3 L502.4 57.7 L503.0 61.9 L503.6 67.9 L504.1 75.8 L504.6 84.6 L505.1 92.8 L505.9 109.0 L506.5 122.1 L507.0 127.2 L507.4 128.7 L508.0 129.6 L508.5 129.5 L509.2 129.6 L509.8 128.7 L510.3 127.6 L511.0 122.3 L511.4 118.1 L511.9 112.5 L512.4 106.2 L513.0 99.6 L513.5 93.3 L514.0 87.7 L514.6 82.7 L515.1 77.7 L515.6 73.0 L516.1 68.7 L516.6 65.0 L517.1 62.1 L517.7 59.2 L518.2 57.9 L518.7 57.5 L519.3 57.5 L519.8 57.8 L520.4 58.6 L520.9 60.1 L521.5 62.5 L522.1 66.9 L522.7 72.9 L523.3 78.2 L524.0 80.3 L524.6 77.9 L525.2 72.3 L525.8 66.0 L526.4 61.5 L527.0 59.3 L527.6 58.1 L528.1 57.6 L528.6 57.5 L529.3 57.3 L529.9 58.0 L530.6 61.8 L531.1 67.9 L531.6 76.1 L532.2 85.1 L532.6 93.5 L533.4 109.5 L534.0 122.3 L534.5 127.2 L535.0 128.7 L535.5 129.5 L536.1 129.5 L536.7 129.6 L537.3 128.7 L537.8 127.6 L538.5 122.3 L538.9 118.0 L539.4 112.5 L540.0 106.1 L540.5 99.5 L541.1 93.2 L541.6 87.7 L542.1 82.9 L542.6 78.3 L543.1 73.9 L543.7 69.9 L544.1 66.5 L544.6 63.6 L545.2 60.6 L545.8 58.7 L546.3 57.8 L546.8 57.5 L547.4 57.7 L547.9 58.7 L548.4 60.3 L549.0 62.5 L549.6 66.3 L550.2 71.3 L550.9 75.7 L551.5 77.5 L552.1 75.4 L552.7 70.7 L553.4 65.4 L554.0 61.5 L554.5 59.4 L555.1 58.2 L555.6 57.6 L556.2 57.5 L556.8 57.7 L557.5 58.9 L558.1 62.6 L558.6 67.9 L559.2 75.1 L559.7 82.9 L560.2 90.2 L560.9 104.7 L561.5 116.5 L562.0 120.9 L562.5 122.2 L563.0 123.0 L563.6 123.0 L564.2 123.0 L564.8 122.2 L565.3 121.2 L566.1 116.3 L566.5 112.4 L567.0 107.2 L567.5 101.3 L568.0 95.2 L568.6 89.3 L569.1 84.1 L569.6 79.5 L570.1 74.9 L570.7 70.5 L571.2 66.5 L571.7 63.1 L572.1 60.3 L572.7 57.7 L573.3 56.4 L573.8 56.0 L574.3 56.0 L574.9 56.4 L575.4 57.5 L576.0 59.0 L576.5 61.0 L577.1 64.1 L577.8 68.1 L578.4 71.7 L579.0 73.2 L579.6 71.8 L580.3 68.4 L580.9 64.4 L581.5 61.5 L582.1 59.7 L582.6 58.3 L583.2 57.5 L583.7 57.5 L584.4 58.5 L585.0 60.9 L585.6 65.4 L586.1 70.7 L586.7 77.6 L587.2 85.0 L587.7 92.2 L588.4 107.4 L589.1 120.0 L589.6 124.8 L590.0 126.2 L590.6 127.0 L591.1 127.0 L591.7 127.1 L592.4 126.2 L592.9 125.1 L593.6 119.5 L594.0 115.2 L594.5 109.5 L595.0 103.0 L595.6 96.2 L596.1 89.6 L596.6 83.8 L597.2 78.4 L597.7 73.0 L598.2 67.9 L598.7 63.1 L599.2 59.1 L599.7 56.0 L600.3 53.2 L600.8 52.2 L601.3 52.2 L601.9 52.5 L602.4 52.7 L603.0 53.4 L603.5 54.8 L604.1 57.5 L604.7 62.8 L605.3 70.2 L605.9 76.8 L606.5 80.1 L607.2 78.3 L607.8 73.2 L608.4 67.3 L609.0 63.0 L609.6 60.9 L610.2 59.6 L610.7 59.1 L611.2 59.0 L611.9 59.2 L612.5 60.3 L613.2 64.0 L613.7 69.4 L614.2 76.5 L614.7 84.4 L615.2 91.8 L616.0 106.2 L616.6 118.0 L617.1 122.4 L617.6 123.7 L618.1 124.5 L618.7 124.5 L619.3 124.5 L619.9 123.7 L620.4 122.7 L621.1 118.0 L621.5 114.1 L622.0 109.1 L622.5 103.4 L623.1 97.4 L623.6 91.6 L624.2 86.5 L624.7 81.8 L625.2 77.1 L625.7 72.6 L626.2 68.5 L626.7 65.0 L627.2 62.2 L627.8 59.8 L628.3 58.8 L628.9 58.7 L629.4 59.0 L629.9 59.5 L630.5 60.6 L631.0 62.1 L631.6 64.0 L632.2 66.9 L632.8 70.8 L633.5 73.9 L634.1 74.8 L634.7 72.2 L635.3 67.3 L636.0 61.9 L636.6 58.0 L637.1 55.8 L637.7 54.5 L638.2 53.9 L638.8 54.0 L639.4 54.8 L640.0 56.8 L640.7 61.2 L641.2 66.8 L641.8 74.2 L642.3 82.2 L642.7 89.9 L643.5 105.6 L644.1 118.5 L644.6 123.5 L645.1 124.9 L645.6 125.7 L646.2 125.7 L646.8 125.8 L647.4 124.9 L647.9 123.7 L648.7 118.1 L649.1 113.7 L649.5 107.8 L650.1 101.2 L650.6 94.3 L651.2 87.6 L651.7 81.8 L652.2 76.6 L652.7 71.4 L653.3 66.6 L653.8 62.1 L654.3 58.3 L654.7 55.2 L655.3 52.2 L655.9 50.6 L656.4 50.1 L656.9 50.0 L657.5 50.4 L658.0 51.4 L658.6 53.0 L659.1 55.0 L659.7 58.2 L660.4 62.3 L661.0 65.9 L661.6 67.4 L662.2 65.9 L662.9 62.2 L663.5 58.1 L664.1 55.0 L664.7 53.2 L665.2 51.9 L665.8 51.1 L666.3 51.0 L666.9 51.3 L667.6 52.6 L668.2 56.8 L668.7 62.9 L669.3 71.1 L669.8 80.0 L670.3 88.4 L671.0 104.8 L671.7 118.2 L672.2 123.4 L672.6 124.9 L673.2 125.8 L673.7 125.7 L674.3 125.8 L675.0 124.9 L675.5 123.8 L676.2 118.2 L676.6 113.8 L677.1 108.1 L677.6 101.5 L678.2 94.6 L678.7 88.1 L679.2 82.4 L679.7 77.3 L680.3 72.4 L680.8 67.8 L681.3 63.6 L681.8 59.9 L682.3 56.9 L682.9 53.8 L683.4 52.1 L683.9 51.3 L684.5 51.0 L685.0 51.3 L685.5 52.3 L686.1 53.9 L686.7 56.0 L687.3 59.3 L687.9 63.6 L688.5 67.4 L689.1 69.0 L689.8 67.5 L690.4 63.8 L691.0 59.6 L691.6 56.5 L692.2 54.7 L692.8 53.4 L693.3 52.7 L693.8 52.5 L694.5 52.3 L695.1 53.1 L695.7 57.0 L696.3 63.3 L696.8 71.8 L697.3 81.1 L697.8 89.8 L698.6 106.3 L699.2 119.5 L699.7 124.7 L700.1 126.2 L700.7 127.1 L701.2 127.0 L701.9 127.1 L702.5 126.2 L703.0 125.0 L703.7 119.3 L704.1 114.8 L704.6 108.9 L705.1 102.2 L705.7 95.2 L706.2 88.4 L706.8 82.3 L707.3 76.8 L707.8 71.2 L708.3 65.8 L708.8 60.9 L709.3 56.7 L709.8 53.5 L710.4 50.6 L710.9 49.6 L711.5 49.7 L712.0 50.0 L712.5 50.3 L713.1 51.0 L713.6 52.4 L714.2 55.0 L714.8 60.0 L715.4 66.9 L716.0 73.1 L716.7 76.1 L717.3 74.5 L717.9 69.6 L718.5 64.1 L719.1 60.0 L719.7 57.9 L720.3 56.6 L720.8 56.0 L721.3 56.0 L722.0 56.3 L722.6 57.6 L723.3 61.7 L723.8 67.6 L724.3 75.4 L724.9 84.0 L725.3 92.0 L726.1 107.9 L726.7 120.8 L727.2 125.7 L727.7 127.2 L728.2 128.0 L728.8 128.0 L729.4 128.1 L730.0 127.2 L730.5 126.0 L731.3 120.3 L731.7 115.8 L732.1 109.9 L732.7 103.2 L733.2 96.1 L733.8 89.3 L734.3 83.3 L734.8 77.8 L735.3 72.4 L735.9 67.2 L736.4 62.4 L736.9 58.3 L737.3 55.1 L737.9 52.1 L738.5 51.0 L739.0 50.8 L739.5 51.0 L740.1 51.2 L740.6 52.0 L741.1 53.4 L741.7 56.0 L742.3 60.9 L742.9 67.5 L743.6 73.5 L744.2 76.7 L744.8 75.7 L745.5 71.9 L746.1 67.3 L746.7 64.0 L747.3 62.1 L747.8 60.7 L748.4 60.0 L748.9 60.0 L749.5 61.2 L750.2 63.7 L750.8 67.9 L751.3 72.6 L751.9 78.6 L752.4 85.1 L752.9 91.5 L753.6 105.2 L754.2 116.7 L754.7 121.0 L755.2 122.2 L755.7 123.0 L756.3 123.0 L756.9 123.0 L757.5 122.2 L758.1 121.2 L758.8 116.5 L759.2 112.6 L759.7 107.6 L760.2 101.8 L760.7 95.8 L761.3 90.1 L761.8 85.0 L762.3 80.4 L762.9 75.9 L763.4 71.7 L763.9 67.8 L764.4 64.4 L764.8 61.7 L765.5 59.1 L766.0 57.8 L766.5 57.5 L767.0 57.5 L767.6 57.8 L768.1 58.6 L768.7 60.1 L769.2 62.5 L769.8 66.9 L770.5 72.9 L771.1 78.1 L771.7 80.4 L772.4 78.2 L773.0 73.1 L773.6 67.2 L774.2 63.0 L774.8 60.8 L775.3 59.4 L775.9 58.9 L776.4 59.0 L777.1 60.0 L777.7 62.3 L778.3 66.5 L778.9 71.4 L779.4 77.6 L779.9 84.4 L780.4 91.0 L781.2 105.0 L781.8 116.6 L782.3 121.0 L782.7 122.2 L783.3 123.0 L783.8 123.0 L784.5 123.1 L785.1 122.2 L785.6 121.1 L786.3 115.8 L786.7 111.6 L787.2 106.0 L787.7 99.7 L788.3 93.1 L788.8 86.8 L789.3 81.2 L789.9 76.2 L790.4 71.2 L790.9 66.5 L791.4 62.2 L791.9 58.5 L792.4 55.6 L793.0 52.7 L793.5 51.4 L794.0 51.0 L794.6 51.0 L795.1 51.3 L795.7 52.3 L796.2 53.8 L796.8 56.0 L797.4 59.6 L798.0 64.4 L798.6 68.7 L799.3 70.7 L799.9 69.2 L800.5 65.5 L801.1 61.2 L801.7 58.0 L802.3 56.1 L802.9 54.7 L803.4 54.0 L803.9 54.0 L804.6 54.8 L805.2 56.9 L805.9 61.4 L806.4 67.3 L806.9 74.8 L807.5 83.1 L807.9 91.0 L808.7 107.2 L809.3 120.6 L809.8 125.7 L810.3 127.2 L810.8 128.1 L811.4 128.0 L812.0 128.1 L812.6 127.2 L813.1 126.0 L813.8 120.5 L814.2 116.0 L814.7 110.3 L815.3 103.7 L815.8 96.8 L816.4 90.1 L816.9 84.2 L817.4 78.7 L817.9 73.3 L818.4 68.0 L819.0 63.2 L819.4 59.1 L819.9 55.9 L820.5 53.1 L821.1 52.1 L821.6 52.2 L822.1 52.5 L822.7 52.9 L823.2 53.8 L823.7 55.3 L824.3 57.5 L824.9 61.3 L825.5 66.5 L826.2 70.9 L826.8 72.6 L827.4 70.2 L828.0 65.0 L828.7 59.2 L829.3 55.0 L829.8 52.8 L830.4 51.4 L830.9 50.8 L831.5 51.0 L832.1 51.9 L832.8 54.2 L833.4 59.0 L833.9 64.9 L834.5 72.6 L835.0 80.9 L835.5 89.0 L836.2 105.7 L836.8 119.4 L837.3 124.7 L837.8 126.2 L838.3 127.1 L838.9 127.0 L839.5 127.1 L840.1 126.2 L840.6 124.9 L841.4 118.9 L841.8 114.1 L842.3 107.9 L842.8 100.9 L843.3 93.5 L843.9 86.4 L844.4 80.0 L844.9 74.2 L845.4 68.4 L846.0 62.8 L846.5 57.8 L847.0 53.4 L847.4 50.0 L848.0 47.0 L848.6 45.8 L849.1 45.8 L849.6 46.0 L850.2 46.0 L850.7 46.3 L851.3 47.7 L851.8 51.0 L852.4 57.9 L853.1 67.5 L853.7 76.5 L854.3 81.7 L854.9 81.4 L855.6 77.5 L856.2 72.6 L856.8 69.0 L857.4 67.1 L857.9 65.8 L858.5 65.0 L859.0 65.0 L859.7 65.8 L860.3 67.8 L860.9 72.1 L861.4 77.6 L862.0 84.6 L862.5 92.3 L863.0 99.8 L863.7 115.0 L864.4 127.5 L864.9 132.3 L865.3 133.7 L865.9 134.5 L866.4 134.5 L867.0 134.6 L867.7 133.7 L868.2 132.5 L868.9 127.0 L869.3 122.5 L869.8 116.7 L870.3 110.1 L870.9 103.2 L871.4 96.6 L871.9 90.7 L872.5 85.3 L873.0 80.0 L873.5 74.9 L874.0 70.3 L874.5 66.3 L875.0 63.2 L875.6 60.3 L876.1 59.1 L876.6 58.9 L877.2 59.0 L877.7 59.2 L878.3 59.8 L878.8 61.3 L879.4 64.0 L880.0 69.3 L880.6 76.5 L881.2 83.1 L881.8 86.6 L882.5 85.5 L883.1 81.5 L883.7 76.6 L884.3 73.0 L884.9 71.1 L885.5 69.9 L886.0 69.2 L886.5 69.0 L887.2 68.9 L887.8 69.8 L888.5 73.3 L889.0 78.6 L889.5 85.8 L890.0 93.7 L890.5 101.0 L891.3 115.2 L891.9 126.6 L892.4 131.0 L892.9 132.2 L893.4 133.0 L894.0 133.0 L894.6 133.1 L895.2 132.2 L895.7 130.9 L896.4 124.6 L896.8 119.7 L897.3 113.2 L897.8 105.8 L898.4 98.2 L898.9 90.8 L899.5 84.3 L900.0 78.4 L900.5 72.6 L901.0 67.1 L901.5 62.1 L902.0 57.8 L902.5 54.3 L903.1 51.0 L903.6 49.5 L904.2 49.0 L904.7 49.0 L905.2 49.4 L905.8 50.5 L906.3 52.1 L906.9 54.0 L907.5 56.8 L908.1 60.4 L908.8 63.5 L909.4 64.7" fill="none" stroke="#3c93e0" stroke-width="2.1" stroke-linejoin="round" stroke-linecap="round"/></svg></div>
    </div>
  <div class="mbox" style="top:488px;height:185px">
      <div class="mleft"><div class="mh">Bandwidth</div><div class="ml" style="top:70.7px;color:#3a8dde">R</div><div class="mv" style="top:70.7px;right:11px">2.49 GB/s</div><div class="ml" style="top:132.7px;color:#e8702f">W</div><div class="mv" style="top:132.7px;right:8px">1021.98 MB/s</div></div>
      <div class="mchart"><svg width="911" height="183" viewBox="0 0 911 183"><text class="ax" x="8" y="21">5 GB/s</text><text class="ax" x="103" y="179.3" text-anchor="middle">10:40</text><text class="ax" x="285" y="179.3" text-anchor="middle">10:41</text><text class="ax" x="467" y="179.3" text-anchor="middle">10:42</text><text class="ax" x="649" y="179.3" text-anchor="middle">10:43</text><text class="ax" x="831" y="179.3" text-anchor="middle">10:44</text><path d="M2.0 137.0 L2.6 135.1 L3.1 132.8 L3.6 130.2 L4.2 127.4 L4.7 124.6 L5.3 121.8 L5.9 119.2 L6.4 116.9 L7.0 114.4 L7.5 111.9 L8.1 109.4 L8.7 107.1 L9.3 104.9 L9.8 103.0 L10.2 101.4 L10.9 99.5 L11.5 98.2 L12.0 97.4 L12.5 97.2 L13.0 97.4 L13.7 99.1 L14.3 102.1 L14.9 105.9 L15.4 109.6 L16.0 113.9 L16.5 118.2 L17.1 121.3 L17.6 122.6 L18.2 122.9 L18.8 123.0 L19.3 123.4 L19.9 124.8 L20.5 128.1 L21.2 132.6 L21.8 137.3 L22.4 141.0 L23.1 144.4 L23.7 146.8 L24.3 148.6 L25.0 149.9 L25.7 150.3 L26.2 150.6 L26.8 150.7 L27.3 150.6 L27.8 151.2 L28.3 151.5 L28.8 148.6 L29.4 139.5 L30.0 127.1 L30.6 117.4 L31.1 113.9 L31.7 112.2 L32.2 111.4 L32.8 110.5 L33.4 109.6 L34.0 109.1 L34.6 108.5 L35.3 107.5 L35.9 106.1 L36.5 104.5 L37.1 102.6 L37.6 100.7 L38.2 99.0 L38.8 96.6 L39.4 94.0 L40.0 92.0 L40.5 91.3 L41.2 92.9 L41.8 96.5 L42.5 100.8 L43.0 104.8 L43.5 109.5 L44.1 114.1 L44.7 117.5 L45.2 118.9 L45.7 119.3 L46.3 119.5 L46.9 120.0 L47.4 121.5 L48.1 125.3 L48.7 130.4 L49.3 135.7 L49.9 139.9 L50.6 143.8 L51.2 146.6 L51.8 148.6 L52.5 150.0 L53.2 150.3 L53.7 150.6 L54.3 150.7 L54.8 150.6 L55.4 151.4 L55.8 152.0 L56.4 148.6 L56.9 137.7 L57.5 122.9 L58.1 111.3 L58.7 107.0 L59.2 104.9 L59.8 103.8 L60.4 102.5 L60.9 101.1 L61.5 100.1 L62.2 99.2 L62.8 97.8 L63.4 96.4 L64.0 94.8 L64.6 93.1 L65.2 91.3 L65.7 89.5 L66.4 86.8 L67.0 83.8 L67.5 81.3 L68.1 80.4 L68.7 82.2 L69.3 86.1 L70.0 90.7 L70.5 94.5 L71.0 99.0 L71.6 103.4 L72.2 107.0 L72.7 108.7 L73.3 109.7 L73.8 110.4 L74.4 111.6 L74.9 113.5 L75.6 117.7 L76.2 123.1 L76.8 128.5 L77.4 133.0 L78.1 137.2 L78.8 140.3 L79.3 142.5 L80.1 143.9 L80.7 144.2 L81.3 144.5 L81.8 144.6 L82.4 144.5 L82.9 145.4 L83.4 146.1 L83.9 142.5 L84.5 130.6 L85.0 114.4 L85.7 101.8 L86.2 97.4 L86.7 95.5 L87.3 94.8 L87.9 93.7 L88.5 92.2 L89.1 91.1 L89.7 89.9 L90.4 88.3 L90.9 86.6 L91.5 84.6 L92.1 82.5 L92.7 80.3 L93.2 78.2 L93.9 75.3 L94.5 72.1 L95.0 69.5 L95.6 68.3 L96.3 69.6 L96.9 72.9 L97.5 77.0 L98.0 80.7 L98.6 85.2 L99.1 89.5 L99.7 92.5 L100.2 93.4 L100.8 93.3 L101.4 92.8 L101.9 92.8 L102.5 94.0 L103.1 97.8 L103.8 103.1 L104.4 108.6 L105.0 113.0 L105.7 116.6 L106.3 119.1 L106.9 120.8 L107.6 122.1 L108.3 122.5 L108.8 122.8 L109.4 122.9 L109.9 122.8 L110.4 123.2 L110.9 123.3 L111.4 120.8 L112.0 113.2 L112.6 103.0 L113.2 95.0 L113.7 92.3 L114.3 91.2 L114.8 90.8 L115.4 90.1 L116.0 88.9 L116.6 87.8 L117.2 86.7 L117.9 85.4 L118.4 84.4 L119.0 83.2 L119.6 82.1 L120.2 80.9 L120.8 79.6 L121.4 77.7 L122.0 75.4 L122.6 73.6 L123.1 73.2 L123.8 75.3 L124.4 79.3 L125.0 84.1 L125.6 88.4 L126.1 93.4 L126.7 98.3 L127.2 102.2 L127.8 104.0 L128.3 104.9 L128.9 105.7 L129.5 106.7 L130.0 108.7 L130.7 113.1 L131.3 118.8 L131.9 124.5 L132.5 129.3 L133.2 133.8 L133.8 137.2 L134.4 139.6 L135.1 141.1 L135.8 141.3 L136.3 141.6 L136.9 141.7 L137.4 141.6 L137.9 142.7 L138.4 143.5 L138.9 139.6 L139.5 126.8 L140.1 109.3 L140.7 95.6 L141.3 90.5 L141.8 88.0 L142.4 86.7 L142.9 85.5 L143.5 84.5 L144.1 84.2 L144.8 83.8 L145.4 82.6 L146.0 80.7 L146.6 78.2 L147.2 75.4 L147.8 72.6 L148.3 70.1 L148.9 66.8 L149.5 63.3 L150.1 60.5 L150.6 59.4 L151.3 61.2 L151.9 65.4 L152.6 70.1 L153.1 73.9 L153.6 78.2 L154.2 82.4 L154.8 85.9 L155.3 87.6 L155.9 88.7 L156.4 89.6 L157.0 90.9 L157.5 93.1 L158.2 97.7 L158.8 103.6 L159.4 109.5 L160.0 114.3 L160.7 118.8 L161.4 122.1 L161.9 124.4 L162.6 125.9 L163.3 126.1 L163.8 126.4 L164.4 126.5 L165.0 126.4 L165.5 127.0 L166.0 127.3 L166.5 124.4 L167.0 115.4 L167.6 103.3 L168.3 93.9 L168.8 90.6 L169.3 89.2 L169.9 88.6 L170.5 87.6 L171.1 86.3 L171.7 85.0 L172.3 83.7 L172.9 82.3 L173.5 81.1 L174.1 79.9 L174.7 78.6 L175.3 77.2 L175.8 75.9 L176.5 73.6 L177.1 71.1 L177.6 69.0 L178.2 68.3 L178.8 70.0 L179.5 73.6 L180.1 78.0 L180.6 81.8 L181.2 86.3 L181.7 90.6 L182.3 94.0 L182.8 95.3 L183.4 95.9 L184.0 96.1 L184.5 96.8 L185.1 98.4 L185.7 102.5 L186.4 107.9 L187.0 113.4 L187.5 117.9 L188.2 121.9 L188.9 124.8 L189.5 126.8 L190.2 128.2 L190.8 128.5 L191.4 128.8 L191.9 128.9 L192.5 128.8 L193.0 129.6 L193.5 130.2 L194.0 126.8 L194.6 115.9 L195.2 101.1 L195.8 89.5 L196.3 85.4 L196.9 83.5 L197.4 82.6 L198.0 81.6 L198.6 80.5 L199.2 79.8 L199.8 79.1 L200.5 77.8 L201.0 76.2 L201.6 74.2 L202.2 72.0 L202.8 69.9 L203.4 67.8 L204.0 65.0 L204.6 62.0 L205.2 59.6 L205.7 58.7 L206.4 60.6 L207.0 64.7 L207.6 69.3 L208.2 73.0 L208.7 77.2 L209.2 81.3 L209.8 84.6 L210.4 86.3 L210.9 87.3 L211.5 88.1 L212.1 89.3 L212.6 91.5 L213.2 96.1 L213.9 102.1 L214.5 108.3 L215.1 113.2 L215.8 117.7 L216.4 120.9 L217.0 123.2 L217.7 124.7 L218.4 124.9 L218.9 125.2 L219.5 125.3 L220.0 125.2 L220.5 125.9 L221.0 126.4 L221.5 123.2 L222.1 113.0 L222.7 99.2 L223.3 88.6 L223.8 85.1 L224.4 83.9 L225.0 83.5 L225.5 82.6 L226.1 80.9 L226.7 79.1 L227.4 77.3 L228.0 75.4 L228.6 74.1 L229.2 72.7 L229.8 71.3 L230.4 69.9 L230.9 68.4 L231.5 66.0 L232.1 63.1 L232.7 60.8 L233.2 59.9 L233.9 61.4 L234.5 64.9 L235.2 69.2 L235.7 73.2 L236.2 77.9 L236.8 82.5 L237.4 85.8 L237.9 86.8 L238.4 86.8 L239.0 86.4 L239.6 86.5 L240.1 87.8 L240.8 91.7 L241.4 97.2 L242.0 103.0 L242.6 107.5 L243.3 111.5 L243.9 114.1 L244.5 116.0 L245.2 117.4 L245.9 117.7 L246.4 118.0 L247.0 118.1 L247.6 118.0 L248.1 118.4 L248.5 118.6 L249.1 116.0 L249.6 108.2 L250.2 97.6 L250.9 89.4 L251.4 86.7 L251.9 85.7 L252.5 85.3 L253.1 84.6 L253.7 83.2 L254.3 81.8 L254.9 80.4 L255.5 79.0 L256.1 77.9 L256.7 76.9 L257.3 75.8 L257.9 74.8 L258.4 73.6 L259.1 71.7 L259.7 69.5 L260.2 67.7 L260.8 67.0 L261.4 68.2 L262.0 71.0 L262.7 74.2 L263.2 77.0 L263.7 80.2 L264.3 83.3 L264.9 85.7 L265.4 86.7 L266.0 87.1 L266.5 87.4 L267.1 87.9 L267.7 89.2 L268.3 92.3 L268.9 96.4 L269.6 100.6 L270.1 103.9 L270.8 106.7 L271.5 108.6 L272.1 110.0 L272.8 111.2 L273.4 111.7 L274.0 112.0 L274.5 112.1 L275.1 112.0 L275.6 112.1 L276.1 112.0 L276.6 110.0 L277.2 104.4 L277.8 96.9 L278.4 90.9 L278.9 88.4 L279.4 86.9 L280.0 85.9 L280.6 85.1 L281.2 84.8 L281.8 85.0 L282.4 85.3 L283.1 85.0 L283.6 84.2 L284.2 83.1 L284.8 81.8 L285.4 80.5 L286.0 79.3 L286.6 77.7 L287.2 76.0 L287.8 74.7 L288.3 74.4 L289.0 76.0 L289.6 79.1 L290.2 82.7 L290.7 85.9 L291.3 89.6 L291.8 93.3 L292.4 96.2 L292.9 97.5 L293.5 98.2 L294.1 98.8 L294.6 99.6 L295.2 101.2 L295.8 104.6 L296.5 109.0 L297.1 113.4 L297.7 117.0 L298.4 120.3 L299.0 122.7 L299.6 124.4 L300.3 125.7 L301.0 126.1 L301.5 126.4 L302.1 126.5 L302.6 126.4 L303.1 127.0 L303.6 127.4 L304.1 124.4 L304.7 115.1 L305.3 102.4 L305.9 92.6 L306.4 89.1 L307.0 87.6 L307.5 87.0 L308.1 86.1 L308.7 85.0 L309.3 84.1 L309.9 83.2 L310.6 81.9 L311.2 80.6 L311.8 79.0 L312.4 77.3 L312.9 75.5 L313.5 73.9 L314.1 71.5 L314.7 68.8 L315.3 66.7 L315.8 66.0 L316.5 67.7 L317.1 71.3 L317.8 75.7 L318.3 79.5 L318.8 83.9 L319.4 88.2 L320.0 91.5 L320.5 92.8 L321.0 93.1 L321.6 93.2 L322.2 93.8 L322.7 95.4 L323.4 99.5 L324.0 105.2 L324.6 110.9 L325.2 115.5 L325.9 119.6 L326.5 122.4 L327.1 124.4 L327.8 125.8 L328.5 126.1 L329.0 126.4 L329.6 126.5 L330.1 126.4 L330.7 127.0 L331.1 127.4 L331.7 124.4 L332.2 114.8 L332.8 101.8 L333.4 91.8 L334.0 88.7 L334.5 87.7 L335.1 87.5 L335.7 86.7 L336.2 84.9 L336.8 82.9 L337.5 81.0 L338.1 79.1 L338.7 77.8 L339.3 76.5 L339.9 75.3 L340.5 74.1 L341.0 72.7 L341.7 70.4 L342.3 67.7 L342.8 65.5 L343.4 64.7 L344.0 66.4 L344.6 70.2 L345.3 74.8 L345.8 79.0 L346.3 84.0 L346.9 88.9 L347.5 92.6 L348.0 94.2 L348.6 94.9 L349.1 95.2 L349.7 95.9 L350.2 97.6 L350.9 101.5 L351.5 106.7 L352.1 111.9 L352.7 116.3 L353.4 120.4 L354.1 123.4 L354.6 125.6 L355.4 127.0 L356.0 127.3 L356.6 127.6 L357.1 127.7 L357.7 127.6 L358.2 128.2 L358.7 128.6 L359.2 125.6 L359.8 116.2 L360.3 103.5 L361.0 93.7 L361.5 90.1 L362.0 88.5 L362.6 87.8 L363.2 87.0 L363.8 86.1 L364.4 85.6 L365.0 85.0 L365.7 83.9 L366.2 82.4 L366.8 80.6 L367.4 78.7 L368.0 76.7 L368.5 74.9 L369.2 72.4 L369.8 69.8 L370.3 67.7 L370.9 67.0 L371.6 68.7 L372.2 72.4 L372.8 76.9 L373.3 80.9 L373.9 85.6 L374.4 90.1 L375.0 93.6 L375.5 95.1 L376.1 95.7 L376.7 96.0 L377.2 96.6 L377.8 98.3 L378.4 102.4 L379.1 107.7 L379.7 113.2 L380.3 117.7 L381.0 121.8 L381.6 124.7 L382.2 126.8 L382.9 128.2 L383.6 128.5 L384.1 128.8 L384.7 128.9 L385.2 128.8 L385.7 129.5 L386.2 129.9 L386.7 126.8 L387.3 117.0 L387.9 103.7 L388.5 93.2 L389.0 89.3 L389.6 87.4 L390.1 86.5 L390.7 85.4 L391.3 84.1 L391.9 83.2 L392.5 82.2 L393.2 81.0 L393.7 79.7 L394.3 78.3 L394.9 76.7 L395.5 75.1 L396.1 73.5 L396.7 71.0 L397.3 68.2 L397.9 66.0 L398.4 65.2 L399.1 67.0 L399.7 70.9 L400.3 75.4 L400.9 79.2 L401.4 83.7 L402.0 88.0 L402.5 91.3 L403.1 92.7 L403.6 93.3 L404.2 93.6 L404.8 94.4 L405.3 96.2 L406.0 100.6 L406.6 106.5 L407.2 112.5 L407.8 117.4 L408.5 121.7 L409.1 124.7 L409.7 126.8 L410.4 128.2 L411.1 128.5 L411.6 128.8 L412.2 128.9 L412.7 128.8 L413.2 129.5 L413.7 129.9 L414.2 126.8 L414.8 116.9 L415.4 103.5 L416.0 93.2 L416.6 89.9 L417.1 88.9 L417.7 88.8 L418.2 88.0 L418.8 86.4 L419.4 84.7 L420.1 82.9 L420.7 81.1 L421.3 79.6 L421.9 78.1 L422.5 76.6 L423.1 75.0 L423.6 73.5 L424.2 71.0 L424.8 68.2 L425.4 66.0 L426.0 65.2 L426.6 66.9 L427.2 70.7 L427.9 75.1 L428.4 78.8 L428.9 83.2 L429.5 87.4 L430.1 90.7 L430.6 92.2 L431.2 92.8 L431.7 93.2 L432.3 94.0 L432.8 95.8 L433.5 100.0 L434.1 105.6 L434.7 111.3 L435.3 115.9 L436.0 120.0 L436.7 122.9 L437.2 125.0 L437.9 126.4 L438.6 126.7 L439.1 127.0 L439.7 127.1 L440.3 127.0 L440.8 127.4 L441.3 127.4 L441.8 125.0 L442.3 117.6 L442.9 107.7 L443.6 100.1 L444.1 97.7 L444.6 96.9 L445.2 96.7 L445.8 96.1 L446.4 95.0 L447.0 93.9 L447.6 92.7 L448.2 91.4 L448.8 90.3 L449.4 89.0 L450.0 87.8 L450.6 86.5 L451.1 85.2 L451.8 83.3 L452.4 81.0 L452.9 79.3 L453.5 79.0 L454.1 81.2 L454.8 85.4 L455.4 90.4 L455.9 94.9 L456.5 100.2 L457.0 105.3 L457.6 109.2 L458.1 110.7 L458.7 111.1 L459.3 111.2 L459.8 111.8 L460.4 113.7 L461.0 118.6 L461.7 125.2 L462.3 132.1 L462.8 137.5 L463.5 142.5 L464.2 145.9 L464.8 148.4 L465.5 149.9 L466.1 150.1 L466.7 150.4 L467.2 150.5 L467.8 150.4 L468.3 151.1 L468.8 151.6 L469.3 148.4 L469.9 138.3 L470.5 124.7 L471.1 113.9 L471.6 110.0 L472.2 108.1 L472.7 107.1 L473.3 105.9 L473.9 104.4 L474.5 103.2 L475.1 102.0 L475.8 100.6 L476.3 99.3 L476.9 98.0 L477.5 96.7 L478.1 95.3 L478.7 93.8 L479.3 91.3 L479.9 88.5 L480.5 86.1 L481.0 85.3 L481.7 87.1 L482.3 91.0 L482.9 95.4 L483.5 99.1 L484.0 103.3 L484.5 107.4 L485.1 110.7 L485.7 112.1 L486.2 112.7 L486.8 113.1 L487.4 114.0 L487.9 115.9 L488.5 120.3 L489.2 126.2 L489.8 132.2 L490.4 137.0 L491.1 141.3 L491.7 144.3 L492.3 146.4 L493.0 147.8 L493.7 148.1 L494.2 148.4 L494.8 148.5 L495.3 148.4 L495.8 148.9 L496.3 149.2 L496.8 146.4 L497.4 137.7 L498.0 126.0 L498.6 117.0 L499.1 114.1 L499.7 113.2 L500.3 112.9 L500.8 112.3 L501.4 111.0 L502.0 109.8 L502.7 108.5 L503.3 107.0 L503.9 105.6 L504.5 104.2 L505.1 102.7 L505.7 101.2 L506.2 99.7 L506.8 97.5 L507.4 95.0 L508.0 93.1 L508.5 92.4 L509.2 94.1 L509.8 97.6 L510.5 101.6 L511.0 104.8 L511.5 108.4 L512.1 112.0 L512.7 114.9 L513.2 116.4 L513.7 117.2 L514.3 118.0 L514.9 119.0 L515.4 120.9 L516.1 124.9 L516.7 130.0 L517.3 135.2 L517.9 139.4 L518.6 143.2 L519.2 145.8 L519.8 147.7 L520.5 149.1 L521.2 149.4 L521.7 149.7 L522.3 149.8 L522.9 149.7 L523.4 150.4 L523.8 150.8 L524.4 147.7 L524.9 137.9 L525.5 124.5 L526.2 113.9 L526.7 109.9 L527.2 107.7 L527.8 106.5 L528.4 105.4 L529.0 104.4 L529.6 104.0 L530.2 103.6 L530.8 102.7 L531.4 101.3 L532.0 99.7 L532.6 97.8 L533.2 95.9 L533.7 94.1 L534.4 91.6 L535.0 88.8 L535.5 86.6 L536.1 85.8 L536.7 87.5 L537.3 91.2 L538.0 95.6 L538.5 99.4 L539.0 103.7 L539.6 107.9 L540.2 111.4 L540.7 113.1 L541.3 114.1 L541.8 114.9 L542.4 116.0 L543.0 117.9 L543.6 121.9 L544.2 126.9 L544.9 132.0 L545.4 136.1 L546.1 140.1 L546.8 143.1 L547.4 145.2 L548.1 146.6 L548.7 146.9 L549.3 147.2 L549.8 147.3 L550.4 147.2 L550.9 147.7 L551.4 148.0 L551.9 145.2 L552.5 136.6 L553.1 124.9 L553.7 115.7 L554.2 112.2 L554.7 110.3 L555.3 109.4 L555.9 108.5 L556.5 107.9 L557.1 107.8 L557.7 107.7 L558.4 106.9 L558.9 105.6 L559.5 103.9 L560.1 102.0 L560.7 100.0 L561.3 98.2 L561.9 95.9 L562.5 93.5 L563.1 91.6 L563.6 90.9 L564.3 92.4 L564.9 95.7 L565.5 99.5 L566.0 102.6 L566.6 106.1 L567.1 109.5 L567.7 112.4 L568.2 114.1 L568.8 115.4 L569.4 116.5 L569.9 117.8 L570.5 119.7 L571.1 123.1 L571.8 127.3 L572.4 131.5 L573.0 134.9 L573.7 138.3 L574.3 140.8 L574.9 142.6 L575.6 143.9 L576.3 144.3 L576.8 144.6 L577.4 144.7 L577.9 144.6 L578.4 145.1 L578.9 145.3 L579.4 142.6 L580.0 134.4 L580.6 123.4 L581.2 114.9 L581.7 112.0 L582.3 110.9 L582.8 110.5 L583.4 109.6 L584.0 108.1 L584.6 106.6 L585.2 105.0 L585.9 103.6 L586.5 102.5 L587.1 101.5 L587.7 100.6 L588.2 99.6 L588.8 98.5 L589.4 96.5 L590.0 94.1 L590.6 92.2 L591.1 91.6 L591.8 93.3 L592.4 96.7 L593.1 101.0 L593.6 105.0 L594.1 109.7 L594.7 114.2 L595.3 117.5 L595.8 118.7 L596.3 118.7 L596.9 118.5 L597.5 118.7 L598.0 120.1 L598.7 124.1 L599.3 129.6 L599.9 135.3 L600.5 139.8 L601.2 143.8 L601.8 146.5 L602.4 148.4 L603.1 149.8 L603.8 150.1 L604.3 150.4 L604.9 150.5 L605.4 150.4 L606.0 151.1 L606.4 151.6 L607.0 148.4 L607.5 138.1 L608.1 124.1 L608.7 113.2 L609.3 109.3 L609.8 107.4 L610.4 106.5 L611.0 105.4 L611.5 103.9 L612.1 102.6 L612.8 101.3 L613.4 99.9 L614.0 98.5 L614.6 97.2 L615.2 95.7 L615.8 94.2 L616.3 92.6 L617.0 90.1 L617.6 87.2 L618.1 84.8 L618.7 84.0 L619.3 85.8 L619.9 89.7 L620.6 94.5 L621.1 98.9 L621.6 104.2 L622.2 109.3 L622.8 112.9 L623.3 114.1 L623.9 114.0 L624.4 113.6 L625.0 113.7 L625.5 115.2 L626.2 119.7 L626.8 126.1 L627.4 132.6 L628.0 137.9 L628.7 142.4 L629.4 145.5 L629.9 147.7 L630.7 149.1 L631.3 149.4 L631.9 149.7 L632.4 149.8 L633.0 149.7 L633.5 150.2 L634.0 150.4 L634.5 147.7 L635.1 139.3 L635.6 128.0 L636.3 119.3 L636.8 116.4 L637.3 115.3 L637.9 115.0 L638.5 114.3 L639.1 113.0 L639.7 111.8 L640.3 110.5 L641.0 109.1 L641.5 107.9 L642.1 106.6 L642.7 105.2 L643.3 103.8 L643.8 102.5 L644.5 100.4 L645.1 98.0 L645.6 96.1 L646.2 95.4 L646.9 96.8 L647.5 99.9 L648.1 103.7 L648.6 107.1 L649.2 111.1 L649.7 115.0 L650.3 117.9 L650.8 118.9 L651.4 119.0 L652.0 118.9 L652.5 119.2 L653.1 120.5 L653.7 124.0 L654.4 128.9 L655.0 133.9 L655.6 137.9 L656.3 141.3 L656.9 143.5 L657.5 145.2 L658.2 146.5 L658.9 146.9 L659.4 147.2 L660.0 147.3 L660.5 147.2 L661.0 147.8 L661.5 148.1 L662.0 145.2 L662.6 136.1 L663.2 123.8 L663.8 114.0 L664.3 110.1 L664.9 108.0 L665.4 106.8 L666.0 105.8 L666.6 105.3 L667.2 105.5 L667.8 105.6 L668.5 105.0 L669.0 103.6 L669.6 101.8 L670.2 99.6 L670.8 97.5 L671.4 95.6 L672.0 93.2 L672.6 90.6 L673.2 88.6 L673.7 87.9 L674.4 89.5 L675.0 93.1 L675.6 97.4 L676.2 101.2 L676.7 105.8 L677.3 110.2 L677.8 113.4 L678.4 114.6 L678.9 114.7 L679.5 114.5 L680.1 114.8 L680.6 116.2 L681.3 120.3 L681.9 126.0 L682.5 131.9 L683.1 136.5 L683.8 140.5 L684.4 143.3 L685.0 145.2 L685.7 146.6 L686.4 146.9 L686.9 147.2 L687.5 147.3 L688.0 147.2 L688.5 147.9 L689.0 148.4 L689.5 145.2 L690.1 134.9 L690.7 121.0 L691.3 110.4 L691.9 107.0 L692.4 105.9 L693.0 105.7 L693.5 105.1 L694.1 104.0 L694.7 103.0 L695.4 101.8 L696.0 100.2 L696.6 98.5 L697.2 96.5 L697.8 94.3 L698.4 92.1 L698.9 90.0 L699.5 87.3 L700.1 84.4 L700.7 82.2 L701.2 81.5 L701.9 83.5 L702.5 87.7 L703.2 92.5 L703.7 96.6 L704.2 101.2 L704.8 105.7 L705.4 109.2 L705.9 110.6 L706.5 111.0 L707.0 111.3 L707.6 112.0 L708.1 114.0 L708.8 119.0 L709.4 125.7 L710.0 132.5 L710.6 138.0 L711.3 142.8 L712.0 146.1 L712.5 148.4 L713.2 149.9 L713.9 150.1 L714.4 150.4 L715.0 150.5 L715.6 150.4 L716.1 151.3 L716.6 151.9 L717.1 148.4 L717.6 137.0 L718.2 121.5 L718.9 109.5 L719.4 105.3 L719.9 103.7 L720.5 103.0 L721.1 101.9 L721.7 100.1 L722.3 98.4 L722.9 96.7 L723.5 94.9 L724.1 93.3 L724.7 91.8 L725.3 90.2 L725.9 88.5 L726.4 86.8 L727.1 84.0 L727.7 80.8 L728.2 78.2 L728.8 77.3 L729.4 79.3 L730.1 83.7 L730.7 89.0 L731.2 93.8 L731.8 99.4 L732.3 104.8 L732.9 108.9 L733.4 110.6 L734.0 111.0 L734.6 111.2 L735.1 111.8 L735.7 113.7 L736.3 118.6 L737.0 125.1 L737.6 131.8 L738.1 137.2 L738.8 142.2 L739.5 145.8 L740.1 148.4 L740.8 149.9 L741.4 150.1 L742.0 150.4 L742.5 150.5 L743.1 150.4 L743.6 151.2 L744.1 151.7 L744.6 148.4 L745.2 137.7 L745.8 123.1 L746.4 111.8 L746.9 108.0 L747.5 106.5 L748.0 106.0 L748.6 105.1 L749.2 103.7 L749.8 102.5 L750.4 101.3 L751.1 99.7 L751.6 98.1 L752.2 96.3 L752.8 94.3 L753.4 92.3 L754.0 90.5 L754.6 87.7 L755.2 84.7 L755.8 82.4 L756.3 81.5 L757.0 83.3 L757.6 87.3 L758.2 92.2 L758.8 96.6 L759.3 101.8 L759.8 106.8 L760.4 110.7 L761.0 112.4 L761.5 113.1 L762.1 113.6 L762.7 114.4 L763.2 116.2 L763.8 120.5 L764.5 126.0 L765.1 131.7 L765.7 136.4 L766.4 140.8 L767.0 144.0 L767.6 146.4 L768.3 147.9 L769.0 148.1 L769.5 148.4 L770.1 148.5 L770.6 148.4 L771.1 149.1 L771.6 149.5 L772.1 146.4 L772.7 136.4 L773.3 122.8 L773.9 112.3 L774.4 108.7 L775.0 107.2 L775.6 106.5 L776.1 105.7 L776.7 104.5 L777.3 103.5 L778.0 102.5 L778.6 101.1 L779.2 99.6 L779.8 97.9 L780.4 96.0 L781.0 94.2 L781.5 92.4 L782.1 89.8 L782.7 87.0 L783.3 84.8 L783.8 84.0 L784.5 85.8 L785.1 89.6 L785.8 94.1 L786.3 97.9 L786.8 102.3 L787.4 106.6 L788.0 109.9 L788.5 111.2 L789.0 111.6 L789.6 111.7 L790.2 112.3 L790.7 114.1 L791.4 118.6 L792.0 124.7 L792.6 130.9 L793.2 135.8 L793.9 140.1 L794.5 143.1 L795.1 145.2 L795.8 146.6 L796.5 146.9 L797.0 147.2 L797.6 147.3 L798.2 147.2 L798.7 147.8 L799.1 148.1 L799.7 145.2 L800.2 136.1 L800.8 123.8 L801.5 114.0 L802.0 110.2 L802.5 108.0 L803.1 106.8 L803.7 105.8 L804.3 105.3 L804.9 105.4 L805.5 105.4 L806.1 104.7 L806.7 103.4 L807.3 101.6 L807.9 99.5 L808.5 97.5 L809.0 95.6 L809.7 93.2 L810.3 90.6 L810.8 88.6 L811.4 87.9 L812.0 89.6 L812.6 93.1 L813.3 97.2 L813.8 100.5 L814.3 104.4 L814.9 108.1 L815.5 111.1 L816.0 112.5 L816.6 113.3 L817.1 113.8 L817.7 114.8 L818.3 116.6 L818.9 120.6 L819.5 125.9 L820.2 131.2 L820.7 135.5 L821.4 139.3 L822.1 142.0 L822.7 143.9 L823.4 145.3 L824.0 145.6 L824.6 145.9 L825.1 146.0 L825.7 145.9 L826.2 146.5 L826.7 146.9 L827.2 143.9 L827.8 134.6 L828.4 121.9 L829.0 112.0 L829.5 108.3 L830.0 106.5 L830.6 105.5 L831.2 104.6 L831.8 103.6 L832.4 103.1 L833.0 102.6 L833.7 101.5 L834.2 100.2 L834.8 98.6 L835.4 96.7 L836.0 94.9 L836.6 93.2 L837.2 90.7 L837.8 88.1 L838.4 86.0 L838.9 85.3 L839.6 87.2 L840.2 91.1 L840.8 95.7 L841.3 99.8 L841.9 104.5 L842.4 109.1 L843.0 112.8 L843.5 114.5 L844.1 115.5 L844.7 116.3 L845.2 117.3 L845.8 119.3 L846.4 123.5 L847.1 128.8 L847.7 134.2 L848.3 138.7 L849.0 142.9 L849.6 146.1 L850.2 148.4 L850.9 149.8 L851.6 150.1 L852.1 150.4 L852.7 150.5 L853.2 150.4 L853.7 151.1 L854.2 151.6 L854.7 148.4 L855.3 138.1 L855.9 124.1 L856.5 113.2 L857.0 109.3 L857.6 107.5 L858.1 106.7 L858.7 105.7 L859.3 104.3 L859.9 103.2 L860.5 102.1 L861.2 100.7 L861.8 99.3 L862.4 97.7 L863.0 96.1 L863.5 94.3 L864.1 92.6 L864.7 90.1 L865.3 87.2 L865.9 84.9 L866.4 84.0 L867.1 85.5 L867.7 88.9 L868.4 93.1 L868.9 96.7 L869.4 101.0 L870.0 105.2 L870.6 108.5 L871.1 109.9 L871.6 110.6 L872.2 111.0 L872.8 111.8 L873.3 113.4 L874.0 117.0 L874.6 121.8 L875.2 126.6 L875.8 130.6 L876.5 134.2 L877.1 136.9 L877.7 138.8 L878.4 140.1 L879.1 140.5 L879.6 140.8 L880.2 140.9 L880.7 140.8 L881.3 141.5 L881.7 141.9 L882.3 138.8 L882.8 129.0 L883.4 115.7 L884.0 105.5 L884.6 102.3 L885.1 101.3 L885.7 101.1 L886.3 100.3 L886.8 98.7 L887.4 97.0 L888.1 95.2 L888.7 93.4 L889.3 92.0 L889.9 90.5 L890.5 89.0 L891.1 87.5 L891.6 86.0 L892.3 83.6 L892.9 81.0 L893.4 78.8 L894.0 77.8 L894.6 78.9 L895.2 81.7 L895.9 85.3 L896.4 88.5 L896.9 92.3 L897.5 96.0 L898.1 98.9 L898.6 100.2 L899.2 100.8 L899.7 101.2 L900.3 101.8 L900.8 103.0 L901.5 105.8 L902.1 109.4 L902.7 113.0 L903.3 116.0 L904.0 118.8 L904.7 120.9 L905.2 122.4 L906.0 123.6 L906.6 124.1 L907.2 124.4 L907.7 124.5 L908.3 124.4 L908.8 124.7 L909.3 124.8 L909.8 122.4" fill="none" stroke="#e2733a" stroke-width="2.1" stroke-linejoin="round" stroke-linecap="round"/><path d="M2.4 83.7 L2.9 82.8 L3.6 81.7 L4.2 80.8 L4.7 80.4 L5.3 80.3 L5.8 80.4 L6.3 81.3 L6.8 83.4 L7.4 88.6 L8.0 95.5 L8.6 102.7 L9.2 110.3 L9.7 118.0 L10.2 124.0 L11.0 128.1 L11.6 129.6 L12.3 130.2 L13.0 130.0 L13.7 130.2 L14.4 129.6 L15.0 128.4 L15.6 124.4 L16.1 119.5 L16.6 113.1 L17.2 106.5 L17.7 100.9 L18.3 95.2 L19.0 90.5 L19.6 87.0 L20.2 84.6 L20.9 83.4 L21.5 83.0 L22.1 83.4 L22.7 84.5 L23.4 85.8 L24.0 86.8 L24.5 87.5 L25.1 88.2 L25.7 88.9 L26.2 89.4 L26.8 89.6 L27.3 89.6 L27.9 89.4 L28.4 89.1 L29.0 88.6 L29.5 88.2 L30.1 87.6 L30.7 86.7 L31.2 85.9 L31.8 85.3 L32.3 85.0 L32.8 85.0 L33.4 85.2 L33.9 86.1 L34.3 88.0 L35.0 92.6 L35.5 98.8 L36.1 105.2 L36.7 112.1 L37.3 119.1 L37.8 124.6 L38.5 128.3 L39.2 129.6 L39.8 130.1 L40.5 130.0 L41.2 130.1 L41.9 129.6 L42.5 128.6 L43.1 125.0 L43.6 120.6 L44.1 114.9 L44.7 109.0 L45.2 104.0 L45.9 99.0 L46.5 95.1 L47.1 92.0 L47.8 89.8 L48.4 88.5 L49.1 88.0 L49.6 88.3 L50.3 89.1 L50.9 90.1 L51.5 90.8 L52.1 90.9 L52.6 90.9 L53.2 90.9 L53.7 90.8 L54.3 90.9 L54.8 91.2 L55.4 91.7 L55.9 92.2 L56.5 92.6 L57.0 92.8 L57.6 92.6 L58.2 92.1 L58.7 91.5 L59.3 91.1 L59.8 91.0 L60.4 91.1 L60.9 91.2 L61.4 92.1 L61.9 94.0 L62.5 98.9 L63.1 105.5 L63.7 112.4 L64.2 119.6 L64.8 127.0 L65.3 132.8 L66.0 136.7 L66.7 138.1 L67.4 138.7 L68.1 138.5 L68.8 138.7 L69.4 138.1 L70.0 136.7 L70.7 131.8 L71.1 126.2 L71.7 118.6 L72.2 110.8 L72.7 104.1 L73.4 97.1 L74.0 91.3 L74.7 87.0 L75.3 84.5 L75.9 83.4 L76.6 83.0 L77.2 82.9 L77.8 83.1 L78.4 83.6 L79.1 84.4 L79.6 85.4 L80.2 86.8 L80.7 88.3 L81.3 89.6 L81.8 90.7 L82.4 91.3 L82.9 91.7 L83.5 91.9 L84.0 92.0 L84.6 92.1 L85.1 92.0 L85.7 91.6 L86.3 91.3 L86.8 91.0 L87.3 91.0 L87.9 91.1 L88.4 91.3 L88.9 92.1 L89.4 94.0 L90.0 98.9 L90.6 105.5 L91.2 112.4 L91.8 119.6 L92.3 127.0 L92.8 132.8 L93.5 136.7 L94.2 138.1 L94.9 138.7 L95.6 138.5 L96.3 138.6 L97.0 138.1 L97.5 137.0 L98.2 133.2 L98.7 128.6 L99.2 122.5 L99.7 116.2 L100.3 110.9 L100.9 105.6 L101.6 101.3 L102.2 98.0 L102.8 95.8 L103.4 94.6 L104.1 94.0 L104.7 94.0 L105.3 94.4 L106.0 95.1 L106.6 95.7 L107.1 96.2 L107.7 96.8 L108.2 97.4 L108.8 97.9 L109.4 98.2 L109.9 98.4 L110.5 98.4 L111.0 98.3 L111.6 98.1 L112.1 97.9 L112.7 97.5 L113.2 97.0 L113.8 96.5 L114.4 96.1 L114.9 96.0 L115.4 96.0 L116.0 96.2 L116.4 97.1 L116.9 99.0 L117.5 103.9 L118.1 110.5 L118.7 117.3 L119.3 124.5 L119.8 131.9 L120.4 137.6 L121.1 141.5 L121.7 142.9 L122.4 143.5 L123.1 143.3 L123.8 143.5 L124.5 142.9 L125.1 141.5 L125.7 136.6 L126.2 130.9 L126.7 123.4 L127.3 115.5 L127.8 108.8 L128.5 101.8 L129.1 96.0 L129.7 91.7 L130.3 89.2 L131.0 88.2 L131.7 87.7 L132.2 87.6 L132.8 87.9 L133.5 88.4 L134.1 89.0 L134.7 89.5 L135.2 90.1 L135.8 90.8 L136.3 91.6 L136.9 92.5 L137.4 93.5 L138.0 94.8 L138.5 96.0 L139.1 97.1 L139.6 97.6 L140.2 97.5 L140.8 96.9 L141.3 96.0 L141.9 95.3 L142.4 95.0 L143.0 95.0 L143.5 95.2 L144.0 96.1 L144.5 98.0 L145.1 102.7 L145.7 109.1 L146.2 115.7 L146.8 122.7 L147.4 129.9 L147.9 135.5 L148.6 139.3 L149.3 140.6 L150.0 141.1 L150.6 141.0 L151.3 141.3 L152.0 140.6 L152.6 139.0 L153.3 133.7 L153.7 127.5 L154.3 119.3 L154.8 110.8 L155.3 103.4 L156.0 95.7 L156.6 89.2 L157.3 84.4 L157.9 81.7 L158.5 80.7 L159.2 80.4 L159.8 80.5 L160.4 81.1 L161.0 82.0 L161.7 82.9 L162.2 83.8 L162.7 84.9 L163.3 86.1 L163.9 87.2 L164.4 88.3 L165.0 89.4 L165.5 90.5 L166.1 91.5 L166.6 92.3 L167.2 92.7 L167.7 92.5 L168.3 91.9 L168.9 91.0 L169.4 90.3 L169.9 90.0 L170.5 90.0 L171.0 90.1 L171.5 91.0 L172.0 93.0 L172.6 98.2 L173.2 105.2 L173.8 112.4 L174.3 119.9 L174.9 127.7 L175.4 133.7 L176.1 137.8 L176.8 139.3 L177.5 139.9 L178.2 139.7 L178.9 139.9 L179.6 139.3 L180.1 138.0 L180.8 133.6 L181.3 128.4 L181.8 121.5 L182.3 114.4 L182.9 108.3 L183.5 102.0 L184.1 96.9 L184.8 93.0 L185.4 90.6 L186.0 89.5 L186.7 89.0 L187.3 88.9 L187.9 89.2 L188.5 89.7 L189.2 90.2 L189.7 90.5 L190.3 90.9 L190.8 91.2 L191.4 91.6 L191.9 91.8 L192.5 92.0 L193.0 92.1 L193.6 92.1 L194.1 92.0 L194.7 91.8 L195.3 91.4 L195.8 90.6 L196.4 89.9 L196.9 89.2 L197.5 89.0 L198.0 88.9 L198.5 88.9 L199.0 89.8 L199.5 92.0 L200.1 97.8 L200.7 105.8 L201.3 114.0 L201.9 122.4 L202.4 131.1 L203.0 137.8 L203.7 142.4 L204.3 144.1 L205.0 144.7 L205.7 144.5 L206.4 144.7 L207.1 144.1 L207.7 142.8 L208.3 138.3 L208.8 132.9 L209.3 125.9 L209.9 118.5 L210.4 112.3 L211.0 105.8 L211.7 100.5 L212.3 96.5 L212.9 94.0 L213.6 92.9 L214.2 92.5 L214.8 92.8 L215.4 93.6 L216.1 94.6 L216.7 95.5 L217.3 96.0 L217.8 96.5 L218.4 97.0 L218.9 97.4 L219.5 97.7 L220.0 97.8 L220.6 97.8 L221.1 97.8 L221.7 97.6 L222.2 97.4 L222.8 96.9 L223.4 96.3 L223.9 95.7 L224.5 95.2 L225.0 95.0 L225.6 95.0 L226.1 95.1 L226.6 96.0 L227.0 98.0 L227.7 103.1 L228.3 110.1 L228.8 117.3 L229.4 124.8 L230.0 132.6 L230.5 138.6 L231.2 142.6 L231.9 144.1 L232.6 144.7 L233.2 144.5 L233.9 144.7 L234.6 144.1 L235.2 142.9 L235.9 138.6 L236.3 133.5 L236.8 126.8 L237.4 119.7 L237.9 113.8 L238.6 107.7 L239.2 102.8 L239.8 99.0 L240.5 96.6 L241.1 95.5 L241.8 95.0 L242.3 95.0 L243.0 95.3 L243.6 96.1 L244.3 97.1 L244.8 98.3 L245.3 100.0 L245.9 101.7 L246.4 103.3 L247.0 104.4 L247.6 104.9 L248.1 105.2 L248.7 105.2 L249.2 105.0 L249.8 104.8 L250.3 104.3 L250.9 103.6 L251.5 102.8 L252.0 102.2 L252.5 102.0 L253.1 102.0 L253.6 102.4 L254.1 103.2 L254.6 105.0 L255.2 109.2 L255.8 114.8 L256.4 120.6 L256.9 126.8 L257.5 133.3 L258.0 138.3 L258.7 141.7 L259.4 142.9 L260.1 143.4 L260.8 143.3 L261.5 143.5 L262.1 142.9 L262.7 141.7 L263.4 137.5 L263.8 132.6 L264.4 126.0 L264.9 119.1 L265.5 113.4 L266.1 107.5 L266.7 102.7 L267.4 99.0 L268.0 96.7 L268.6 95.5 L269.3 95.0 L269.9 95.3 L270.5 96.1 L271.1 97.1 L271.8 97.7 L272.3 97.9 L272.9 98.0 L273.4 98.0 L274.0 97.9 L274.5 97.8 L275.1 97.8 L275.6 97.8 L276.2 97.8 L276.7 97.7 L277.3 97.5 L277.8 97.0 L278.4 96.4 L279.0 95.7 L279.5 95.2 L280.0 95.0 L280.6 95.0 L281.1 95.1 L281.6 96.0 L282.1 98.0 L282.7 103.1 L283.3 110.1 L283.9 117.3 L284.5 124.8 L285.0 132.6 L285.5 138.6 L286.3 142.6 L286.9 144.1 L287.6 144.7 L288.3 144.5 L289.0 144.7 L289.7 144.1 L290.3 142.7 L290.9 137.8 L291.4 132.0 L291.9 124.4 L292.5 116.5 L293.0 109.7 L293.6 102.7 L294.3 96.8 L294.9 92.4 L295.5 89.9 L296.2 88.9 L296.8 88.4 L297.4 88.3 L298.0 88.7 L298.7 89.2 L299.3 89.7 L299.8 89.9 L300.4 90.3 L301.0 90.6 L301.5 90.8 L302.1 91.0 L302.6 91.0 L303.2 90.9 L303.7 90.8 L304.3 90.6 L304.8 90.3 L305.4 89.9 L306.0 89.4 L306.5 88.9 L307.1 88.5 L307.6 88.4 L308.1 88.4 L308.7 88.5 L309.2 89.3 L309.6 91.4 L310.3 97.0 L310.8 104.7 L311.4 112.5 L312.0 120.7 L312.6 129.1 L313.1 135.6 L313.8 140.0 L314.5 141.6 L315.1 142.2 L315.8 142.0 L316.5 142.3 L317.2 141.6 L317.8 140.0 L318.4 134.8 L318.9 128.6 L319.4 120.4 L320.0 111.9 L320.5 104.6 L321.2 96.8 L321.8 90.4 L322.4 85.6 L323.1 82.9 L323.7 81.9 L324.4 81.6 L324.9 81.7 L325.6 82.3 L326.2 83.2 L326.8 84.4 L327.4 85.5 L327.9 87.0 L328.5 88.5 L329.0 89.9 L329.6 91.0 L330.1 91.8 L330.7 92.4 L331.2 92.8 L331.8 93.0 L332.3 93.1 L332.9 92.9 L333.5 92.5 L334.0 91.9 L334.6 91.4 L335.1 91.3 L335.7 91.3 L336.2 91.5 L336.7 92.3 L337.2 94.3 L337.8 99.3 L338.4 106.1 L339.0 113.1 L339.5 120.4 L340.1 128.0 L340.6 133.9 L341.3 137.9 L342.0 139.3 L342.7 139.9 L343.4 139.7 L344.1 139.9 L344.7 139.3 L345.3 138.0 L346.0 133.7 L346.4 128.6 L347.0 121.9 L347.5 114.8 L348.0 108.9 L348.7 102.8 L349.3 97.8 L350.0 94.0 L350.6 91.7 L351.2 90.5 L351.9 90.0 L352.5 89.9 L353.1 90.3 L353.7 90.9 L354.4 91.5 L354.9 92.3 L355.5 93.2 L356.0 94.2 L356.6 95.0 L357.1 95.5 L357.7 95.4 L358.2 95.1 L358.8 94.5 L359.3 94.0 L359.9 93.5 L360.4 93.2 L361.0 92.9 L361.6 92.6 L362.1 92.4 L362.6 92.5 L363.2 92.6 L363.7 92.8 L364.2 93.6 L364.7 95.5 L365.3 100.4 L365.9 107.1 L366.5 114.0 L367.1 121.2 L367.6 128.7 L368.1 134.5 L368.8 138.4 L369.5 139.8 L370.2 140.4 L370.9 140.2 L371.6 140.4 L372.3 139.8 L372.8 138.5 L373.5 134.1 L374.0 128.8 L374.5 121.9 L375.0 114.6 L375.6 108.5 L376.2 102.1 L376.9 96.9 L377.5 93.0 L378.1 90.5 L378.7 89.4 L379.4 89.0 L380.0 89.4 L380.6 90.5 L381.3 91.7 L381.9 92.4 L382.4 92.6 L383.0 92.5 L383.5 92.2 L384.1 91.9 L384.7 91.6 L385.2 91.3 L385.8 91.0 L386.3 90.7 L386.9 90.4 L387.4 90.1 L388.0 89.8 L388.5 89.4 L389.1 89.1 L389.7 88.9 L390.2 89.0 L390.7 89.1 L391.3 89.2 L391.7 90.0 L392.2 92.0 L392.8 97.3 L393.4 104.4 L394.0 111.8 L394.6 119.5 L395.1 127.5 L395.7 133.6 L396.4 137.8 L397.0 139.3 L397.7 139.9 L398.4 139.7 L399.1 139.9 L399.8 139.3 L400.4 138.1 L401.0 134.0 L401.5 129.2 L402.0 122.8 L402.6 116.1 L403.1 110.4 L403.8 104.7 L404.4 100.1 L405.0 96.5 L405.6 94.2 L406.3 93.1 L407.0 92.5 L407.5 92.5 L408.1 93.0 L408.8 93.5 L409.4 93.8 L410.0 93.8 L410.5 93.6 L411.1 93.4 L411.6 93.1 L412.2 92.8 L412.7 92.4 L413.3 92.0 L413.8 91.4 L414.4 91.0 L414.9 90.6 L415.5 90.3 L416.1 90.1 L416.6 89.9 L417.2 89.9 L417.7 90.0 L418.3 90.1 L418.8 90.3 L419.3 91.1 L419.8 93.0 L420.4 98.0 L421.0 104.8 L421.5 111.8 L422.1 119.2 L422.7 126.8 L423.2 132.7 L423.9 136.7 L424.6 138.1 L425.3 138.7 L426.0 138.5 L426.6 138.7 L427.3 138.1 L427.9 136.8 L428.6 132.5 L429.0 127.4 L429.6 120.6 L430.1 113.5 L430.6 107.4 L431.3 101.3 L431.9 96.2 L432.6 92.4 L433.2 90.0 L433.8 88.8 L434.5 88.4 L435.1 88.7 L435.7 89.5 L436.3 90.5 L437.0 91.1 L437.5 91.3 L438.0 91.3 L438.6 91.2 L439.2 91.1 L439.7 91.1 L440.3 91.3 L440.8 91.5 L441.4 91.8 L441.9 92.0 L442.5 92.0 L443.0 91.5 L443.6 90.8 L444.2 89.9 L444.7 89.3 L445.2 89.0 L445.8 89.0 L446.3 89.1 L446.8 90.0 L447.3 92.0 L447.9 97.1 L448.5 104.1 L449.1 111.2 L449.6 118.7 L450.2 126.5 L450.7 132.5 L451.4 136.5 L452.1 138.0 L452.8 138.6 L453.5 138.4 L454.2 138.6 L454.9 138.0 L455.4 136.8 L456.1 132.6 L456.6 127.7 L457.1 121.2 L457.6 114.4 L458.2 108.6 L458.8 102.8 L459.4 98.0 L460.1 94.4 L460.7 92.1 L461.3 90.9 L462.0 90.4 L462.6 90.5 L463.2 91.2 L463.8 91.9 L464.5 92.5 L465.0 92.7 L465.6 92.9 L466.1 93.0 L466.7 93.1 L467.2 93.1 L467.8 92.9 L468.3 92.7 L468.9 92.4 L469.4 92.1 L470.0 91.8 L470.6 91.4 L471.1 91.0 L471.7 90.6 L472.2 90.4 L472.8 90.4 L473.3 90.5 L473.8 90.7 L474.3 91.5 L474.8 93.4 L475.4 98.2 L476.0 104.7 L476.6 111.4 L477.2 118.4 L477.7 125.8 L478.3 131.4 L479.0 135.2 L479.6 136.6 L480.3 137.1 L481.0 137.0 L481.7 137.2 L482.4 136.6 L483.0 135.3 L483.6 130.6 L484.1 125.2 L484.6 118.0 L485.2 110.5 L485.7 104.1 L486.3 97.5 L487.0 92.1 L487.6 88.0 L488.2 85.5 L488.9 84.3 L489.5 84.0 L490.1 84.4 L490.7 85.5 L491.4 86.6 L492.0 87.3 L492.6 87.4 L493.1 87.3 L493.7 87.0 L494.2 86.7 L494.8 86.5 L495.3 86.4 L495.9 86.4 L496.4 86.4 L497.0 86.3 L497.5 86.1 L498.1 85.7 L498.7 85.2 L499.2 84.6 L499.8 84.1 L500.3 84.0 L500.9 84.0 L501.4 84.1 L501.9 85.0 L502.3 87.0 L503.0 92.3 L503.6 99.4 L504.1 106.7 L504.7 114.4 L505.3 122.3 L505.8 128.4 L506.5 132.6 L507.2 134.1 L507.9 134.7 L508.5 134.5 L509.2 134.7 L509.9 134.1 L510.5 132.9 L511.2 128.6 L511.6 123.6 L512.1 116.9 L512.7 109.9 L513.2 104.0 L513.9 98.0 L514.5 93.0 L515.1 89.3 L515.8 87.0 L516.4 85.8 L517.1 85.3 L517.6 85.3 L518.3 85.7 L518.9 86.2 L519.6 86.6 L520.1 86.8 L520.6 87.1 L521.2 87.3 L521.7 87.4 L522.3 87.6 L522.9 87.8 L523.4 88.0 L524.0 88.2 L524.5 88.3 L525.1 88.2 L525.6 87.7 L526.2 87.0 L526.8 86.2 L527.3 85.6 L527.8 85.3 L528.4 85.3 L528.9 85.5 L529.4 86.3 L529.9 88.3 L530.5 93.3 L531.1 100.0 L531.7 106.9 L532.2 114.2 L532.8 121.7 L533.3 127.5 L534.0 131.5 L534.7 132.9 L535.4 133.5 L536.1 133.3 L536.8 133.5 L537.4 132.9 L538.0 131.7 L538.7 127.5 L539.1 122.6 L539.7 116.1 L540.2 109.3 L540.8 103.5 L541.4 97.7 L542.0 92.9 L542.7 89.3 L543.3 86.9 L543.9 85.7 L544.6 85.3 L545.2 85.7 L545.8 86.7 L546.4 87.9 L547.1 88.8 L547.6 89.2 L548.2 89.6 L548.7 89.8 L549.3 89.9 L549.8 89.8 L550.4 89.4 L550.9 88.7 L551.5 87.9 L552.0 87.1 L552.6 86.5 L553.1 86.1 L553.7 85.7 L554.3 85.4 L554.8 85.2 L555.3 85.3 L555.9 85.4 L556.4 85.6 L556.9 86.5 L557.4 88.3 L558.0 92.9 L558.6 99.1 L559.2 105.5 L559.8 112.3 L560.3 119.4 L560.8 124.8 L561.6 128.5 L562.2 129.8 L562.9 130.3 L563.6 130.2 L564.3 130.3 L565.0 129.8 L565.6 128.7 L566.2 124.8 L566.7 120.2 L567.2 114.1 L567.8 107.7 L568.3 102.4 L568.9 97.0 L569.6 92.6 L570.2 89.3 L570.8 87.0 L571.5 85.7 L572.1 85.3 L572.7 85.8 L573.3 86.9 L574.0 88.2 L574.6 89.1 L575.1 89.3 L575.7 89.4 L576.3 89.3 L576.8 89.2 L577.4 89.0 L577.9 88.8 L578.5 88.6 L579.0 88.3 L579.6 87.9 L580.1 87.6 L580.7 87.1 L581.3 86.5 L581.8 85.9 L582.4 85.4 L582.9 85.3 L583.4 85.3 L584.0 85.5 L584.5 86.3 L584.9 88.3 L585.6 93.4 L586.1 100.3 L586.7 107.4 L587.3 114.9 L587.9 122.6 L588.4 128.6 L589.1 132.6 L589.8 134.1 L590.4 134.7 L591.1 134.5 L591.8 134.7 L592.5 134.1 L593.1 132.6 L593.7 127.7 L594.2 121.9 L594.7 114.2 L595.3 106.2 L595.8 99.3 L596.5 92.2 L597.1 86.2 L597.7 81.8 L598.4 79.3 L599.0 78.2 L599.7 77.8 L600.2 77.6 L600.9 77.8 L601.5 78.3 L602.1 79.3 L602.7 80.6 L603.2 82.3 L603.8 84.2 L604.3 86.0 L604.9 87.3 L605.4 88.1 L606.0 88.6 L606.5 88.8 L607.1 88.9 L607.6 88.7 L608.2 88.2 L608.8 87.4 L609.3 86.4 L609.9 85.7 L610.4 85.3 L611.0 85.3 L611.5 85.5 L612.0 86.4 L612.5 88.3 L613.1 93.0 L613.7 99.3 L614.3 105.8 L614.8 112.7 L615.4 119.8 L615.9 125.3 L616.6 129.1 L617.3 130.4 L618.0 130.9 L618.7 130.8 L619.4 131.0 L620.0 130.4 L620.6 129.2 L621.3 125.2 L621.7 120.4 L622.3 114.0 L622.8 107.4 L623.3 101.8 L624.0 96.1 L624.6 91.5 L625.3 88.0 L625.9 85.7 L626.5 84.5 L627.2 84.0 L627.8 84.2 L628.4 84.9 L629.0 85.8 L629.7 86.2 L630.2 86.3 L630.8 86.1 L631.3 85.8 L631.9 85.5 L632.4 85.3 L633.0 85.1 L633.5 85.0 L634.1 84.8 L634.6 84.7 L635.2 84.6 L635.7 84.4 L636.3 84.2 L636.9 84.0 L637.4 83.9 L637.9 84.0 L638.5 84.1 L639.0 84.3 L639.5 85.1 L640.0 87.0 L640.6 92.0 L641.2 98.7 L641.8 105.6 L642.4 112.9 L642.9 120.4 L643.4 126.2 L644.1 130.2 L644.8 131.6 L645.5 132.2 L646.2 132.0 L646.9 132.2 L647.6 131.6 L648.1 130.4 L648.8 126.4 L649.3 121.6 L649.8 115.3 L650.3 108.6 L650.9 103.0 L651.5 97.4 L652.2 92.8 L652.8 89.3 L653.4 87.0 L654.0 85.7 L654.7 85.3 L655.3 85.6 L655.9 86.6 L656.6 87.6 L657.2 88.4 L657.7 88.6 L658.3 88.8 L658.8 88.8 L659.4 88.7 L660.0 88.4 L660.5 88.0 L661.1 87.3 L661.6 86.5 L662.2 85.7 L662.7 84.9 L663.3 84.1 L663.8 83.2 L664.4 82.4 L665.0 81.8 L665.5 81.5 L666.0 81.4 L666.6 81.5 L667.0 82.4 L667.5 84.5 L668.1 89.9 L668.7 97.3 L669.3 104.8 L669.9 112.7 L670.4 120.8 L671.0 127.1 L671.7 131.4 L672.3 132.9 L673.0 133.5 L673.7 133.3 L674.4 133.5 L675.1 132.9 L675.7 131.6 L676.3 127.2 L676.8 122.1 L677.3 115.2 L677.9 108.1 L678.4 102.0 L679.1 95.8 L679.7 90.7 L680.3 86.8 L680.9 84.3 L681.6 83.1 L682.3 82.8 L682.8 83.2 L683.4 84.3 L684.1 85.6 L684.7 86.6 L685.3 87.3 L685.8 87.9 L686.4 88.5 L686.9 88.9 L687.5 89.1 L688.0 89.0 L688.6 88.7 L689.1 88.3 L689.7 87.8 L690.2 87.4 L690.8 86.9 L691.4 86.4 L691.9 85.8 L692.5 85.4 L693.0 85.3 L693.6 85.3 L694.1 85.5 L694.6 86.3 L695.1 88.3 L695.7 93.4 L696.3 100.3 L696.8 107.4 L697.4 114.9 L698.0 122.6 L698.5 128.6 L699.2 132.6 L699.9 134.1 L700.6 134.7 L701.2 134.5 L701.9 134.7 L702.6 134.1 L703.2 132.7 L703.9 127.8 L704.3 122.2 L704.9 114.6 L705.4 106.8 L705.9 100.1 L706.6 93.1 L707.2 87.3 L707.9 83.0 L708.5 80.4 L709.1 79.3 L709.8 79.0 L710.4 79.2 L711.0 80.0 L711.6 81.1 L712.3 82.2 L712.8 83.4 L713.3 84.7 L713.9 86.1 L714.5 87.3 L715.0 88.1 L715.6 88.3 L716.1 88.1 L716.7 87.7 L717.2 87.2 L717.8 86.8 L718.3 86.5 L718.9 86.0 L719.5 85.6 L720.0 85.3 L720.5 85.3 L721.1 85.3 L721.6 85.5 L722.1 86.3 L722.6 88.3 L723.2 93.5 L723.8 100.5 L724.4 107.8 L724.9 115.4 L725.5 123.2 L726.0 129.3 L726.7 133.4 L727.4 134.9 L728.1 135.5 L728.8 135.3 L729.5 135.6 L730.2 134.9 L730.7 133.2 L731.4 127.6 L731.9 121.1 L732.4 112.5 L732.9 103.5 L733.5 95.7 L734.1 87.5 L734.7 80.6 L735.4 75.5 L736.0 72.7 L736.6 71.8 L737.3 71.5 L737.9 71.3 L738.5 71.5 L739.1 72.2 L739.8 73.6 L740.3 75.7 L740.9 78.5 L741.4 81.6 L742.0 84.6 L742.5 86.8 L743.1 88.4 L743.6 89.6 L744.2 90.4 L744.7 91.1 L745.3 91.5 L745.9 91.6 L746.4 91.3 L747.0 90.8 L747.5 90.4 L748.1 90.4 L748.6 90.6 L749.1 90.9 L749.6 91.7 L750.1 93.4 L750.7 97.6 L751.3 103.2 L751.9 109.1 L752.5 115.4 L753.0 121.9 L753.6 127.0 L754.3 130.4 L754.9 131.6 L755.6 132.1 L756.3 132.0 L757.0 132.1 L757.7 131.6 L758.3 130.5 L758.9 126.6 L759.4 121.9 L759.9 115.7 L760.5 109.3 L761.0 103.9 L761.6 98.4 L762.3 94.0 L762.9 90.6 L763.5 88.3 L764.2 87.1 L764.8 86.6 L765.4 86.8 L766.0 87.6 L766.7 88.5 L767.3 89.0 L767.9 89.0 L768.4 88.8 L769.0 88.5 L769.5 88.2 L770.1 88.0 L770.6 87.9 L771.2 87.8 L771.7 87.8 L772.3 87.8 L772.8 87.7 L773.4 87.5 L774.0 87.1 L774.5 86.8 L775.1 86.6 L775.6 86.6 L776.2 86.7 L776.7 86.9 L777.2 87.7 L777.6 89.6 L778.3 94.3 L778.9 100.5 L779.4 107.0 L780.0 113.9 L780.6 121.0 L781.1 126.6 L781.8 130.3 L782.5 131.6 L783.2 132.1 L783.8 132.0 L784.5 132.2 L785.2 131.6 L785.8 130.4 L786.5 126.2 L786.9 121.3 L787.4 114.8 L788.0 108.0 L788.5 102.2 L789.2 96.4 L789.8 91.6 L790.4 88.0 L791.1 85.6 L791.7 84.4 L792.4 84.0 L792.9 84.4 L793.6 85.5 L794.2 86.8 L794.9 87.9 L795.4 88.6 L795.9 89.5 L796.5 90.2 L797.0 90.8 L797.6 91.0 L798.2 90.7 L798.7 90.0 L799.3 89.2 L799.8 88.4 L800.4 87.7 L800.9 87.3 L801.5 86.9 L802.1 86.7 L802.6 86.5 L803.1 86.6 L803.7 86.7 L804.2 86.8 L804.7 87.6 L805.2 89.6 L805.8 94.7 L806.4 101.6 L807.0 108.7 L807.5 116.2 L808.1 123.9 L808.6 129.9 L809.3 133.9 L810.0 135.4 L810.7 136.0 L811.4 135.8 L812.1 136.0 L812.7 135.4 L813.3 134.1 L814.0 129.6 L814.4 124.3 L815.0 117.3 L815.5 109.9 L816.1 103.7 L816.7 97.3 L817.3 92.0 L818.0 88.0 L818.6 85.6 L819.2 84.4 L819.9 84.0 L820.5 84.3 L821.1 85.1 L821.7 86.0 L822.4 86.6 L822.9 86.6 L823.5 86.4 L824.0 86.1 L824.6 85.8 L825.1 85.5 L825.7 85.4 L826.2 85.3 L826.8 85.2 L827.3 85.1 L827.9 85.0 L828.4 84.8 L829.0 84.4 L829.6 84.1 L830.1 84.0 L830.6 84.0 L831.2 84.1 L831.7 84.2 L832.2 85.0 L832.7 87.0 L833.3 92.3 L833.9 99.4 L834.5 106.7 L835.1 114.4 L835.6 122.3 L836.1 128.4 L836.9 132.6 L837.5 134.1 L838.2 134.7 L838.9 134.5 L839.6 134.7 L840.3 134.1 L840.9 132.6 L841.5 127.7 L842.0 121.9 L842.5 114.2 L843.1 106.2 L843.6 99.3 L844.2 92.2 L844.9 86.2 L845.5 81.8 L846.1 79.2 L846.8 78.1 L847.4 77.8 L848.0 78.1 L848.6 78.9 L849.3 80.0 L849.9 81.2 L850.4 82.4 L851.0 83.8 L851.6 85.2 L852.1 86.6 L852.7 87.8 L853.2 88.8 L853.8 89.8 L854.3 90.6 L854.9 91.3 L855.4 91.7 L856.0 91.7 L856.6 91.3 L857.1 90.8 L857.7 90.5 L858.2 90.4 L858.7 90.5 L859.3 90.6 L859.8 91.4 L860.2 93.4 L860.9 98.5 L861.4 105.4 L862.0 112.5 L862.6 120.0 L863.2 127.7 L863.7 133.7 L864.4 137.7 L865.1 139.2 L865.7 139.8 L866.4 139.6 L867.1 139.8 L867.8 139.2 L868.4 137.9 L869.0 133.2 L869.5 127.8 L870.0 120.6 L870.6 113.1 L871.1 106.7 L871.8 100.1 L872.4 94.7 L873.0 90.6 L873.7 88.1 L874.3 86.9 L875.0 86.6 L875.5 87.0 L876.2 88.1 L876.8 89.3 L877.4 90.3 L878.0 90.8 L878.5 91.2 L879.1 91.6 L879.6 91.9 L880.2 92.2 L880.7 92.5 L881.3 92.9 L881.8 93.2 L882.4 93.4 L882.9 93.4 L883.5 93.2 L884.1 92.7 L884.6 92.1 L885.2 91.7 L885.7 91.6 L886.3 91.6 L886.8 91.8 L887.3 92.6 L887.8 94.6 L888.4 99.6 L889.0 106.3 L889.6 113.2 L890.1 120.5 L890.7 128.0 L891.2 133.8 L891.9 137.8 L892.6 139.2 L893.3 139.8 L894.0 139.6 L894.7 139.9 L895.3 139.2 L895.9 137.6 L896.6 132.0 L897.0 125.6 L897.6 117.1 L898.1 108.1 L898.6 100.5 L899.3 92.4 L899.9 85.5 L900.6 80.5 L901.2 77.7 L901.8 76.7 L902.5 76.5 L903.1 77.0 L903.7 78.1 L904.3 79.4 L905.0 80.2 L905.5 80.3 L906.1 80.1 L906.6 79.7 L907.2 79.4 L907.7 79.2 L908.3 79.2 L908.8 79.4 L909.4 79.5 L909.9 79.6" fill="none" stroke="#3c93e0" stroke-width="2.1" stroke-linejoin="round" stroke-linecap="round"/></svg></div>
    </div>
</div>


<div class="panel" style="left:1520px;top:100px;width:381px;height:350px;overflow:hidden">
  <div class="ph"><span>Recent Alerts</span></div>
  <div class="abs" style="left:0;top:48px;width:379px;height:301px;overflow:hidden">
  <div class="al" style="top:0px">
      <svg class="abs" style="left:4.8px;top:20px" width="21" height="21" viewBox="0 0 22 22"><path d="M7.3 2h7.4l5.3 5.3v7.4l-5.3 5.3H7.3L2 14.7V7.3z" fill="#e04a3a" stroke="#e04a3a" stroke-width="3.2" stroke-linejoin="round"/><path d="M7.6 7.6l6.8 6.8M14.4 7.6l-6.8 6.8" stroke="#fff" stroke-width="2.2" stroke-linecap="round"/></svg>
      <div class="at">File system 'px_9bbc0f26-pvc-46...</div><div class="ad">2023-11-20 10:43</div>
      <svg class="abs" style="left:326px;top:24.3px" width="13" height="13" viewBox="0 0 13 13"><path d="M1 1l11 11M12 1L1 12" stroke="#777" stroke-width="1.4"/></svg>
    </div>
  <div class="al" style="top:65.2px">
      <svg class="abs" style="left:4.8px;top:20px" width="21" height="21" viewBox="0 0 22 22"><path d="M7.3 2h7.4l5.3 5.3v7.4l-5.3 5.3H7.3L2 14.7V7.3z" fill="#e04a3a" stroke="#e04a3a" stroke-width="3.2" stroke-linejoin="round"/><path d="M7.6 7.6l6.8 6.8M14.4 7.6l-6.8 6.8" stroke="#fff" stroke-width="2.2" stroke-linecap="round"/></svg>
      <div class="at">File system 'px_9bbc0f26-pvc-0a...</div><div class="ad">2023-11-20 10:43</div>
      <svg class="abs" style="left:326px;top:24.3px" width="13" height="13" viewBox="0 0 13 13"><path d="M1 1l11 11M12 1L1 12" stroke="#777" stroke-width="1.4"/></svg>
    </div>
  <div class="al" style="top:130.4px">
      <svg class="abs" style="left:4.8px;top:20px" width="21" height="21" viewBox="0 0 22 22"><path d="M7.3 2h7.4l5.3 5.3v7.4l-5.3 5.3H7.3L2 14.7V7.3z" fill="#e04a3a" stroke="#e04a3a" stroke-width="3.2" stroke-linejoin="round"/><path d="M7.6 7.6l6.8 6.8M14.4 7.6l-6.8 6.8" stroke="#fff" stroke-width="2.2" stroke-linecap="round"/></svg>
      <div class="at">File system 'px_9bbc0f26-pvc-68...</div><div class="ad">2023-11-20 10:43</div>
      <svg class="abs" style="left:326px;top:24.3px" width="13" height="13" viewBox="0 0 13 13"><path d="M1 1l11 11M12 1L1 12" stroke="#777" stroke-width="1.4"/></svg>
    </div>
  <div class="al" style="top:195.7px">
      <svg class="abs" style="left:4.8px;top:20px" width="21" height="21" viewBox="0 0 22 22"><path d="M7.3 2h7.4l5.3 5.3v7.4l-5.3 5.3H7.3L2 14.7V7.3z" fill="#e04a3a" stroke="#e04a3a" stroke-width="3.2" stroke-linejoin="round"/><path d="M7.6 7.6l6.8 6.8M14.4 7.6l-6.8 6.8" stroke="#fff" stroke-width="2.2" stroke-linecap="round"/></svg>
      <div class="at">File system 'px_9bbc0f26-pvc-1d...</div><div class="ad">2023-11-20 10:43</div>
      <svg class="abs" style="left:326px;top:24.3px" width="13" height="13" viewBox="0 0 13 13"><path d="M1 1l11 11M12 1L1 12" stroke="#777" stroke-width="1.4"/></svg>
    </div>
  <div class="al" style="top:261px">
      <svg class="abs" style="left:4.8px;top:20px" width="21" height="21" viewBox="0 0 22 22"><path d="M7.3 2h7.4l5.3 5.3v7.4l-5.3 5.3H7.3L2 14.7V7.3z" fill="#e04a3a" stroke="#e04a3a" stroke-width="3.2" stroke-linejoin="round"/><path d="M7.6 7.6l6.8 6.8M14.4 7.6l-6.8 6.8" stroke="#fff" stroke-width="2.2" stroke-linecap="round"/></svg>
      <div class="at">File system 'px_9bbc0f26-pvc-10...</div><div class="ad">2023-11-20 10:43</div>
      <svg class="abs" style="left:326px;top:24.3px" width="13" height="13" viewBox="0 0 13 13"><path d="M1 1l11 11M12 1L1 12" stroke="#777" stroke-width="1.4"/></svg>
    </div>
  </div>
</div>


<div class="panel" style="left:1520px;top:471px;width:381px;height:194px">
  <div class="ph"><span>Replication Bandwidth</span></div>
  <div class="abs rt"><span class="p">Total:</span>&nbsp; <b>105.10 B/s</b></div>
  <div class="abs rl" style="left:15px;top:140px;font-size:14.4px;letter-spacing:-0.55px">105.10 B/s</div>
  <div class="abs" style="left:90px;top:148.6px;width:270px;height:1.3px;background:#9170b8"></div>
  <div class="abs" style="left:356.5px;top:145.8px;width:6.6px;height:6.6px;border-radius:4px;background:#8a67b3"></div>
  <div class="abs rl" style="left:90px;top:154.6px">09:44</div>
  <div class="abs rl" style="right:15.5px;top:154.6px">10:44</div>
</div>


<div class="panel" style="left:1520px;top:686px;width:381px;height:263px">
  <div class="ph"><span>Hardware Health</span></div>
  <div class="abs hwt">FlashBlade//S200</div>
  <svg class="abs" style="left:15px;top:96.2px" width="350" height="143" viewBox="0 0 350 143">
    <rect x="0.5" y="0.5" width="348" height="141" fill="#fff" stroke="#e0e0e0"/>
    <rect x="0" y="0" width="11.5" height="142" fill="#9ac25a"/>
    <rect x="26.40" y="9" width="25" height="79.2" fill="#d9d9d9" stroke="#e4e4e4" stroke-width="1"/><rect x="29.40" y="11.5" width="20" height="13.3" fill="#9ac25a"/><rect x="57.80" y="9" width="25" height="79.2" fill="#d9d9d9" stroke="#e4e4e4" stroke-width="1"/><rect x="60.80" y="11.5" width="20" height="13.3" fill="#9ac25a"/><rect x="89.20" y="9" width="25" height="79.2" fill="#d9d9d9" stroke="#e4e4e4" stroke-width="1"/><rect x="92.20" y="11.5" width="20" height="13.3" fill="#9ac25a"/><rect x="120.60" y="9" width="25" height="79.2" fill="#d9d9d9" stroke="#e4e4e4" stroke-width="1"/><rect x="123.60" y="11.5" width="20" height="13.3" fill="#9ac25a"/><rect x="152.00" y="9" width="25" height="79.2" fill="#d9d9d9" stroke="#e4e4e4" stroke-width="1"/><rect x="155.00" y="11.5" width="20" height="13.3" fill="#9ac25a"/><rect x="183.40" y="9" width="25" height="79.2" fill="#d9d9d9" stroke="#e4e4e4" stroke-width="1"/><rect x="186.40" y="11.5" width="20" height="13.3" fill="#9ac25a"/><rect x="214.80" y="9" width="25" height="79.2" fill="#d9d9d9" stroke="#e4e4e4" stroke-width="1"/><rect x="217.80" y="11.5" width="20" height="13.3" fill="#9ac25a"/><rect x="246.70" y="9.5" width="24.5" height="78.6" fill="#fff" stroke="#e2e2e2" stroke-width="1"/><rect x="249.20" y="11.5" width="20" height="13.3" fill="#e8e8e8"/><rect x="278.10" y="9.5" width="24.5" height="78.6" fill="#fff" stroke="#e2e2e2" stroke-width="1"/><rect x="280.60" y="11.5" width="20" height="13.3" fill="#e8e8e8"/><rect x="309.50" y="9.5" width="24.5" height="78.6" fill="#fff" stroke="#e2e2e2" stroke-width="1"/><rect x="312.00" y="11.5" width="20" height="13.3" fill="#e8e8e8"/>
    <rect x="26" y="96" width="309" height="15.6" fill="#dcdcdc"/>
    <rect x="26" y="96" width="15" height="15.6" fill="#9ac25a"/>
    <rect x="26" y="117.2" width="309" height="15.6" fill="#dcdcdc"/>
    <rect x="26" y="117.2" width="15" height="15.6" fill="#9ac25a"/>
  </svg>
</div>

</div>
</body></html>
